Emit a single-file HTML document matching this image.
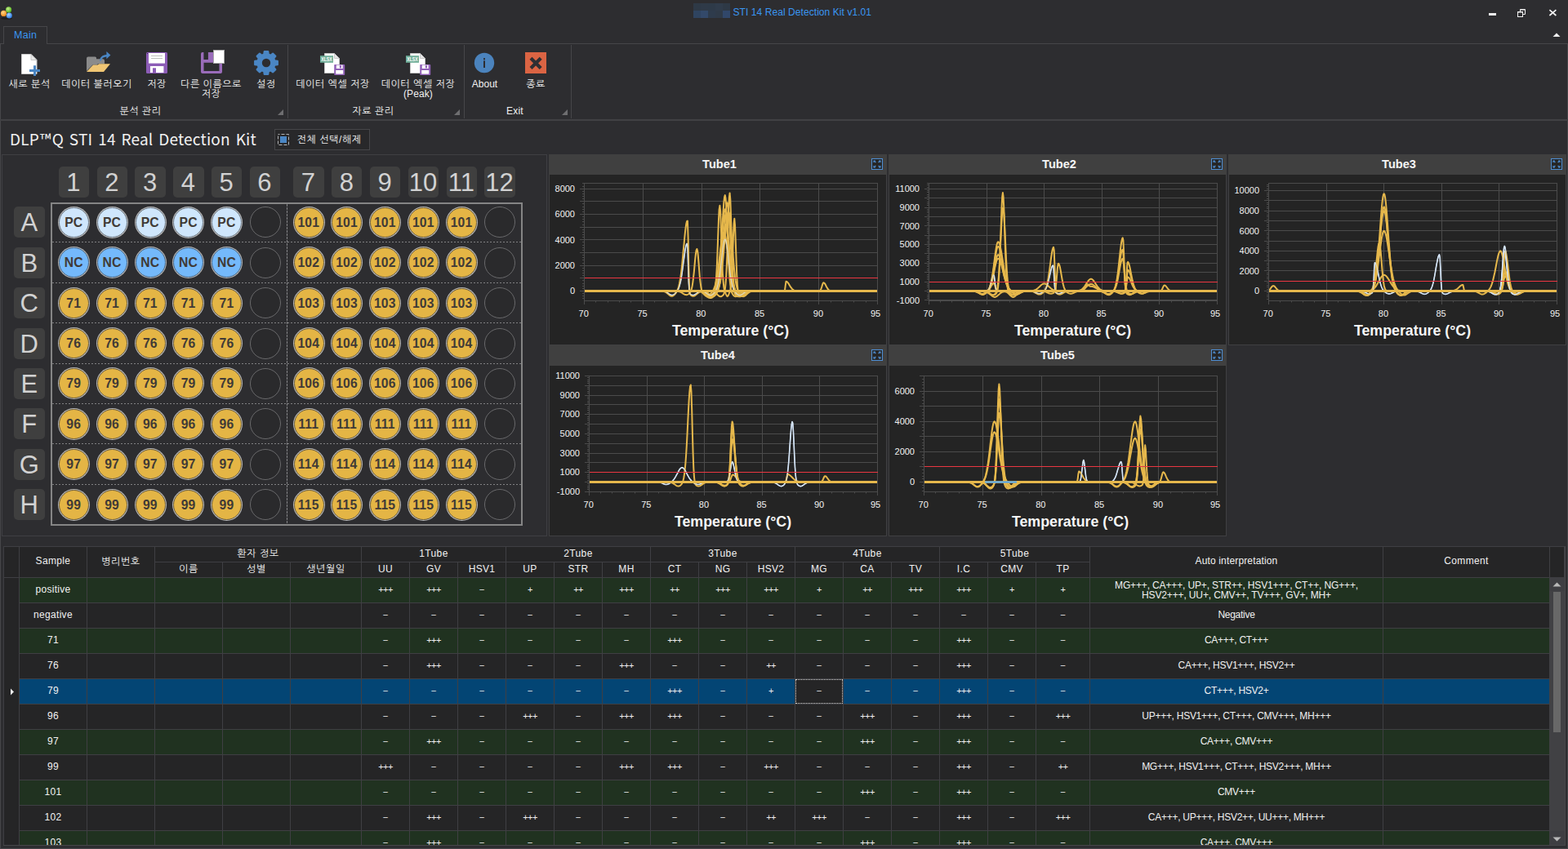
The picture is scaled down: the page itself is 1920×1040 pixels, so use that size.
<!DOCTYPE html><html lang="ko"><head><meta charset="utf-8"><title>STI 14 Real Detection Kit v1.01</title><style>
*{box-sizing:border-box;margin:0;padding:0}
html,body{width:1920px;height:1040px;overflow:hidden;background:#2d2d30;}
body{position:relative;font-family:"Liberation Sans","NanumGothic",sans-serif;font-size:12px;color:#f1f1f1;line-height:12px;}
.abs{position:absolute}
.t{position:absolute;white-space:nowrap;letter-spacing:0.5px}
.c{text-align:center}
.ln{position:absolute;background:#464649}
.rl{position:absolute;text-align:center;white-space:nowrap;letter-spacing:0.55px;line-height:12px}
.hd{position:absolute;width:37.4px;height:38px;border-radius:5px;background:#3f3f3f;color:#d2d2d2;text-align:center;text-indent:-1px;font-family:"Liberation Sans",sans-serif}
.w{position:absolute;width:37px;height:37px;border-radius:50%;text-align:center;font:bold 15.7px/36px "Liberation Sans",sans-serif;color:#403a36;letter-spacing:0.15px;text-indent:-0.6px}
.we{border:1.2px solid #69696b;background:#2a2a2c;width:38px;height:38px;margin:-0.5px}
.wy{border:1px solid #6b5d3c;background:#e4b545;box-shadow:0 0 0 1px #b4b4b4}
.wp{border:1px solid #6f7a86;background:#cfe6fc;box-shadow:0 0 0 1px #b4b4b4}
.wn{border:1px solid #4a6784;background:#74b9fb;box-shadow:0 0 0 1px #b0b0b0}
.ct{position:absolute;height:25px;background:#404040;text-align:center;font:bold 14.6px/24px "Liberation Sans",sans-serif;color:#f4f4f4;padding-left:4px}
.cb{position:absolute;background:#242424;border:1px solid #404042;border-top:none}
svg text{font-family:"Liberation Sans",sans-serif}
.cell{position:absolute;text-align:center;white-space:nowrap;overflow:hidden}
</style></head><body>
<svg class="abs" style="left:0;top:6px" width="18" height="20" viewBox="0 0 18 20">
<defs>
<radialGradient id="gG" cx="40%" cy="35%" r="65%"><stop offset="0" stop-color="#c8f58a"/><stop offset="1" stop-color="#4fae1c"/></radialGradient>
<radialGradient id="gO" cx="40%" cy="35%" r="65%"><stop offset="0" stop-color="#ffd88a"/><stop offset="1" stop-color="#f08a1a"/></radialGradient>
<radialGradient id="gB" cx="40%" cy="35%" r="65%"><stop offset="0" stop-color="#a8d4ff"/><stop offset="1" stop-color="#2f7fe8"/></radialGradient>
</defs>
<ellipse cx="8" cy="16.6" rx="7" ry="1.2" fill="#1c1c1e"/>
<circle cx="10.6" cy="5.9" r="3.6" fill="url(#gG)"/>
<circle cx="4.5" cy="10.4" r="3.6" fill="url(#gO)"/>
<circle cx="11.3" cy="12.9" r="3.5" fill="url(#gB)"/>
</svg>
<div class="abs" style="left:849px;top:4px;width:9px;height:9px;background:#2e3946"></div>
<div class="abs" style="left:849px;top:13px;width:9px;height:9px;background:#2f4460"></div>
<div class="abs" style="left:858px;top:4px;width:9px;height:9px;background:#2f3a48"></div>
<div class="abs" style="left:858px;top:13px;width:9px;height:9px;background:#33496a"></div>
<div class="abs" style="left:867px;top:4px;width:9px;height:9px;background:#2e3a48"></div>
<div class="abs" style="left:867px;top:13px;width:9px;height:9px;background:#2e3b4c"></div>
<div class="abs" style="left:876px;top:4px;width:9px;height:9px;background:#303c4b"></div>
<div class="abs" style="left:876px;top:13px;width:9px;height:9px;background:#2f3a48"></div>
<div class="abs" style="left:885px;top:4px;width:9px;height:9px;background:#2e3946"></div>
<div class="abs" style="left:885px;top:13px;width:9px;height:9px;background:#31476a"></div>
<div class="t" style="left:897.5px;top:9px;color:#3a96f2;letter-spacing:0.07px;font-family:'Liberation Sans',sans-serif">STI 14 Real Detection Kit v1.01</div>
<div class="abs" style="left:1823px;top:16px;width:9px;height:3px;background:#f1f1f1"></div>
<svg class="abs" style="left:1857px;top:10px" width="12" height="12" viewBox="0 0 12 12" fill="none" stroke="#f1f1f1" stroke-width="1"><path d="M4.5 4v-2.5h6v6h-2.5" /><path d="M4.5 2h6" /><rect x="1.5" y="4.5" width="6" height="6"/><path d="M1.5 5h6"/></svg>
<svg class="abs" style="left:1895px;top:10px" width="12" height="12" viewBox="0 0 12 12" stroke="#f1f1f1" stroke-width="1.7"><path d="M2.4 2.2l8 6.8M10.4 2.2l-8 6.8"/></svg>
<svg class="abs" style="left:1901px;top:39px" width="10" height="7" viewBox="0 0 10 7"><path d="M0.5 6L5 1.5L9.5 6z" fill="#f1f1f1"/></svg>
<div class="ln" style="left:0;top:53px;width:1920px;height:1px"></div>
<div class="abs" style="left:4px;top:32px;width:54px;height:22px;border:1px solid #464649;border-bottom:none;background:#2d2d30"></div>
<div class="t" style="left:17px;top:37px;color:#3a96f2;font-size:12.5px;letter-spacing:0.3px;font-family:'Liberation Sans',sans-serif">Main</div>
<div class="ln" style="left:0;top:54px;width:1px;height:986px"></div>
<div class="ln" style="left:1919px;top:54px;width:1px;height:986px"></div>
<div class="ln" style="left:0;top:1039px;width:1920px;height:1px"></div>
<div class="ln" style="left:0;top:146px;width:1920px;height:2px;background:#414144"></div>
<div class="ln" style="left:352px;top:55px;width:1px;height:90px"></div>
<div class="ln" style="left:568px;top:55px;width:1px;height:90px"></div>
<div class="ln" style="left:699px;top:55px;width:1px;height:90px"></div>
<svg class="abs" style="left:340px;top:134px" width="7" height="7"><path d="M7 0V7H0z" fill="#6e6e70"/></svg>
<svg class="abs" style="left:556px;top:134px" width="7" height="7"><path d="M7 0V7H0z" fill="#6e6e70"/></svg>
<svg class="abs" style="left:688px;top:134px" width="7" height="7"><path d="M7 0V7H0z" fill="#6e6e70"/></svg>
<svg class="abs" style="left:24px;top:62px" width="28" height="32" viewBox="0 0 28 32">
<path d="M2.5 4.5h11.5l7 7v17H2.5z" fill="#fff" stroke="#c9c9c9" stroke-width="1"/>
<path d="M14 4.5v7h7z" fill="#e9e9e9" stroke="#bdbdbd" stroke-width="0.8"/>
<path d="M17 18.2h3v4.8h5v3h-5v5h-3v-5h-5v-3h5z" fill="#4a86c4"/></svg>
<div class="rl" style="left:-29.0px;top:97px;width:130px">새로 분석</div>
<svg class="abs" style="left:104px;top:60px" width="34" height="32" viewBox="0 0 34 32">
<path d="M2 11.5q0-2 2-2h8.5q1.5 0 1.5 1.5v1.2h7.8q2.2 0 2.2 2v4H16l-1.6 1.4H9.5L2 27z" fill="#8b8b8b"/>
<path d="M2 28L10 19.6h5.5l1.8-1.4H31L23 28z" fill="#f0c674"/>
<path d="M18 14.6c0.3-4.6 3.4-7.2 8.4-7.6V3l5 4.6-5 4.6V9.6c-3.4 0.2-5.6 1.6-6.6 5z" fill="#4a86c4"/></svg>
<div class="rl" style="left:53.5px;top:97px;width:130px">데이터 불러오기</div>
<svg class="abs" style="left:179px;top:64px" width="26" height="26" viewBox="0 0 26 26">
<rect x="0" y="0" width="26" height="26" rx="1.5" fill="#8c5cb6"/>
<rect x="3" y="1" width="20" height="12.6" fill="#fff"/>
<rect x="6" y="4" width="14" height="1" fill="#bdbdbd"/><rect x="6" y="7" width="14" height="1" fill="#bdbdbd"/>
<rect x="5" y="17" width="16.4" height="8" fill="#fff"/><rect x="8" y="19.3" width="4" height="5.7" fill="#8c5cb6"/>
<rect x="1" y="1" width="1" height="1" fill="#3a2a55"/></svg>
<div class="rl" style="left:127.0px;top:97px;width:130px">저장</div>
<svg class="abs" style="left:245px;top:60px" width="31" height="31" viewBox="0 0 31 31">
<path d="M4 4h12.5v12.8H4.5V27h19V17.8H27V28q0 2-2 2H3q-2 0-2-2V6q0-2 2-2z" fill="#9a6cba"/>
<rect x="4.4" y="4" width="5.5" height="9" fill="#2d2d30"/>
<rect x="16.5" y="1.5" width="13" height="16" fill="#fff" stroke="#a8a8a8" stroke-width="1"/></svg>
<div class="rl" style="left:193.5px;top:97px;width:130px">다른 이름으로</div>
<div class="rl" style="left:193.5px;top:109px;width:130px">저장</div>
<svg class="abs" style="left:309px;top:60px" width="34" height="34" viewBox="0 0 34 34">
<path d="M14.83 3.27 L19.17 3.27 L19.64 6.73 L22.40 7.88 L25.17 5.75 L28.25 8.83 L26.12 11.60 L27.27 14.36 L30.73 14.83 L30.73 19.17 L27.27 19.64 L26.12 22.40 L28.25 25.17 L25.17 28.25 L22.40 26.12 L19.64 27.27 L19.17 30.73 L14.83 30.73 L14.36 27.27 L11.60 26.12 L8.83 28.25 L5.75 25.17 L7.88 22.40 L6.73 19.64 L3.27 19.17 L3.27 14.83 L6.73 14.36 L7.88 11.60 L5.75 8.83 L8.83 5.75 L11.60 7.88 L14.36 6.73Z" fill="#4a86c4" stroke="#4a86c4" stroke-width="2.4" stroke-linejoin="round"/>
<circle cx="17" cy="17" r="5.2" fill="#2d2d30"/></svg>
<div class="rl" style="left:260.8px;top:97px;width:130px">설정</div>
<div class="rl" style="left:107.0px;top:130px;width:130px">분석 관리</div>
<svg class="abs" style="left:391px;top:63px" width="32" height="30" viewBox="0 0 32 30">
<path d="M6.5 2.5h12l6 6v18H6.5z" fill="#fff" stroke="#c4c4c4" stroke-width="1"/>
<path d="M18.5 2.5v6h6z" fill="#e6e6e6" stroke="#bdbdbd" stroke-width="0.8"/>
<rect x="1" y="5.2" width="16" height="8.6" fill="#6fae98"/>
<text x="2.2" y="12.1" font-size="7" font-weight="bold" fill="#fff" textLength="13.6" lengthAdjust="spacingAndGlyphs" font-family="Liberation Sans,sans-serif">XLSX</text>
<rect x="18.2" y="16" width="13" height="13" rx="0.8" fill="#9262b8"/>
<rect x="20.8" y="16.6" width="7.8" height="4.4" fill="#fff"/><rect x="24.8" y="17.2" width="2.2" height="3.2" fill="#9262b8"/>
<rect x="20.2" y="23" width="9" height="4.6" fill="#fff"/></svg>
<div class="rl" style="left:342.5px;top:97px;width:130px">데이터 엑셀 저장</div>
<svg class="abs" style="left:496px;top:63px" width="32" height="30" viewBox="0 0 32 30">
<path d="M6.5 2.5h12l6 6v18H6.5z" fill="#fff" stroke="#c4c4c4" stroke-width="1"/>
<path d="M18.5 2.5v6h6z" fill="#e6e6e6" stroke="#bdbdbd" stroke-width="0.8"/>
<rect x="1" y="5.2" width="16" height="8.6" fill="#6fae98"/>
<text x="2.2" y="12.1" font-size="7" font-weight="bold" fill="#fff" textLength="13.6" lengthAdjust="spacingAndGlyphs" font-family="Liberation Sans,sans-serif">XLSX</text>
<rect x="18.2" y="16" width="13" height="13" rx="0.8" fill="#9262b8"/>
<rect x="20.8" y="16.6" width="7.8" height="4.4" fill="#fff"/><rect x="24.8" y="17.2" width="2.2" height="3.2" fill="#9262b8"/>
<rect x="20.2" y="23" width="9" height="4.6" fill="#fff"/></svg>
<div class="rl" style="left:447.0px;top:97px;width:130px">데이터 엑셀 저장</div>
<div class="rl" style="left:447.0px;top:109px;width:130px;letter-spacing:0.1px">(Peak)</div>
<div class="rl" style="left:392.0px;top:130px;width:130px">자료 관리</div>
<svg class="abs" style="left:580px;top:64px" width="26" height="26" viewBox="0 0 26 26"><circle cx="13" cy="13" r="12.2" fill="#4b83bd"/><rect x="12" y="7.2" width="2" height="2" fill="#2d2d30"/><rect x="12" y="10.4" width="2" height="8.6" fill="#2d2d30"/></svg>
<div class="rl" style="left:528.5px;top:97px;width:130px;letter-spacing:0px">About</div>
<svg class="abs" style="left:643px;top:64px" width="26" height="26" viewBox="0 0 26 26"><rect width="26" height="26" fill="#db6443"/><path d="M7 7.2L19.2 19.4M19.2 7.2L7 19.4" stroke="#2f2f33" stroke-width="4.2"/></svg>
<div class="rl" style="left:591.0px;top:97px;width:130px">종료</div>
<div class="rl" style="left:565.5px;top:130px;width:130px;letter-spacing:0.2px">Exit</div>
<div class="t" style="left:12px;top:155px;font:19px/30px 'Noto Sans CJK KR','Liberation Sans',sans-serif;letter-spacing:0.2px;word-spacing:1.3px;color:#f1f1f1">DLP<span style="margin:0 1px">™</span>Q STI 14 Real Detection Kit</div>
<div class="abs" style="left:336px;top:158px;width:117px;height:26px;border:1px solid #464649;background:#28282a"></div>
<svg class="abs" style="left:340px;top:164px" width="14" height="14" viewBox="0 0 14 14"><rect x="0.5" y="0.5" width="13" height="13" fill="none" stroke="#b4b4b4" stroke-width="1" stroke-dasharray="4 2" stroke-dashoffset="2"/><rect x="3" y="3" width="8" height="8" fill="#4a86c4"/></svg>
<div class="t" style="left:363.5px;top:165px;letter-spacing:0.6px">전체 선택/해제</div>
<div class="abs" style="left:2px;top:189px;width:668px;height:468px;border:1px solid #3f3f43"></div>
<div class="hd" style="left:71.8px;top:204px;font-size:31px;line-height:39px">1</div>
<div class="hd" style="left:118.6px;top:204px;font-size:31px;line-height:39px">2</div>
<div class="hd" style="left:165.4px;top:204px;font-size:31px;line-height:39px">3</div>
<div class="hd" style="left:212.2px;top:204px;font-size:31px;line-height:39px">4</div>
<div class="hd" style="left:259.0px;top:204px;font-size:31px;line-height:39px">5</div>
<div class="hd" style="left:305.8px;top:204px;font-size:31px;line-height:39px">6</div>
<div class="hd" style="left:359.3px;top:204px;font-size:31px;line-height:39px">7</div>
<div class="hd" style="left:406.1px;top:204px;font-size:31px;line-height:39px">8</div>
<div class="hd" style="left:452.9px;top:204px;font-size:31px;line-height:39px">9</div>
<div class="hd" style="left:499.8px;top:204px;font-size:31px;line-height:39px">10</div>
<div class="hd" style="left:546.6px;top:204px;font-size:31px;line-height:39px">11</div>
<div class="hd" style="left:593.4px;top:204px;font-size:31px;line-height:39px">12</div>
<div class="hd" style="left:17.4px;top:253.3px;width:37.8px;font-size:31px;line-height:39px">A</div>
<div class="hd" style="left:17.4px;top:302.7px;width:37.8px;font-size:31px;line-height:39px">B</div>
<div class="hd" style="left:17.4px;top:352.1px;width:37.8px;font-size:31px;line-height:39px">C</div>
<div class="hd" style="left:17.4px;top:401.5px;width:37.8px;font-size:31px;line-height:39px">D</div>
<div class="hd" style="left:17.4px;top:450.9px;width:37.8px;font-size:31px;line-height:39px">E</div>
<div class="hd" style="left:17.4px;top:500.2px;width:37.8px;font-size:31px;line-height:39px">F</div>
<div class="hd" style="left:17.4px;top:549.6px;width:37.8px;font-size:31px;line-height:39px">G</div>
<div class="hd" style="left:17.4px;top:599.0px;width:37.8px;font-size:31px;line-height:39px">H</div>
<div class="abs" style="left:62px;top:248px;width:578px;height:396px;border:2px solid #858585"></div>
<div class="abs" style="left:64px;top:296px;width:574px;height:1px;background:repeating-linear-gradient(90deg,#808082 0 2px,transparent 2px 4px)"></div>
<div class="abs" style="left:64px;top:346px;width:574px;height:1px;background:repeating-linear-gradient(90deg,#808082 0 2px,transparent 2px 4px)"></div>
<div class="abs" style="left:64px;top:395px;width:574px;height:1px;background:repeating-linear-gradient(90deg,#808082 0 2px,transparent 2px 4px)"></div>
<div class="abs" style="left:64px;top:445px;width:574px;height:1px;background:repeating-linear-gradient(90deg,#808082 0 2px,transparent 2px 4px)"></div>
<div class="abs" style="left:64px;top:494px;width:574px;height:1px;background:repeating-linear-gradient(90deg,#808082 0 2px,transparent 2px 4px)"></div>
<div class="abs" style="left:64px;top:543px;width:574px;height:1px;background:repeating-linear-gradient(90deg,#808082 0 2px,transparent 2px 4px)"></div>
<div class="abs" style="left:64px;top:593px;width:574px;height:1px;background:repeating-linear-gradient(90deg,#808082 0 2px,transparent 2px 4px)"></div>
<div class="abs" style="left:351px;top:250px;width:1px;height:392px;background:repeating-linear-gradient(180deg,#858587 0 2.5px,transparent 2.5px 4px)"></div>
<div class="w wp" style="left:72.0px;top:253.8px">PC</div>
<div class="w wp" style="left:118.8px;top:253.8px">PC</div>
<div class="w wp" style="left:165.6px;top:253.8px">PC</div>
<div class="w wp" style="left:212.4px;top:253.8px">PC</div>
<div class="w wp" style="left:259.2px;top:253.8px">PC</div>
<div class="w we" style="left:306.0px;top:253.8px"></div>
<div class="w wy" style="left:359.5px;top:253.8px">101</div>
<div class="w wy" style="left:406.3px;top:253.8px">101</div>
<div class="w wy" style="left:453.1px;top:253.8px">101</div>
<div class="w wy" style="left:500.0px;top:253.8px">101</div>
<div class="w wy" style="left:546.8px;top:253.8px">101</div>
<div class="w we" style="left:593.6px;top:253.8px"></div>
<div class="w wn" style="left:72.0px;top:303.2px">NC</div>
<div class="w wn" style="left:118.8px;top:303.2px">NC</div>
<div class="w wn" style="left:165.6px;top:303.2px">NC</div>
<div class="w wn" style="left:212.4px;top:303.2px">NC</div>
<div class="w wn" style="left:259.2px;top:303.2px">NC</div>
<div class="w we" style="left:306.0px;top:303.2px"></div>
<div class="w wy" style="left:359.5px;top:303.2px">102</div>
<div class="w wy" style="left:406.3px;top:303.2px">102</div>
<div class="w wy" style="left:453.1px;top:303.2px">102</div>
<div class="w wy" style="left:500.0px;top:303.2px">102</div>
<div class="w wy" style="left:546.8px;top:303.2px">102</div>
<div class="w we" style="left:593.6px;top:303.2px"></div>
<div class="w wy" style="left:72.0px;top:352.6px">71</div>
<div class="w wy" style="left:118.8px;top:352.6px">71</div>
<div class="w wy" style="left:165.6px;top:352.6px">71</div>
<div class="w wy" style="left:212.4px;top:352.6px">71</div>
<div class="w wy" style="left:259.2px;top:352.6px">71</div>
<div class="w we" style="left:306.0px;top:352.6px"></div>
<div class="w wy" style="left:359.5px;top:352.6px">103</div>
<div class="w wy" style="left:406.3px;top:352.6px">103</div>
<div class="w wy" style="left:453.1px;top:352.6px">103</div>
<div class="w wy" style="left:500.0px;top:352.6px">103</div>
<div class="w wy" style="left:546.8px;top:352.6px">103</div>
<div class="w we" style="left:593.6px;top:352.6px"></div>
<div class="w wy" style="left:72.0px;top:402.0px">76</div>
<div class="w wy" style="left:118.8px;top:402.0px">76</div>
<div class="w wy" style="left:165.6px;top:402.0px">76</div>
<div class="w wy" style="left:212.4px;top:402.0px">76</div>
<div class="w wy" style="left:259.2px;top:402.0px">76</div>
<div class="w we" style="left:306.0px;top:402.0px"></div>
<div class="w wy" style="left:359.5px;top:402.0px">104</div>
<div class="w wy" style="left:406.3px;top:402.0px">104</div>
<div class="w wy" style="left:453.1px;top:402.0px">104</div>
<div class="w wy" style="left:500.0px;top:402.0px">104</div>
<div class="w wy" style="left:546.8px;top:402.0px">104</div>
<div class="w we" style="left:593.6px;top:402.0px"></div>
<div class="w wy" style="left:72.0px;top:451.4px">79</div>
<div class="w wy" style="left:118.8px;top:451.4px">79</div>
<div class="w wy" style="left:165.6px;top:451.4px">79</div>
<div class="w wy" style="left:212.4px;top:451.4px">79</div>
<div class="w wy" style="left:259.2px;top:451.4px">79</div>
<div class="w we" style="left:306.0px;top:451.4px"></div>
<div class="w wy" style="left:359.5px;top:451.4px">106</div>
<div class="w wy" style="left:406.3px;top:451.4px">106</div>
<div class="w wy" style="left:453.1px;top:451.4px">106</div>
<div class="w wy" style="left:500.0px;top:451.4px">106</div>
<div class="w wy" style="left:546.8px;top:451.4px">106</div>
<div class="w we" style="left:593.6px;top:451.4px"></div>
<div class="w wy" style="left:72.0px;top:500.8px">96</div>
<div class="w wy" style="left:118.8px;top:500.8px">96</div>
<div class="w wy" style="left:165.6px;top:500.8px">96</div>
<div class="w wy" style="left:212.4px;top:500.8px">96</div>
<div class="w wy" style="left:259.2px;top:500.8px">96</div>
<div class="w we" style="left:306.0px;top:500.8px"></div>
<div class="w wy" style="left:359.5px;top:500.8px">111</div>
<div class="w wy" style="left:406.3px;top:500.8px">111</div>
<div class="w wy" style="left:453.1px;top:500.8px">111</div>
<div class="w wy" style="left:500.0px;top:500.8px">111</div>
<div class="w wy" style="left:546.8px;top:500.8px">111</div>
<div class="w we" style="left:593.6px;top:500.8px"></div>
<div class="w wy" style="left:72.0px;top:550.1px">97</div>
<div class="w wy" style="left:118.8px;top:550.1px">97</div>
<div class="w wy" style="left:165.6px;top:550.1px">97</div>
<div class="w wy" style="left:212.4px;top:550.1px">97</div>
<div class="w wy" style="left:259.2px;top:550.1px">97</div>
<div class="w we" style="left:306.0px;top:550.1px"></div>
<div class="w wy" style="left:359.5px;top:550.1px">114</div>
<div class="w wy" style="left:406.3px;top:550.1px">114</div>
<div class="w wy" style="left:453.1px;top:550.1px">114</div>
<div class="w wy" style="left:500.0px;top:550.1px">114</div>
<div class="w wy" style="left:546.8px;top:550.1px">114</div>
<div class="w we" style="left:593.6px;top:550.1px"></div>
<div class="w wy" style="left:72.0px;top:599.5px">99</div>
<div class="w wy" style="left:118.8px;top:599.5px">99</div>
<div class="w wy" style="left:165.6px;top:599.5px">99</div>
<div class="w wy" style="left:212.4px;top:599.5px">99</div>
<div class="w wy" style="left:259.2px;top:599.5px">99</div>
<div class="w we" style="left:306.0px;top:599.5px"></div>
<div class="w wy" style="left:359.5px;top:599.5px">115</div>
<div class="w wy" style="left:406.3px;top:599.5px">115</div>
<div class="w wy" style="left:453.1px;top:599.5px">115</div>
<div class="w wy" style="left:500.0px;top:599.5px">115</div>
<div class="w wy" style="left:546.8px;top:599.5px">115</div>
<div class="w we" style="left:593.6px;top:599.5px"></div>
<div class="ct" style="left:672px;top:189px;width:414px;height:25px;line-height:24px;padding-left:4px">Tube1</div>
<svg class="abs" style="left:1067px;top:194px" width="14" height="14" viewBox="0 0 14 14"><rect x="0.5" y="0.5" width="13" height="13" fill="#262626" stroke="#4f8fd4"/><g fill="#4f8fd4"><path d="M2.4 2.4h3l-0.9 0.9 1.3 1.3-0.9 0.9-1.3-1.3-1.2 1.2z"/><path d="M2.4 2.4h3l-0.9 0.9 1.3 1.3-0.9 0.9-1.3-1.3-1.2 1.2z" transform="translate(14 0) scale(-1 1)"/><path d="M2.4 2.4h3l-0.9 0.9 1.3 1.3-0.9 0.9-1.3-1.3-1.2 1.2z" transform="translate(0 14) scale(1 -1)"/><path d="M2.4 2.4h3l-0.9 0.9 1.3 1.3-0.9 0.9-1.3-1.3-1.2 1.2z" transform="translate(14 14) scale(-1 -1)"/></g></svg>
<div class="cb" style="left:672px;top:214px;width:414px;height:209px"></div>
<svg class="abs" style="left:672px;top:214px" width="414" height="209" viewBox="672 214 414 209"><path d="M710 356.5H1075" stroke="#4b4b4b" stroke-width="1"/><path d="M710 340.5H1075" stroke="#4b4b4b" stroke-width="1"/><path d="M710 325.5H1075" stroke="#4b4b4b" stroke-width="1"/><path d="M710 309.5H1075" stroke="#4b4b4b" stroke-width="1"/><path d="M710 293.5H1075" stroke="#4b4b4b" stroke-width="1"/><path d="M710 278.5H1075" stroke="#4b4b4b" stroke-width="1"/><path d="M710 262.5H1075" stroke="#4b4b4b" stroke-width="1"/><path d="M710 246.5H1075" stroke="#4b4b4b" stroke-width="1"/><path d="M710 231.5H1075" stroke="#4b4b4b" stroke-width="1"/><path d="M710 356.5H715" stroke="#4b4b4b" stroke-width="1"/><text x="704" y="360.2" font-size="11" fill="#f2f2f2" text-anchor="end">0</text><path d="M710 325.5H715" stroke="#4b4b4b" stroke-width="1"/><text x="704" y="328.9" font-size="11" fill="#f2f2f2" text-anchor="end">2000</text><path d="M710 293.5H715" stroke="#4b4b4b" stroke-width="1"/><text x="704" y="297.5" font-size="11" fill="#f2f2f2" text-anchor="end">4000</text><path d="M710 262.5H715" stroke="#4b4b4b" stroke-width="1"/><text x="704" y="266.2" font-size="11" fill="#f2f2f2" text-anchor="end">6000</text><path d="M710 231.5H715" stroke="#4b4b4b" stroke-width="1"/><text x="704" y="234.9" font-size="11" fill="#f2f2f2" text-anchor="end">8000</text><path d="M713 365.5H715" stroke="#4b4b4b" stroke-width="1"/><path d="M713 362.5H715" stroke="#4b4b4b" stroke-width="1"/><path d="M713 359.5H715" stroke="#4b4b4b" stroke-width="1"/><path d="M713 356.5H715" stroke="#4b4b4b" stroke-width="1"/><path d="M713 353.5H715" stroke="#4b4b4b" stroke-width="1"/><path d="M713 350.5H715" stroke="#4b4b4b" stroke-width="1"/><path d="M713 347.5H715" stroke="#4b4b4b" stroke-width="1"/><path d="M713 343.5H715" stroke="#4b4b4b" stroke-width="1"/><path d="M713 340.5H715" stroke="#4b4b4b" stroke-width="1"/><path d="M713 337.5H715" stroke="#4b4b4b" stroke-width="1"/><path d="M713 334.5H715" stroke="#4b4b4b" stroke-width="1"/><path d="M713 331.5H715" stroke="#4b4b4b" stroke-width="1"/><path d="M713 328.5H715" stroke="#4b4b4b" stroke-width="1"/><path d="M713 325.5H715" stroke="#4b4b4b" stroke-width="1"/><path d="M713 322.5H715" stroke="#4b4b4b" stroke-width="1"/><path d="M713 318.5H715" stroke="#4b4b4b" stroke-width="1"/><path d="M713 315.5H715" stroke="#4b4b4b" stroke-width="1"/><path d="M713 312.5H715" stroke="#4b4b4b" stroke-width="1"/><path d="M713 309.5H715" stroke="#4b4b4b" stroke-width="1"/><path d="M713 306.5H715" stroke="#4b4b4b" stroke-width="1"/><path d="M713 303.5H715" stroke="#4b4b4b" stroke-width="1"/><path d="M713 300.5H715" stroke="#4b4b4b" stroke-width="1"/><path d="M713 296.5H715" stroke="#4b4b4b" stroke-width="1"/><path d="M713 293.5H715" stroke="#4b4b4b" stroke-width="1"/><path d="M713 290.5H715" stroke="#4b4b4b" stroke-width="1"/><path d="M713 287.5H715" stroke="#4b4b4b" stroke-width="1"/><path d="M713 284.5H715" stroke="#4b4b4b" stroke-width="1"/><path d="M713 281.5H715" stroke="#4b4b4b" stroke-width="1"/><path d="M713 278.5H715" stroke="#4b4b4b" stroke-width="1"/><path d="M713 275.5H715" stroke="#4b4b4b" stroke-width="1"/><path d="M713 271.5H715" stroke="#4b4b4b" stroke-width="1"/><path d="M713 268.5H715" stroke="#4b4b4b" stroke-width="1"/><path d="M713 265.5H715" stroke="#4b4b4b" stroke-width="1"/><path d="M713 262.5H715" stroke="#4b4b4b" stroke-width="1"/><path d="M713 259.5H715" stroke="#4b4b4b" stroke-width="1"/><path d="M713 256.5H715" stroke="#4b4b4b" stroke-width="1"/><path d="M713 253.5H715" stroke="#4b4b4b" stroke-width="1"/><path d="M713 249.5H715" stroke="#4b4b4b" stroke-width="1"/><path d="M713 246.5H715" stroke="#4b4b4b" stroke-width="1"/><path d="M713 243.5H715" stroke="#4b4b4b" stroke-width="1"/><path d="M713 240.5H715" stroke="#4b4b4b" stroke-width="1"/><path d="M713 237.5H715" stroke="#4b4b4b" stroke-width="1"/><path d="M713 234.5H715" stroke="#4b4b4b" stroke-width="1"/><path d="M713 231.5H715" stroke="#4b4b4b" stroke-width="1"/><path d="M713 228.5H715" stroke="#4b4b4b" stroke-width="1"/><path d="M713 224.5H715" stroke="#4b4b4b" stroke-width="1"/><path d="M715.5 224V373" stroke="#4b4b4b" stroke-width="1"/><text x="714.7" y="387.5" font-size="11" fill="#f2f2f2" text-anchor="middle">70</text><path d="M787.5 224V373" stroke="#4b4b4b" stroke-width="1"/><text x="786.5" y="387.5" font-size="11" fill="#f2f2f2" text-anchor="middle">75</text><path d="M859.5 224V373" stroke="#4b4b4b" stroke-width="1"/><text x="858.3" y="387.5" font-size="11" fill="#f2f2f2" text-anchor="middle">80</text><path d="M930.5 224V373" stroke="#4b4b4b" stroke-width="1"/><text x="930.1" y="387.5" font-size="11" fill="#f2f2f2" text-anchor="middle">85</text><path d="M1002.5 224V373" stroke="#4b4b4b" stroke-width="1"/><text x="1001.9" y="387.5" font-size="11" fill="#f2f2f2" text-anchor="middle">90</text><path d="M1074.5 224V373" stroke="#4b4b4b" stroke-width="1"/><text x="1072.1" y="387.5" font-size="11" fill="#f2f2f2" text-anchor="middle">95</text><path d="M715.5 368V370.5" stroke="#4b4b4b" stroke-width="1"/><path d="M729.5 368V370.5" stroke="#4b4b4b" stroke-width="1"/><path d="M744.5 368V370.5" stroke="#4b4b4b" stroke-width="1"/><path d="M758.5 368V370.5" stroke="#4b4b4b" stroke-width="1"/><path d="M772.5 368V370.5" stroke="#4b4b4b" stroke-width="1"/><path d="M787.5 368V370.5" stroke="#4b4b4b" stroke-width="1"/><path d="M801.5 368V370.5" stroke="#4b4b4b" stroke-width="1"/><path d="M816.5 368V370.5" stroke="#4b4b4b" stroke-width="1"/><path d="M830.5 368V370.5" stroke="#4b4b4b" stroke-width="1"/><path d="M844.5 368V370.5" stroke="#4b4b4b" stroke-width="1"/><path d="M859.5 368V370.5" stroke="#4b4b4b" stroke-width="1"/><path d="M873.5 368V370.5" stroke="#4b4b4b" stroke-width="1"/><path d="M887.5 368V370.5" stroke="#4b4b4b" stroke-width="1"/><path d="M902.5 368V370.5" stroke="#4b4b4b" stroke-width="1"/><path d="M916.5 368V370.5" stroke="#4b4b4b" stroke-width="1"/><path d="M930.5 368V370.5" stroke="#4b4b4b" stroke-width="1"/><path d="M945.5 368V370.5" stroke="#4b4b4b" stroke-width="1"/><path d="M959.5 368V370.5" stroke="#4b4b4b" stroke-width="1"/><path d="M973.5 368V370.5" stroke="#4b4b4b" stroke-width="1"/><path d="M988.5 368V370.5" stroke="#4b4b4b" stroke-width="1"/><path d="M1002.5 368V370.5" stroke="#4b4b4b" stroke-width="1"/><path d="M1017.5 368V370.5" stroke="#4b4b4b" stroke-width="1"/><path d="M1031.5 368V370.5" stroke="#4b4b4b" stroke-width="1"/><path d="M1045.5 368V370.5" stroke="#4b4b4b" stroke-width="1"/><path d="M1060.5 368V370.5" stroke="#4b4b4b" stroke-width="1"/><path d="M1074.5 368V370.5" stroke="#4b4b4b" stroke-width="1"/><path d="M715 224.5H1075M715 368.5H1075" stroke="#4b4b4b" stroke-width="1"/><clipPath id="cpTube1"><rect x="716" y="224" width="359" height="144"/></clipPath><g clip-path="url(#cpTube1)" fill="none" stroke-linejoin="round"><path d="M811,356.6 811.7,356.7 812.4,356.8 813.1,356.9 813.9,357.1 814.6,357.3 815.3,357.6 816,357.9 816.7,358.4 817.5,358.8 818.2,359.3 818.9,359.8 819.6,360.3 820.3,360.7 821,361.1 821.8,361.4 822.5,361.5 823.2,361.5 823.9,361.3 824.6,361 825.4,360.6 826.1,360.1 826.8,359.5 827.5,358.7 828.2,357.9 828.9,357 829.7,355.9 830.4,354.5 831.1,352.9 831.8,350.8 832.5,348.3 833.3,345.3 834,341.6 834.7,337.3 835.4,332.5 836.1,327.2 836.8,321.7 837.6,316.1 838.3,310.8 839,306.1 839.7,302.3 840.4,299.7 841.1,298.4 841.9,300.9 842.6,322.4 843.3,345.2 844,356.3 844.7,359.5 845.5,360.4 846.2,360.9 846.9,361.2 847.6,361.4 848.3,361.5 849,361.5 849.8,361.3 850.5,361 851.2,360.6 851.9,360.2 852.6,359.7 853.4,359.2 854.1,358.7 854.8,358.2 855.5,357.8 856.2,357.5 856.9,357.3 857.7,357.1 858.4,357 859.1,357 859.8,357 860.5,357.1 861.3,357.2 862,357.4 862.7,357.7 863.4,358.1 864.1,358.6 864.8,359 865.6,359.6 866.3,360.1 867,360.6 867.7,361 868.4,361.4 869.2,361.6 869.9,361.7 870.6,361.6 871.3,361.4 872,361.1 872.7,360.6 873.5,360 874.2,359.3 874.9,358.5 875.6,357.6 876.3,356.5 877,355.1 877.8,353.4 878.5,351.2 879.2,348.4 879.9,345.1 880.6,340.9 881.4,336.1 882.1,330.5 882.8,324.4 883.5,318.1 884.2,311.7 884.9,305.7 885.7,300.5 886.4,296.5 887.1,293.9 887.8,293.1 888.5,293.9 889.3,296.5 890,300.5 890.7,305.7 891.4,311.7 892.1,318.1 892.8,324.4 893.6,330.5 894.3,336.1 895,340.9 895.7,345.1 896.4,348.4 897.2,351.2 897.9,353.4 898.6,355.1 899.3,356.5 900,357.6 900.7,358.5 901.5,359.3 902.2,360 902.9,360.6 903.6,361.1 904.3,361.4 905.1,361.6 905.8,361.7 906.5,361.6 907.2,361.4 907.9,361 908.6,360.6 909.4,360.1 910.1,359.6 910.8,359 911.5,358.5 912.2,358.1 913,357.7 913.7,357.4 914.4,357.2 915.1,357 915.8,356.8 916.5,356.7 917.3,356.6 918,356.6" stroke="#d5e6f8" stroke-width="1.6"/><path d="M810.3,356.6 811,356.7 811.7,356.8 812.4,356.9 813.1,357.1 813.9,357.3 814.6,357.6 815.3,358 816,358.4 816.7,359 817.5,359.6 818.2,360.2 818.9,360.8 819.6,361.4 820.3,361.9 821,362.4 821.8,362.7 822.5,362.8 823.2,362.7 823.9,362.5 824.6,362 825.4,361.5 826.1,360.7 826.8,359.9 827.5,358.9 828.2,357.8 828.9,356.5 829.7,355 830.4,353.1 831.1,350.8 831.8,347.9 832.5,344.3 833.3,340 834,334.8 834.7,328.8 835.4,322 836.1,314.6 836.8,306.7 837.6,298.7 838.3,291 839,284 839.7,278.1 840.4,273.7 841.1,271.1 841.9,270.5 842.6,290.8 843.3,327.7 844,351.1 844.7,359.1 845.5,361 846.2,361.7 846.9,362.2 847.6,362.6 848.3,362.8 849,362.8 849.8,362.6 850.5,362.3 851.2,361.9 851.9,361.3 852.6,360.7 853.4,360.1 854.1,359.5 854.8,358.9 855.5,358.4 856.2,357.9 856.9,357.5 857.7,357.2 858.4,357 859.1,356.9 859.8,356.7 860.5,356.7 861.3,356.6M869.9,356.6 870.6,356.7 871.3,356.7 872,356.9 872.7,357 873.5,357.3 874.2,357.6 874.9,358 875.6,358.5 876.3,359 877,359.6 877.8,360.3 878.5,361 879.2,361.6 879.9,362.2 880.6,362.7 881.4,363 882.1,363.2 882.8,363.2 883.5,363 884.2,362.6 884.9,362 885.7,361.2 886.4,360 887.1,357.9 887.8,354.3 888.5,347.9 889.3,337.6 890,322.4 890.7,302.4 891.4,279.6 892.1,258 892.8,242.3 893.6,236.5 894.3,244.1 895,264 895.7,289.8 896.4,314.6 897.2,334.1 897.9,347 898.6,354.5 899.3,358.4 900,360.4 900.7,361.5 901.5,362.3 902.2,362.8 902.9,363.1 903.6,363.2 904.3,363.2 905.1,363 905.8,362.6 906.5,362 907.2,361.4 907.9,360.7 908.6,360.1 909.4,359.4 910.1,358.8 910.8,358.3 911.5,357.8 912.2,357.5 913,357.2 913.7,357 914.4,356.8 915.1,356.7 915.8,356.6 916.5,356.6" stroke="#e6b84c" stroke-width="2.0"/><path d="M828.2,356.6 828.9,356.6 829.7,356.7 830.4,356.8 831.1,357 831.8,357.2 832.5,357.4 833.3,357.7 834,358.1 834.7,358.5 835.4,359 836.1,359.4 836.8,359.9 837.6,360.3 838.3,360.7 839,361 839.7,361.1 840.4,361.2 841.1,361.1 841.9,360.9 842.6,360.5 843.3,360 844,359.4 844.7,358.7 845.5,357.6 846.2,356.1 846.9,353.8 847.6,350.6 848.3,346.1 849,340.3 849.8,333.3 850.5,325.4 851.2,317.7 851.9,311.1 852.6,306.6 853.4,305 854.1,307.2 854.8,313.3 855.5,321.9 856.2,331.2 856.9,339.8 857.7,346.7 858.4,351.8 859.1,355.2 859.8,357.3 860.5,358.8 861.3,359.7 862,360.5 862.7,361.2 863.4,361.8 864.1,362.4 864.8,362.9 865.6,363.4 866.3,363.8 867,364.2 867.7,364.5 868.4,364.8 869.2,364.9 869.9,365 870.6,364.9 871.3,364.8 872,364.5 872.7,364 873.5,363.4 874.2,362.7 874.9,361.8 875.6,360.8 876.3,359.6 877,358.1 877.8,356.1 878.5,353.5 879.2,349.9 879.9,345.2 880.6,338.9 881.4,330.8 882.1,320.9 882.8,309.3 883.5,296.3 884.2,282.6 884.9,269.2 885.7,257.1 886.4,247.4 887.1,241.2 887.8,239.1 888.5,242.8 889.3,253 890,268.1 890.7,285.7 891.4,303.3 892.1,319.2 892.8,332.3 893.6,342.2 894.3,349.2 895,354 895.7,357.1 896.4,359.1 897.2,360.5 897.9,361.5 898.6,362.2 899.3,362.8 900,363.1 900.7,363.2 901.5,363.2 902.2,362.9 902.9,362.5 903.6,362 904.3,361.4 905.1,360.7 905.8,360 906.5,359.4 907.2,358.8 907.9,358.3 908.6,357.8 909.4,357.5 910.1,357.2 910.8,357 911.5,356.8 912.2,356.7 913,356.6 913.7,356.6" stroke="#e6b84c" stroke-width="2.0"/><path d="M857.7,356.6 858.4,356.7 859.1,356.7 859.8,356.9 860.5,357 861.3,357.3 862,357.6 862.7,358 863.4,358.5 864.1,359 864.8,359.6 865.6,360.3 866.3,361 867,361.6 867.7,362.2 868.4,362.7 869.2,363 869.9,363.2 870.6,363.2 871.3,363 872,362.6 872.7,362.1 873.5,361.3 874.2,360.1 874.9,358.2 875.6,354.9 876.3,349.3 877,340.3 877.8,327 878.5,309.5 879.2,289.6 879.9,270.7 880.6,256.9 881.4,251.8 882.1,258.2 882.8,275.3 883.5,297.4 884.2,318.7 884.9,335.2 885.7,346 886.4,352.2 887.1,355.5 887.8,357.5 888.5,359.3 889.3,361.1 890,362.5 890.7,363.1 891.4,362.5 892.1,361.1 892.8,359.3 893.6,357.4 894.3,354.9 895,350.6 895.7,342.6 896.4,329.3 897.2,310.8 897.9,290.4 898.6,274 899.3,267.8 900,275.5 900.7,294.6 901.5,317.2 902.2,336.3 902.9,349 903.6,355.9 904.3,359.1 905.1,360.7 905.8,361.6 906.5,362.1 907.2,362.5 907.9,362.8 908.6,362.9 909.4,362.8 910.1,362.5 910.8,362.1 911.5,361.6 912.2,360.9 913,360.3 913.7,359.7 914.4,359.1 915.1,358.5 915.8,358.1 916.5,357.7 917.3,357.3 918,357.1 918.7,356.9 919.4,356.8 920.1,356.7 920.8,356.6" stroke="#e6b84c" stroke-width="2.0"/><path d="M857.7,356.6 858.4,356.7 859.1,356.8 859.8,356.9 860.5,357.1 861.3,357.4 862,357.7 862.7,358.1 863.4,358.6 864.1,359.1 864.8,359.8 865.6,360.4 866.3,361.1 867,361.8 867.7,362.3 868.4,362.8 869.2,363.1 869.9,363.2 870.6,363.1 871.3,362.9 872,362.4 872.7,361.8 873.5,361 874.2,360.1 874.9,358.9 875.6,357.6 876.3,355.9 877,353.9 877.8,351.2 878.5,347.9 879.2,343.6 879.9,338.3 880.6,331.8 881.4,324.2 882.1,315.4 882.8,305.8 883.5,295.7 884.2,285.7 884.9,276.2 885.7,268 886.4,261.7 887.1,257.6 887.8,256.3 888.5,257.6 889.3,261.7 890,268 890.7,276.2 891.4,285.7 892.1,295.7 892.8,305.8 893.6,315.4 894.3,324.2 895,331.8 895.7,338.3 896.4,343.6 897.2,347.9 897.9,351.2 898.6,353.9 899.3,355.9 900,357.6 900.7,358.9 901.5,360.1 902.2,361 902.9,361.8 903.6,362.4 904.3,362.9 905.1,363.1 905.8,363.2 906.5,363.1 907.2,362.8 907.9,362.3 908.6,361.8 909.4,361.1 910.1,360.4 910.8,359.8 911.5,359.1 912.2,358.6 913,358.1 913.7,357.7 914.4,357.4 915.1,357.1 915.8,356.9 916.5,356.8 917.3,356.7 918,356.6" stroke="#e6b84c" stroke-width="2.0"/><path d="M856.2,356.6 856.9,356.7 857.7,356.8 858.4,356.9 859.1,357.1 859.8,357.3 860.5,357.6 861.3,358 862,358.5 862.7,359 863.4,359.7 864.1,360.3 864.8,361 865.6,361.6 866.3,362.1 867,362.6 867.7,362.9 868.4,363 869.2,362.9 869.9,362.7 870.6,362.2 871.3,361.6 872,360.9 872.7,360 873.5,359 874.2,357.8 874.9,356.5 875.6,354.9 876.3,352.9 877,350.5 877.8,347.4 878.5,343.7 879.2,339.1 879.9,333.7 880.6,327.3 881.4,320.1 882.1,312.2 882.8,303.9 883.5,295.4 884.2,287.2 884.9,279.6 885.7,273.2 886.4,268.2 887.1,265.1 887.8,264.1 888.5,265.1 889.3,268.2 890,273.2 890.7,279.6 891.4,287.2 892.1,295.4 892.8,303.9 893.6,312.2 894.3,320.1 895,327.3 895.7,333.7 896.4,339.1 897.2,343.7 897.9,347.4 898.6,350.5 899.3,352.9 900,354.9 900.7,356.5 901.5,357.8 902.2,359 902.9,360 903.6,360.9 904.3,361.6 905.1,362.2 905.8,362.7 906.5,362.9 907.2,363 907.9,362.9 908.6,362.6 909.4,362.1 910.1,361.6 910.8,361 911.5,360.3 912.2,359.7 913,359 913.7,358.5 914.4,358 915.1,357.6 915.8,357.3 916.5,357.1 917.3,356.9 918,356.8 918.7,356.7 919.4,356.6" stroke="#e6b84c" stroke-width="2.0"/><path d="M858.4,356.6 859.1,356.7 859.8,356.7 860.5,356.9 861.3,357 862,357.3 862.7,357.6 863.4,357.9 864.1,358.4 864.8,358.9 865.6,359.4 866.3,360 867,360.6 867.7,361.2 868.4,361.7 869.2,362.1 869.9,362.4 870.6,362.5 871.3,362.4 872,362.2 872.7,361.8 873.5,361.2 874.2,360.6 874.9,359.7 875.6,358.8 876.3,357.6 877,356.2 877.8,354.5 878.5,352.3 879.2,349.6 879.9,346.1 880.6,341.8 881.4,336.5 882.1,330.2 882.8,323.1 883.5,315.3 884.2,307.1 884.9,299 885.7,291.3 886.4,284.6 887.1,279.5 887.8,276.2 888.5,275.1 889.3,276.2 890,279.5 890.7,284.6 891.4,291.3 892.1,299 892.8,307.1 893.6,315.3 894.3,323.1 895,330.2 895.7,336.5 896.4,341.8 897.2,346.1 897.9,349.6 898.6,352.3 899.3,354.5 900,356.2 900.7,357.6 901.5,358.8 902.2,359.7 902.9,360.6 903.6,361.2 904.3,361.8 905.1,362.2 905.8,362.4 906.5,362.5 907.2,362.4 907.9,362.1 908.6,361.7 909.4,361.2 910.1,360.6 910.8,360 911.5,359.4 912.2,358.9 913,358.4 913.7,357.9 914.4,357.6 915.1,357.3 915.8,357 916.5,356.9 917.3,356.7 918,356.7 918.7,356.6" stroke="#e6b84c" stroke-width="2.0"/><path d="M860.5,356.6 861.3,356.7 862,356.8 862.7,356.9 863.4,357.1 864.1,357.4 864.8,357.7 865.6,358.1 866.3,358.6 867,359.1 867.7,359.8 868.4,360.4 869.2,361.1 869.9,361.8 870.6,362.3 871.3,362.8 872,363.1 872.7,363.2 873.5,363.1 874.2,362.9 874.9,362.4 875.6,361.8 876.3,361 877,360 877.8,358.8 878.5,357.4 879.2,355.7 879.9,353.5 880.6,350.7 881.4,347.1 882.1,342.6 882.8,336.8 883.5,329.9 884.2,321.6 884.9,312.2 885.7,301.9 886.4,291 887.1,280.2 887.8,270 888.5,261.1 889.3,254.3 890,249.9 890.7,248.4 891.4,250.6 892.1,256.8 892.8,266.3 893.6,278.1 894.3,291.1 895,304.1 895.7,316.3 896.4,327 897.2,335.9 897.9,342.9 898.6,348.3 899.3,352.4 900,355.3 900.7,357.4 901.5,359 902.2,360.3 902.9,361.3 903.6,362 904.3,362.6 905.1,363 905.8,363.2 906.5,363.2 907.2,363 907.9,362.7 908.6,362.2 909.4,361.6 910.1,360.9 910.8,360.2 911.5,359.6 912.2,359 913,358.4 913.7,358 914.4,357.6 915.1,357.3 915.8,357 916.5,356.9 917.3,356.7 918,356.7 918.7,356.6" stroke="#e6b84c" stroke-width="2.0"/><path d="M859.1,356.6 859.8,356.6 860.5,356.7 861.3,356.8 862,357 862.7,357.2 863.4,357.4 864.1,357.8 864.8,358.2 865.6,358.7 866.3,359.3 867,360 867.7,360.6 868.4,361.3 869.2,361.9 869.9,362.5 870.6,362.9 871.3,363.1 872,363.2 872.7,363.1 873.5,362.7 874.2,362.2 874.9,361.5 875.6,360.7 876.3,359.8 877,358.8 877.8,357.6 878.5,356.2 879.2,354.6 879.9,352.6 880.6,350.3 881.4,347.3 882.1,343.8 882.8,339.5 883.5,334.3 884.2,328.4 884.9,321.6 885.7,314.1 886.4,306 887.1,297.6 887.8,289.3 888.5,281.3 889.3,274 890,267.9 890.7,263.3 891.4,260.4 892.1,259.4 892.8,260.7 893.6,264.6 894.3,270.8 895,278.8 895.7,287.9 896.4,297.6 897.2,307.4 897.9,316.7 898.6,325.2 899.3,332.6 900,338.9 900.7,344 901.5,348.2 902.2,351.4 902.9,354 903.6,356 904.3,357.6 905.1,359 905.8,360.1 906.5,361 907.2,361.8 907.9,362.4 908.6,362.9 909.4,363.1 910.1,363.2 910.8,363.1 911.5,362.8 912.2,362.3 913,361.8 913.7,361.1 914.4,360.4 915.1,359.8 915.8,359.1 916.5,358.6 917.3,358.1 918,357.7 918.7,357.4 919.4,357.1 920.1,356.9 920.8,356.8 921.6,356.7 922.3,356.6" stroke="#e6b84c" stroke-width="2.0"/><path d="M959.6,356.5 960.3,356.4 961.1,354.9 961.8,349.4 962.5,344.8 963.2,344.9 963.9,345.4 964.6,346.1 965.4,347.1 966.1,348.2 966.8,349.4 967.5,350.6 968.2,351.7 969,352.7 969.7,353.6 970.4,354.3 971.1,354.9 971.8,355.4 972.5,355.7 973.3,356 974,356.2 974.7,356.3 975.4,356.4 976.1,356.4M1002.7,356.4 1003.4,356.2 1004.1,355.8 1004.9,354.9 1005.6,353.4 1006.3,351.3 1007,348.9 1007.7,347 1008.4,346.3 1009.2,346.6 1009.9,347.3 1010.6,348.4 1011.3,349.8 1012,351.2 1012.8,352.5 1013.5,353.6 1014.2,354.6 1014.9,355.2 1015.6,355.7 1016.3,356.1 1017.1,356.3 1017.8,356.4 1018.5,356.4" stroke="#e6b84c" stroke-width="2.0"/><path d="M854.1,356.6 854.8,356.7 855.5,356.8 856.2,356.9 856.9,357.1 857.7,357.3 858.4,357.6 859.1,357.9 859.8,358.4 860.5,358.9 861.3,359.4 862,359.9 862.7,360.5 863.4,361 864.1,361.5 864.8,361.8 865.6,362 866.3,362.1 867,362 867.7,361.7 868.4,361.3 869.2,360.7 869.9,360.1 870.6,359.3 871.3,358.5 872,357.5 872.7,356.5 873.5,355.2 874.2,353.7 874.9,351.9 875.6,349.8 876.3,347.1 877,343.9 877.8,340.1 878.5,335.6 879.2,330.6 879.9,325 880.6,319 881.4,312.8 882.1,306.6 882.8,300.7 883.5,295.3 884.2,290.8 884.9,287.3 885.7,285.2 886.4,284.5 887.1,285.2 887.8,287.3 888.5,290.8 889.3,295.3 890,300.7 890.7,306.6 891.4,312.8 892.1,319 892.8,325 893.6,330.6 894.3,335.6 895,340.1 895.7,343.9 896.4,347.1 897.2,349.8 897.9,351.9 898.6,353.7 899.3,355.2 900,356.5 900.7,357.5 901.5,358.5 902.2,359.3 902.9,360.1 903.6,360.7 904.3,361.3 905.1,361.7 905.8,362 906.5,362.1 907.2,362 907.9,361.8 908.6,361.5 909.4,361 910.1,360.5 910.8,359.9 911.5,359.4 912.2,358.9 913,358.4 913.7,357.9 914.4,357.6 915.1,357.3 915.8,357.1 916.5,356.9 917.3,356.8 918,356.7 918.7,356.6" stroke="#e6b84c" stroke-width="2.0"/><path d="M811,356.6 811.7,356.7 812.4,356.8 813.1,356.9 813.9,357.1 814.6,357.3 815.3,357.6 816,357.9 816.7,358.4 817.5,358.8 818.2,359.3 818.9,359.8 819.6,360.3 820.3,360.7 821,361.1 821.8,361.4 822.5,361.5 823.2,361.5 823.9,361.3 824.6,361 825.4,360.6 826.1,360.1 826.8,359.5 827.5,358.7 828.2,357.9 828.9,357 829.7,355.9 830.4,354.5 831.1,352.9 831.8,350.8 832.5,348.3 833.3,345.3 834,341.6 834.7,337.3 835.4,332.5 836.1,327.2 836.8,321.7 837.6,316.1 838.3,310.8 839,306.1 839.7,302.3 840.4,299.7 841.1,298.4 841.9,300.9 842.6,322.4 843.3,345.2 844,356.3 844.7,359.5 845.5,360.4 846.2,360.9 846.9,361.2 847.6,361.4 848.3,361.5 849,361.5 849.8,361.3 850.5,361 851.2,360.6 851.9,360.2 852.6,359.7 853.4,359.2 854.1,358.7 854.8,358.2 855.5,357.8 856.2,357.5 856.9,357.3 857.7,357.1 858.4,357 859.1,357 859.8,357 860.5,357.1 861.3,357.2 862,357.4 862.7,357.7 863.4,358.1 864.1,358.6 864.8,359 865.6,359.6 866.3,360.1 867,360.6 867.7,361 868.4,361.4 869.2,361.6 869.9,361.7 870.6,361.6 871.3,361.4 872,361.1 872.7,360.6 873.5,360 874.2,359.3 874.9,358.5 875.6,357.6 876.3,356.5 877,355.1 877.8,353.4 878.5,351.2 879.2,348.4 879.9,345.1 880.6,340.9 881.4,336.1 882.1,330.5 882.8,324.4 883.5,318.1 884.2,311.7 884.9,305.7 885.7,300.5 886.4,296.5 887.1,293.9 887.8,293.1 888.5,293.9 889.3,296.5 890,300.5 890.7,305.7 891.4,311.7 892.1,318.1 892.8,324.4 893.6,330.5 894.3,336.1 895,340.9 895.7,345.1 896.4,348.4 897.2,351.2 897.9,353.4 898.6,355.1 899.3,356.5 900,357.6 900.7,358.5 901.5,359.3 902.2,360 902.9,360.6 903.6,361.1 904.3,361.4 905.1,361.6 905.8,361.7 906.5,361.6 907.2,361.4 907.9,361 908.6,360.6 909.4,360.1 910.1,359.6 910.8,359 911.5,358.5 912.2,358.1 913,357.7 913.7,357.4 914.4,357.2 915.1,357 915.8,356.8 916.5,356.7 917.3,356.6 918,356.6" stroke="#d5e6f8" stroke-width="1.1" opacity="0.75"/><path d="M715 356.5H1074" stroke="#e6b84c" stroke-width="3"/><path d="M716 340.5H1075" stroke="#ea3641" stroke-width="1.15"/></g><text x="894.5" y="410.8" font-size="17.8" font-weight="bold" fill="#f6f6f6" text-anchor="middle">Temperature (°C)</text></svg>
<div class="ct" style="left:1088px;top:189px;width:414px;height:25px;line-height:24px;padding-left:4px">Tube2</div>
<svg class="abs" style="left:1483px;top:194px" width="14" height="14" viewBox="0 0 14 14"><rect x="0.5" y="0.5" width="13" height="13" fill="#262626" stroke="#4f8fd4"/><g fill="#4f8fd4"><path d="M2.4 2.4h3l-0.9 0.9 1.3 1.3-0.9 0.9-1.3-1.3-1.2 1.2z"/><path d="M2.4 2.4h3l-0.9 0.9 1.3 1.3-0.9 0.9-1.3-1.3-1.2 1.2z" transform="translate(14 0) scale(-1 1)"/><path d="M2.4 2.4h3l-0.9 0.9 1.3 1.3-0.9 0.9-1.3-1.3-1.2 1.2z" transform="translate(0 14) scale(1 -1)"/><path d="M2.4 2.4h3l-0.9 0.9 1.3 1.3-0.9 0.9-1.3-1.3-1.2 1.2z" transform="translate(14 14) scale(-1 -1)"/></g></svg>
<div class="cb" style="left:1088px;top:214px;width:414px;height:209px"></div>
<svg class="abs" style="left:1088px;top:214px" width="414" height="209" viewBox="1088 214 414 209"><path d="M1132 367.5H1491" stroke="#4b4b4b" stroke-width="1"/><path d="M1132 356.5H1491" stroke="#4b4b4b" stroke-width="1"/><path d="M1132 345.5H1491" stroke="#4b4b4b" stroke-width="1"/><path d="M1132 333.5H1491" stroke="#4b4b4b" stroke-width="1"/><path d="M1132 322.5H1491" stroke="#4b4b4b" stroke-width="1"/><path d="M1132 310.5H1491" stroke="#4b4b4b" stroke-width="1"/><path d="M1132 299.5H1491" stroke="#4b4b4b" stroke-width="1"/><path d="M1132 288.5H1491" stroke="#4b4b4b" stroke-width="1"/><path d="M1132 276.5H1491" stroke="#4b4b4b" stroke-width="1"/><path d="M1132 265.5H1491" stroke="#4b4b4b" stroke-width="1"/><path d="M1132 254.5H1491" stroke="#4b4b4b" stroke-width="1"/><path d="M1132 242.5H1491" stroke="#4b4b4b" stroke-width="1"/><path d="M1132 231.5H1491" stroke="#4b4b4b" stroke-width="1"/><path d="M1132 367.5H1137" stroke="#4b4b4b" stroke-width="1"/><text x="1126" y="371.6" font-size="11" fill="#f2f2f2" text-anchor="end">-1000</text><path d="M1132 345.5H1137" stroke="#4b4b4b" stroke-width="1"/><text x="1126" y="348.8" font-size="11" fill="#f2f2f2" text-anchor="end">1000</text><path d="M1132 322.5H1137" stroke="#4b4b4b" stroke-width="1"/><text x="1126" y="326.1" font-size="11" fill="#f2f2f2" text-anchor="end">3000</text><path d="M1132 299.5H1137" stroke="#4b4b4b" stroke-width="1"/><text x="1126" y="303.3" font-size="11" fill="#f2f2f2" text-anchor="end">5000</text><path d="M1132 276.5H1137" stroke="#4b4b4b" stroke-width="1"/><text x="1126" y="280.5" font-size="11" fill="#f2f2f2" text-anchor="end">7000</text><path d="M1132 254.5H1137" stroke="#4b4b4b" stroke-width="1"/><text x="1126" y="257.8" font-size="11" fill="#f2f2f2" text-anchor="end">9000</text><path d="M1132 231.5H1137" stroke="#4b4b4b" stroke-width="1"/><text x="1126" y="235.0" font-size="11" fill="#f2f2f2" text-anchor="end">11000</text><path d="M1135 367.5H1137" stroke="#4b4b4b" stroke-width="1"/><path d="M1135 365.5H1137" stroke="#4b4b4b" stroke-width="1"/><path d="M1135 363.5H1137" stroke="#4b4b4b" stroke-width="1"/><path d="M1135 361.5H1137" stroke="#4b4b4b" stroke-width="1"/><path d="M1135 358.5H1137" stroke="#4b4b4b" stroke-width="1"/><path d="M1135 356.5H1137" stroke="#4b4b4b" stroke-width="1"/><path d="M1135 354.5H1137" stroke="#4b4b4b" stroke-width="1"/><path d="M1135 351.5H1137" stroke="#4b4b4b" stroke-width="1"/><path d="M1135 349.5H1137" stroke="#4b4b4b" stroke-width="1"/><path d="M1135 347.5H1137" stroke="#4b4b4b" stroke-width="1"/><path d="M1135 345.5H1137" stroke="#4b4b4b" stroke-width="1"/><path d="M1135 342.5H1137" stroke="#4b4b4b" stroke-width="1"/><path d="M1135 340.5H1137" stroke="#4b4b4b" stroke-width="1"/><path d="M1135 338.5H1137" stroke="#4b4b4b" stroke-width="1"/><path d="M1135 336.5H1137" stroke="#4b4b4b" stroke-width="1"/><path d="M1135 333.5H1137" stroke="#4b4b4b" stroke-width="1"/><path d="M1135 331.5H1137" stroke="#4b4b4b" stroke-width="1"/><path d="M1135 329.5H1137" stroke="#4b4b4b" stroke-width="1"/><path d="M1135 326.5H1137" stroke="#4b4b4b" stroke-width="1"/><path d="M1135 324.5H1137" stroke="#4b4b4b" stroke-width="1"/><path d="M1135 322.5H1137" stroke="#4b4b4b" stroke-width="1"/><path d="M1135 320.5H1137" stroke="#4b4b4b" stroke-width="1"/><path d="M1135 317.5H1137" stroke="#4b4b4b" stroke-width="1"/><path d="M1135 315.5H1137" stroke="#4b4b4b" stroke-width="1"/><path d="M1135 313.5H1137" stroke="#4b4b4b" stroke-width="1"/><path d="M1135 310.5H1137" stroke="#4b4b4b" stroke-width="1"/><path d="M1135 308.5H1137" stroke="#4b4b4b" stroke-width="1"/><path d="M1135 306.5H1137" stroke="#4b4b4b" stroke-width="1"/><path d="M1135 304.5H1137" stroke="#4b4b4b" stroke-width="1"/><path d="M1135 301.5H1137" stroke="#4b4b4b" stroke-width="1"/><path d="M1135 299.5H1137" stroke="#4b4b4b" stroke-width="1"/><path d="M1135 297.5H1137" stroke="#4b4b4b" stroke-width="1"/><path d="M1135 295.5H1137" stroke="#4b4b4b" stroke-width="1"/><path d="M1135 292.5H1137" stroke="#4b4b4b" stroke-width="1"/><path d="M1135 290.5H1137" stroke="#4b4b4b" stroke-width="1"/><path d="M1135 288.5H1137" stroke="#4b4b4b" stroke-width="1"/><path d="M1135 285.5H1137" stroke="#4b4b4b" stroke-width="1"/><path d="M1135 283.5H1137" stroke="#4b4b4b" stroke-width="1"/><path d="M1135 281.5H1137" stroke="#4b4b4b" stroke-width="1"/><path d="M1135 279.5H1137" stroke="#4b4b4b" stroke-width="1"/><path d="M1135 276.5H1137" stroke="#4b4b4b" stroke-width="1"/><path d="M1135 274.5H1137" stroke="#4b4b4b" stroke-width="1"/><path d="M1135 272.5H1137" stroke="#4b4b4b" stroke-width="1"/><path d="M1135 269.5H1137" stroke="#4b4b4b" stroke-width="1"/><path d="M1135 267.5H1137" stroke="#4b4b4b" stroke-width="1"/><path d="M1135 265.5H1137" stroke="#4b4b4b" stroke-width="1"/><path d="M1135 263.5H1137" stroke="#4b4b4b" stroke-width="1"/><path d="M1135 260.5H1137" stroke="#4b4b4b" stroke-width="1"/><path d="M1135 258.5H1137" stroke="#4b4b4b" stroke-width="1"/><path d="M1135 256.5H1137" stroke="#4b4b4b" stroke-width="1"/><path d="M1135 254.5H1137" stroke="#4b4b4b" stroke-width="1"/><path d="M1135 251.5H1137" stroke="#4b4b4b" stroke-width="1"/><path d="M1135 249.5H1137" stroke="#4b4b4b" stroke-width="1"/><path d="M1135 247.5H1137" stroke="#4b4b4b" stroke-width="1"/><path d="M1135 244.5H1137" stroke="#4b4b4b" stroke-width="1"/><path d="M1135 242.5H1137" stroke="#4b4b4b" stroke-width="1"/><path d="M1135 240.5H1137" stroke="#4b4b4b" stroke-width="1"/><path d="M1135 238.5H1137" stroke="#4b4b4b" stroke-width="1"/><path d="M1135 235.5H1137" stroke="#4b4b4b" stroke-width="1"/><path d="M1135 233.5H1137" stroke="#4b4b4b" stroke-width="1"/><path d="M1135 231.5H1137" stroke="#4b4b4b" stroke-width="1"/><path d="M1135 229.5H1137" stroke="#4b4b4b" stroke-width="1"/><path d="M1135 226.5H1137" stroke="#4b4b4b" stroke-width="1"/><path d="M1135 224.5H1137" stroke="#4b4b4b" stroke-width="1"/><path d="M1137.5 224V373" stroke="#4b4b4b" stroke-width="1"/><text x="1136.7" y="387.5" font-size="11" fill="#f2f2f2" text-anchor="middle">70</text><path d="M1208.5 224V373" stroke="#4b4b4b" stroke-width="1"/><text x="1207.3" y="387.5" font-size="11" fill="#f2f2f2" text-anchor="middle">75</text><path d="M1278.5 224V373" stroke="#4b4b4b" stroke-width="1"/><text x="1277.9" y="387.5" font-size="11" fill="#f2f2f2" text-anchor="middle">80</text><path d="M1349.5 224V373" stroke="#4b4b4b" stroke-width="1"/><text x="1348.5" y="387.5" font-size="11" fill="#f2f2f2" text-anchor="middle">85</text><path d="M1419.5 224V373" stroke="#4b4b4b" stroke-width="1"/><text x="1419.1" y="387.5" font-size="11" fill="#f2f2f2" text-anchor="middle">90</text><path d="M1490.5 224V373" stroke="#4b4b4b" stroke-width="1"/><text x="1488.1" y="387.5" font-size="11" fill="#f2f2f2" text-anchor="middle">95</text><path d="M1137.5 368V370.5" stroke="#4b4b4b" stroke-width="1"/><path d="M1151.5 368V370.5" stroke="#4b4b4b" stroke-width="1"/><path d="M1165.5 368V370.5" stroke="#4b4b4b" stroke-width="1"/><path d="M1179.5 368V370.5" stroke="#4b4b4b" stroke-width="1"/><path d="M1193.5 368V370.5" stroke="#4b4b4b" stroke-width="1"/><path d="M1208.5 368V370.5" stroke="#4b4b4b" stroke-width="1"/><path d="M1222.5 368V370.5" stroke="#4b4b4b" stroke-width="1"/><path d="M1236.5 368V370.5" stroke="#4b4b4b" stroke-width="1"/><path d="M1250.5 368V370.5" stroke="#4b4b4b" stroke-width="1"/><path d="M1264.5 368V370.5" stroke="#4b4b4b" stroke-width="1"/><path d="M1278.5 368V370.5" stroke="#4b4b4b" stroke-width="1"/><path d="M1292.5 368V370.5" stroke="#4b4b4b" stroke-width="1"/><path d="M1306.5 368V370.5" stroke="#4b4b4b" stroke-width="1"/><path d="M1321.5 368V370.5" stroke="#4b4b4b" stroke-width="1"/><path d="M1335.5 368V370.5" stroke="#4b4b4b" stroke-width="1"/><path d="M1349.5 368V370.5" stroke="#4b4b4b" stroke-width="1"/><path d="M1363.5 368V370.5" stroke="#4b4b4b" stroke-width="1"/><path d="M1377.5 368V370.5" stroke="#4b4b4b" stroke-width="1"/><path d="M1391.5 368V370.5" stroke="#4b4b4b" stroke-width="1"/><path d="M1405.5 368V370.5" stroke="#4b4b4b" stroke-width="1"/><path d="M1419.5 368V370.5" stroke="#4b4b4b" stroke-width="1"/><path d="M1434.5 368V370.5" stroke="#4b4b4b" stroke-width="1"/><path d="M1448.5 368V370.5" stroke="#4b4b4b" stroke-width="1"/><path d="M1462.5 368V370.5" stroke="#4b4b4b" stroke-width="1"/><path d="M1476.5 368V370.5" stroke="#4b4b4b" stroke-width="1"/><path d="M1490.5 368V370.5" stroke="#4b4b4b" stroke-width="1"/><path d="M1137 224.5H1491M1137 368.5H1491" stroke="#4b4b4b" stroke-width="1"/><clipPath id="cpTube2"><rect x="1138" y="224" width="353" height="144"/></clipPath><g clip-path="url(#cpTube2)" fill="none" stroke-linejoin="round"><path d="M1207.4,356.4 1208.1,356.3 1208.8,356.2 1209.5,355.8 1210.2,355.2 1210.9,354.3 1211.6,352.9 1212.3,351 1213,348.5 1213.7,345.6 1214.5,342.6 1215.2,339.9 1215.9,337.8 1216.6,336.7 1217.3,337.7 1218,343.1 1218.7,349.5 1219.4,353.8 1220.1,355.7 1220.8,356.3 1221.5,356.5M1260.3,356.6 1261,356.6 1261.8,356.7 1262.5,356.7 1263.2,356.8 1263.9,357 1264.6,357.1 1265.3,357.3 1266,357.6 1266.7,357.9 1267.4,358.2 1268.1,358.5 1268.8,358.8 1269.5,359.1 1270.2,359.3 1270.9,359.5 1271.6,359.6 1272.3,359.7 1273.1,359.6 1273.8,359.4 1274.5,359.2 1275.2,358.9 1275.9,358.5 1276.6,358.1 1277.3,357.6 1278,357 1278.7,356.4 1279.4,355.6 1280.1,354.6 1280.8,353.3 1281.5,351.8 1282.2,349.9 1282.9,347.6 1283.6,345 1284.3,342.1 1285.1,338.9 1285.8,335.7 1286.5,332.5 1287.2,329.7 1287.9,327.4 1288.6,325.7 1289.3,325 1290,326.3 1290.7,338.1 1291.4,350.6 1292.1,356.7 1292.8,358.4 1293.5,359 1294.2,359.2 1294.9,359.5 1295.6,359.6 1296.3,359.7 1297.1,359.6 1297.8,359.5 1298.5,359.3 1299.2,359.1 1299.9,358.8 1300.6,358.5 1301.3,358.2 1302,357.9 1302.7,357.6 1303.4,357.3 1304.1,357.1 1304.8,357 1305.5,356.8 1306.2,356.7 1306.9,356.7 1307.6,356.6 1308.4,356.6" stroke="#d5e6f8" stroke-width="1.6"/><path d="M1203.9,356.6 1204.6,356.6 1205.3,356.7 1206,356.7 1206.7,356.9 1207.4,357 1208.1,357.2 1208.8,357.5 1209.5,357.8 1210.2,358.2 1210.9,358.6 1211.6,359.1 1212.3,359.6 1213,360.1 1213.7,360.5 1214.5,360.9 1215.2,361.2 1215.9,361.4 1216.6,361.4 1217.3,361.3 1218,361 1218.7,360.7 1219.4,360.1 1220.1,359.2 1220.8,357.8 1221.5,355.2 1222.2,350.8 1222.9,343.5 1223.6,332.2 1224.3,316.4 1225,296.7 1225.8,275.2 1226.5,255.4 1227.2,241.2 1227.9,236.1 1228.6,241.2 1229.3,255.4 1230,275.2 1230.7,296.7 1231.4,316.4 1232.1,332.2 1232.8,343.5 1233.5,350.8 1234.2,355.2 1234.9,357.8 1235.6,359.2 1236.3,360.1 1237,360.7 1237.8,361 1238.5,361.3 1239.2,361.4 1239.9,361.4 1240.6,361.2 1241.3,360.9 1242,360.5 1242.7,360.1 1243.4,359.6 1244.1,359.1 1244.8,358.6 1245.5,358.2 1246.2,357.8 1246.9,357.5 1247.6,357.2 1248.3,357 1249,356.9 1249.8,356.7 1250.5,356.7 1251.2,356.6 1251.9,356.6M1261,356.6 1261.8,356.6 1262.5,356.7 1263.2,356.8 1263.9,357 1264.6,357.1 1265.3,357.4 1266,357.7 1266.7,358 1267.4,358.4 1268.1,358.8 1268.8,359.2 1269.5,359.6 1270.2,360 1270.9,360.3 1271.6,360.5 1272.3,360.6 1273.1,360.6 1273.8,360.5 1274.5,360.3 1275.2,360 1275.9,359.5 1276.6,359 1277.3,358.4 1278,357.6 1278.7,356.8 1279.4,355.7 1280.1,354.4 1280.8,352.7 1281.5,350.5 1282.2,347.9 1282.9,344.6 1283.6,340.7 1284.3,336.1 1285.1,331.1 1285.8,325.7 1286.5,320.2 1287.2,315 1287.9,310.3 1288.6,306.5 1289.3,304 1290,302.8 1290.7,306.7 1291.4,324.8 1292.1,343.7 1292.8,354.4 1293.5,358.3 1294.2,359.5 1294.9,359.9 1295.6,360.3 1296.3,360.5 1297.1,360.6 1297.8,360.7 1298.5,360.6 1299.2,360.4 1299.9,360.1 1300.6,359.7 1301.3,359.3 1302,358.9 1302.7,358.5 1303.4,358.1 1304.1,357.7 1304.8,357.4 1305.5,357.2 1306.2,357 1306.9,356.9 1307.6,356.7 1308.4,356.7 1309.1,356.6 1309.8,356.6M1345.1,356.6 1345.8,356.6 1346.5,356.7 1347.2,356.7 1347.9,356.9 1348.6,357 1349.3,357.2 1350,357.5 1350.7,357.8 1351.4,358.2 1352.1,358.6 1352.8,359.1 1353.5,359.5 1354.2,360 1354.9,360.4 1355.7,360.8 1356.4,361 1357.1,361.1 1357.8,361.2 1358.5,361 1359.2,360.8 1359.9,360.4 1360.6,359.9 1361.3,359.3 1362,358.5 1362.7,357.7 1363.4,356.7 1364.1,355.4 1364.8,353.8 1365.5,351.8 1366.2,349.3 1367,346 1367.7,342.1 1368.4,337.3 1369.1,331.9 1369.8,325.7 1370.5,319.2 1371.2,312.6 1371.9,306.2 1372.6,300.5 1373.3,295.9 1374,292.7 1374.7,291.3 1375.4,294.3 1376.1,309.7 1376.8,329.7 1377.5,345.4 1378.2,354.2 1379,358 1379.7,359.5 1380.4,360.2 1381.1,360.6 1381.8,360.9 1382.5,361.1 1383.2,361.2 1383.9,361.1 1384.6,360.9 1385.3,360.6 1386,360.2 1386.7,359.8 1387.4,359.3 1388.1,358.9 1388.8,358.4 1389.5,358 1390.2,357.7 1391,357.4 1391.7,357.1 1392.4,356.9 1393.1,356.8 1393.8,356.7 1394.5,356.6 1395.2,356.6" stroke="#e6b84c" stroke-width="2.0"/><path d="M1203.2,356.6 1203.9,356.6 1204.6,356.7 1205.3,356.8 1206,356.9 1206.7,357.1 1207.4,357.4 1208.1,357.7 1208.8,358 1209.5,358.4 1210.2,358.9 1210.9,359.4 1211.6,359.9 1212.3,360.3 1213,360.7 1213.7,361.1 1214.5,361.3 1215.2,361.4 1215.9,361.3 1216.6,361.2 1217.3,360.8 1218,360.3 1218.7,359.7 1219.4,358.7 1220.1,357.3 1220.8,355.1 1221.5,351.7 1222.2,346.5 1222.9,339 1223.6,328.7 1224.3,315.8 1225,300.9 1225.8,285.4 1226.5,271.1 1227.2,260.3 1227.9,254.7 1228.6,255.3 1229.3,262.1 1230,273.7 1230.7,288.4 1231.4,304 1232.1,318.6 1232.8,331 1233.5,340.7 1234.2,347.7 1234.9,352.5 1235.6,355.6 1236.3,357.6 1237,358.9 1237.8,359.8 1238.5,360.5 1239.2,360.9 1239.9,361.2 1240.6,361.4 1241.3,361.4 1242,361.3 1242.7,361 1243.4,360.7 1244.1,360.2 1244.8,359.8 1245.5,359.3 1246.2,358.8 1246.9,358.3 1247.6,357.9 1248.3,357.6 1249,357.3 1249.8,357.1 1250.5,356.9 1251.2,356.8 1251.9,356.7 1252.6,356.6 1253.3,356.6M1275.2,356.6 1275.9,356.6 1276.6,356.7 1277.3,356.8 1278,356.9 1278.7,357 1279.4,357.2 1280.1,357.4 1280.8,357.7 1281.5,358 1282.2,358.3 1282.9,358.6 1283.6,359 1284.3,359.2 1285.1,359.5 1285.8,359.6 1286.5,359.7 1287.2,359.7 1287.9,359.6 1288.6,359.5 1289.3,359.2 1290,358.9 1290.7,358.3 1291.4,357.3 1292.1,355.3 1292.8,351.3 1293.5,344.9 1294.2,336.5 1294.9,328.2 1295.6,323.2 1296.3,322.9 1297.1,324.2 1297.8,326.8 1298.5,330.3 1299.2,334.2 1299.9,338.4 1300.6,342.4 1301.3,346 1302,349 1302.7,351.6 1303.4,353.5 1304.1,355 1304.8,356.2 1305.5,357 1306.2,357.7 1306.9,358.2 1307.6,358.7 1308.4,359.1 1309.1,359.4 1309.8,359.6 1310.5,359.7 1311.2,359.7 1311.9,359.7 1312.6,359.6 1313.3,359.3 1314,359.1 1314.7,358.8 1315.4,358.4 1316.1,358.1 1316.8,357.8 1317.5,357.5 1318.2,357.3 1318.9,357.1 1319.6,356.9 1320.4,356.8 1321.1,356.7 1321.8,356.6 1322.5,356.6M1362,356.6 1362.7,356.6 1363.4,356.7 1364.1,356.8 1364.8,356.9 1365.5,357.1 1366.2,357.3 1367,357.6 1367.7,357.8 1368.4,358.2 1369.1,358.5 1369.8,358.8 1370.5,359.1 1371.2,359.4 1371.9,359.6 1372.6,359.8 1373.3,359.8 1374,359.8 1374.7,359.7 1375.4,359.5 1376.1,359.2 1376.8,358.8 1377.5,357.7 1378.2,354.4 1379,346.1 1379.7,332.8 1380.4,322.1 1381.1,320.9 1381.8,321.8 1382.5,323.7 1383.2,326.3 1383.9,329.5 1384.6,333.1 1385.3,336.7 1386,340.3 1386.7,343.6 1387.4,346.5 1388.1,349.1 1388.8,351.2 1389.5,352.9 1390.2,354.3 1391,355.4 1391.7,356.3 1392.4,357 1393.1,357.6 1393.8,358.2 1394.5,358.6 1395.2,359 1395.9,359.3 1396.6,359.6 1397.3,359.8 1398,359.8 1398.7,359.8 1399.4,359.7 1400.1,359.5 1400.8,359.2 1401.5,358.9 1402.2,358.6 1403,358.3 1403.7,357.9 1404.4,357.6 1405.1,357.4 1405.8,357.2 1406.5,357 1407.2,356.8 1407.9,356.7 1408.6,356.7 1409.3,356.6 1410,356.6" stroke="#e6b84c" stroke-width="2.0"/><path d="M1191.2,356.6 1191.9,356.6 1192.6,356.7 1193.3,356.8 1194,356.9 1194.7,357.1 1195.4,357.3 1196.1,357.5 1196.8,357.9 1197.5,358.2 1198.2,358.6 1198.9,359.1 1199.6,359.5 1200.3,360 1201,360.3 1201.7,360.6 1202.5,360.8 1203.2,360.9 1203.9,360.9 1204.6,360.7 1205.3,360.4 1206,360 1206.7,359.5 1207.4,358.9 1208.1,358.2 1208.8,357.5 1209.5,356.6 1210.2,355.5 1210.9,354.2 1211.6,352.6 1212.3,350.6 1213,348.1 1213.7,345.2 1214.5,341.6 1215.2,337.4 1215.9,332.7 1216.6,327.6 1217.3,322.1 1218,316.6 1218.7,311.2 1219.4,306.3 1220.1,302.1 1220.8,298.9 1221.5,296.9 1222.2,296.2 1222.9,296.6 1223.6,298 1224.3,300.3 1225,303.3 1225.8,306.9 1226.5,311 1227.2,315.4 1227.9,319.9 1228.6,324.5 1229.3,328.9 1230,333.1 1230.7,336.9 1231.4,340.4 1232.1,343.5 1232.8,346.2 1233.5,348.5 1234.2,350.4 1234.9,352.1 1235.6,353.4 1236.3,354.6 1237,355.6 1237.8,356.4 1238.5,357.2 1239.2,357.9 1239.9,358.5 1240.6,359.1 1241.3,359.7 1242,360.1 1242.7,360.5 1243.4,360.8 1244.1,360.9 1244.8,360.9 1245.5,360.8 1246.2,360.5 1246.9,360.2 1247.6,359.8 1248.3,359.4 1249,358.9 1249.8,358.5 1250.5,358.1 1251.2,357.7 1251.9,357.4 1252.6,357.2 1253.3,357 1254,356.8 1254.7,356.7 1255.4,356.7 1256.1,356.6 1256.8,356.6M1345.1,356.6 1345.8,356.6 1346.5,356.7 1347.2,356.7 1347.9,356.9 1348.6,357 1349.3,357.2 1350,357.4 1350.7,357.7 1351.4,358.1 1352.1,358.5 1352.8,358.9 1353.5,359.3 1354.2,359.6 1354.9,360 1355.7,360.2 1356.4,360.4 1357.1,360.5 1357.8,360.5 1358.5,360.3 1359.2,360 1359.9,359.7 1360.6,359.2 1361.3,358.7 1362,358 1362.7,357.3 1363.4,356.4 1364.1,355.3 1364.8,353.9 1365.5,352.2 1366.2,350 1367,347.2 1367.7,343.9 1368.4,340 1369.1,335.5 1369.8,330.6 1370.5,325.5 1371.2,320.4 1371.9,315.6 1372.6,311.4 1373.3,308.2 1374,306.3 1374.7,305.7 1375.4,310.1 1376.1,321.1 1376.8,334.1 1377.5,345.1 1378.2,352.3 1379,356.3 1379.7,358.2 1380.4,359.2 1381.1,359.7 1381.8,360.1 1382.5,360.3 1383.2,360.5 1383.9,360.5 1384.6,360.4 1385.3,360.3 1386,360 1386.7,359.7 1387.4,359.3 1388.1,358.9 1388.8,358.5 1389.5,358.1 1390.2,357.8 1391,357.5 1391.7,357.2 1392.4,357 1393.1,356.9 1393.8,356.8 1394.5,356.7 1395.2,356.6 1395.9,356.6" stroke="#e6b84c" stroke-width="2.0"/><path d="M1191.2,356.6 1191.9,356.6 1192.6,356.7 1193.3,356.8 1194,356.9 1194.7,357 1195.4,357.2 1196.1,357.5 1196.8,357.8 1197.5,358.1 1198.2,358.5 1198.9,358.9 1199.6,359.4 1200.3,359.8 1201,360.1 1201.7,360.4 1202.5,360.6 1203.2,360.7 1203.9,360.6 1204.6,360.4 1205.3,360.2 1206,359.8 1206.7,359.3 1207.4,358.8 1208.1,358.1 1208.8,357.4 1209.5,356.6 1210.2,355.6 1210.9,354.4 1211.6,353 1212.3,351.2 1213,348.9 1213.7,346.2 1214.5,343 1215.2,339.2 1215.9,335 1216.6,330.3 1217.3,325.4 1218,320.4 1218.7,315.5 1219.4,311 1220.1,307.2 1220.8,304.3 1221.5,302.5 1222.2,301.9 1222.9,302.3 1223.6,303.5 1224.3,305.6 1225,308.3 1225.8,311.6 1226.5,315.3 1227.2,319.2 1227.9,323.4 1228.6,327.5 1229.3,331.5 1230,335.3 1230.7,338.8 1231.4,341.9 1232.1,344.7 1232.8,347.2 1233.5,349.3 1234.2,351 1234.9,352.5 1235.6,353.7 1236.3,354.8 1237,355.7 1237.8,356.5 1238.5,357.2 1239.2,357.8 1239.9,358.4 1240.6,359 1241.3,359.5 1242,359.9 1242.7,360.3 1243.4,360.5 1244.1,360.6 1244.8,360.6 1245.5,360.5 1246.2,360.3 1246.9,360 1247.6,359.6 1248.3,359.2 1249,358.8 1249.8,358.4 1250.5,358 1251.2,357.7 1251.9,357.4 1252.6,357.1 1253.3,357 1254,356.8 1254.7,356.7 1255.4,356.6 1256.1,356.6M1361.3,356.6 1362,356.6 1362.7,356.7 1363.4,356.7 1364.1,356.8 1364.8,357 1365.5,357.1 1366.2,357.3 1367,357.6 1367.7,357.8 1368.4,358.1 1369.1,358.4 1369.8,358.7 1370.5,359 1371.2,359.2 1371.9,359.3 1372.6,359.4 1373.3,359.4 1374,359.3 1374.7,359.1 1375.4,358.9 1376.1,358.6 1376.8,358.1 1377.5,356.9 1378.2,354.3 1379,349 1379.7,341.4 1380.4,334 1381.1,330.8 1381.8,331 1382.5,332 1383.2,333.5 1383.9,335.6 1384.6,338.1 1385.3,340.7 1386,343.3 1386.7,345.8 1387.4,348.1 1388.1,350.1 1388.8,351.8 1389.5,353.3 1390.2,354.4 1391,355.4 1391.7,356.1 1392.4,356.7 1393.1,357.3 1393.8,357.7 1394.5,358.1 1395.2,358.5 1395.9,358.8 1396.6,359.1 1397.3,359.2 1398,359.4 1398.7,359.4 1399.4,359.3 1400.1,359.2 1400.8,359 1401.5,358.8 1402.2,358.5 1403,358.2 1403.7,357.9 1404.4,357.6 1405.1,357.4 1405.8,357.2 1406.5,357 1407.2,356.9 1407.9,356.8 1408.6,356.7 1409.3,356.6 1410,356.6" stroke="#e6b84c" stroke-width="2.0"/><path d="M1191.2,356.6 1191.9,356.6 1192.6,356.6 1193.3,356.7 1194,356.8 1194.7,357 1195.4,357.1 1196.1,357.4 1196.8,357.6 1197.5,357.9 1198.2,358.3 1198.9,358.7 1199.6,359 1200.3,359.4 1201,359.7 1201.7,360 1202.5,360.1 1203.2,360.2 1203.9,360.2 1204.6,360 1205.3,359.8 1206,359.4 1206.7,359 1207.4,358.5 1208.1,358 1208.8,357.4 1209.5,356.7 1210.2,355.9 1210.9,354.9 1211.6,353.7 1212.3,352.2 1213,350.4 1213.7,348.2 1214.5,345.5 1215.2,342.5 1215.9,339 1216.6,335.2 1217.3,331.2 1218,327.1 1218.7,323.2 1219.4,319.6 1220.1,316.5 1220.8,314.1 1221.5,312.6 1222.2,312.1 1222.9,312.5 1223.6,313.5 1224.3,315.1 1225,317.3 1225.8,320 1226.5,323 1227.2,326.2 1227.9,329.6 1228.6,332.9 1229.3,336.2 1230,339.3 1230.7,342.1 1231.4,344.7 1232.1,347 1232.8,348.9 1233.5,350.6 1234.2,352.1 1234.9,353.3 1235.6,354.3 1236.3,355.2 1237,355.9 1237.8,356.6 1238.5,357.2 1239.2,357.7 1239.9,358.3 1240.6,358.7 1241.3,359.2 1242,359.6 1242.7,359.9 1243.4,360.1 1244.1,360.2 1244.8,360.2 1245.5,360.1 1246.2,359.9 1246.9,359.6 1247.6,359.3 1248.3,358.9 1249,358.5 1249.8,358.2 1250.5,357.8 1251.2,357.5 1251.9,357.3 1252.6,357.1 1253.3,356.9 1254,356.8 1254.7,356.7 1255.4,356.6 1256.1,356.6M1345.1,356.6 1345.8,356.6 1346.5,356.6 1347.2,356.7 1347.9,356.8 1348.6,356.9 1349.3,357.1 1350,357.3 1350.7,357.6 1351.4,357.9 1352.1,358.2 1352.8,358.6 1353.5,358.9 1354.2,359.2 1354.9,359.5 1355.7,359.8 1356.4,359.9 1357.1,360 1357.8,360 1358.5,359.8 1359.2,359.6 1359.9,359.3 1360.6,358.9 1361.3,358.4 1362,357.9 1362.7,357.3 1363.4,356.6 1364.1,355.7 1364.8,354.6 1365.5,353.2 1366.2,351.5 1367,349.3 1367.7,346.7 1368.4,343.7 1369.1,340.2 1369.8,336.4 1370.5,332.4 1371.2,328.4 1371.9,324.6 1372.6,321.4 1373.3,318.9 1374,317.3 1374.7,316.8 1375.4,319.1 1376.1,324.9 1376.8,332.8 1377.5,340.8 1378.2,347.5 1379,352.3 1379.7,355.4 1380.4,357.2 1381.1,358.2 1381.8,358.9 1382.5,359.3 1383.2,359.6 1383.9,359.8 1384.6,360 1385.3,360 1386,359.9 1386.7,359.8 1387.4,359.6 1388.1,359.3 1388.8,358.9 1389.5,358.6 1390.2,358.2 1391,357.9 1391.7,357.6 1392.4,357.3 1393.1,357.1 1393.8,357 1394.5,356.8 1395.2,356.7 1395.9,356.6 1396.6,356.6 1397.3,356.6" stroke="#e6b84c" stroke-width="2.0"/><path d="M1190.5,356.6 1191.2,356.6 1191.9,356.7 1192.6,356.7 1193.3,356.8 1194,357 1194.7,357.2 1195.4,357.4 1196.1,357.7 1196.8,358 1197.5,358.3 1198.2,358.7 1198.9,359 1199.6,359.3 1200.3,359.6 1201,359.8 1201.7,360 1202.5,360 1203.2,359.9 1203.9,359.8 1204.6,359.5 1205.3,359.2 1206,358.8 1206.7,358.3 1207.4,357.8 1208.1,357.2 1208.8,356.6 1209.5,355.9 1210.2,355 1210.9,354 1211.6,352.8 1212.3,351.3 1213,349.5 1213.7,347.4 1214.5,345 1215.2,342.2 1215.9,339.1 1216.6,335.8 1217.3,332.3 1218,328.9 1218.7,325.6 1219.4,322.7 1220.1,320.2 1220.8,318.3 1221.5,317.1 1222.2,316.7 1222.9,316.9 1223.6,317.8 1224.3,319.1 1225,320.9 1225.8,323.1 1226.5,325.6 1227.2,328.3 1227.9,331.2 1228.6,334.1 1229.3,336.9 1230,339.6 1230.7,342.1 1231.4,344.5 1232.1,346.6 1232.8,348.5 1233.5,350.1 1234.2,351.5 1234.9,352.7 1235.6,353.7 1236.3,354.5 1237,355.3 1237.8,355.9 1238.5,356.5 1239.2,357 1239.9,357.6 1240.6,358 1241.3,358.5 1242,358.9 1242.7,359.3 1243.4,359.6 1244.1,359.8 1244.8,359.9 1245.5,360 1246.2,359.9 1246.9,359.7 1247.6,359.5 1248.3,359.2 1249,358.9 1249.8,358.5 1250.5,358.2 1251.2,357.9 1251.9,357.6 1252.6,357.3 1253.3,357.1 1254,356.9 1254.7,356.8 1255.4,356.7 1256.1,356.6 1256.8,356.6M1376.1,356.5 1376.8,356.3 1377.5,355.7 1378.2,354.2 1379,351 1379.7,346.1 1380.4,341.4 1381.1,339.4 1381.8,339.7 1382.5,340.3 1383.2,341.4 1383.9,342.8 1384.6,344.4 1385.3,346.1 1386,347.9 1386.7,349.5 1387.4,351 1388.1,352.2 1388.8,353.3 1389.5,354.2 1390.2,354.9 1391,355.4 1391.7,355.7 1392.4,356 1393.1,356.2 1393.8,356.3 1394.5,356.4 1395.2,356.4" stroke="#e6b84c" stroke-width="2.0"/><path d="M1206.7,356.5 1207.4,356.4 1208.1,356.3 1208.8,356.2 1209.5,355.9 1210.2,355.5 1210.9,354.9 1211.6,354.1 1212.3,353.1 1213,351.9 1213.7,350.6 1214.5,349.3 1215.2,348.2 1215.9,347.3 1216.6,346.9 1217.3,347.1 1218,348.8 1218.7,351.1 1219.4,353.4 1220.1,355 1220.8,355.9 1221.5,356.3 1222.2,356.4M1261,356.4 1261.8,356.4 1262.5,356.4 1263.2,356.3 1263.9,356.2 1264.6,356.1 1265.3,356 1266,355.8 1266.7,355.5 1267.4,355.3 1268.1,354.9 1268.8,354.5 1269.5,354.1 1270.2,353.5 1270.9,353 1271.6,352.3 1272.3,351.7 1273.1,351 1273.8,350.3 1274.5,349.6 1275.2,349 1275.9,348.5 1276.6,348 1277.3,347.7 1278,347.5 1278.7,347.4 1279.4,347.5 1280.1,347.7 1280.8,348 1281.5,348.5 1282.2,349 1282.9,349.6 1283.6,350.3 1284.3,351 1285.1,351.7 1285.8,352.3 1286.5,353 1287.2,353.5 1287.9,354.1 1288.6,354.5 1289.3,354.9 1290,355.3 1290.7,355.5 1291.4,355.8 1292.1,356 1292.8,356.1 1293.5,356.2 1294.2,356.3 1294.9,356.4 1295.6,356.4 1296.3,356.4M1317.5,356.4 1318.2,356.4 1318.9,356.3 1319.6,356.3 1320.4,356.2 1321.1,356 1321.8,355.8 1322.5,355.6 1323.2,355.3 1323.9,355 1324.6,354.5 1325.3,353.9 1326,353.3 1326.7,352.5 1327.4,351.7 1328.1,350.8 1328.8,349.7 1329.5,348.6 1330.2,347.5 1330.9,346.4 1331.7,345.3 1332.4,344.3 1333.1,343.4 1333.8,342.7 1334.5,342.2 1335.2,341.8 1335.9,341.7 1336.6,341.8 1337.3,342.2 1338,342.7 1338.7,343.4 1339.4,344.3 1340.1,345.3 1340.8,346.4 1341.5,347.5 1342.2,348.6 1342.9,349.7 1343.7,350.8 1344.4,351.7 1345.1,352.5 1345.8,353.3 1346.5,353.9 1347.2,354.5 1347.9,355 1348.6,355.3 1349.3,355.6 1350,355.8 1350.7,356 1351.4,356.2 1352.1,356.3 1352.8,356.3 1353.5,356.4 1354.2,356.4M1419.9,356.5 1420.6,356.4 1421.3,356.2 1422,355.7 1422.7,354.8 1423.4,353.5 1424.1,351.9 1424.8,350.4 1425.5,349.5 1426.3,349.5 1427,349.9 1427.7,350.6 1428.4,351.5 1429.1,352.4 1429.8,353.4 1430.5,354.2 1431.2,354.9 1431.9,355.5 1432.6,355.8 1433.3,356.1 1434,356.3 1434.7,356.4 1435.4,356.4" stroke="#e6b84c" stroke-width="2.0"/><path d="M1203.2,356.6 1203.9,356.6 1204.6,356.7 1205.3,356.8 1206,356.9 1206.7,357 1207.4,357.2 1208.1,357.5 1208.8,357.8 1209.5,358.2 1210.2,358.7 1210.9,359.2 1211.6,359.7 1212.3,360.4 1213,361 1213.7,361.6 1214.5,362.2 1215.2,362.8 1215.9,363.2 1216.6,363.6 1217.3,363.8 1218,363.9 1218.7,363.8 1219.4,363.6 1220.1,363.2 1220.8,362.8 1221.5,362.2 1222.2,361.6 1222.9,361 1223.6,360.4 1224.3,359.7 1225,359.2 1225.8,358.7 1226.5,358.2 1227.2,357.9 1227.9,357.6 1228.6,357.4 1229.3,357.3 1230,357.2 1230.7,357.3 1231.4,357.4 1232.1,357.6 1232.8,358 1233.5,358.4 1234.2,358.9 1234.9,359.6 1235.6,360.3 1236.3,361 1237,361.7 1237.8,362.4 1238.5,363 1239.2,363.5 1239.9,363.8 1240.6,363.9 1241.3,363.8 1242,363.5 1242.7,363 1243.4,362.4 1244.1,361.7 1244.8,361 1245.5,360.2 1246.2,359.5 1246.9,358.9 1247.6,358.3 1248.3,357.9 1249,357.5 1249.8,357.2 1250.5,357 1251.2,356.8 1251.9,356.7 1252.6,356.6 1253.3,356.6M1318.2,356.4 1318.9,356.4 1319.6,356.4 1320.4,356.3 1321.1,356.2 1321.8,356.1 1322.5,356 1323.2,355.8 1323.9,355.6 1324.6,355.3 1325.3,355 1326,354.7 1326.7,354.2 1327.4,353.7 1328.1,353.2 1328.8,352.6 1329.5,352 1330.2,351.3 1330.9,350.7 1331.7,350.1 1332.4,349.5 1333.1,349 1333.8,348.5 1334.5,348.2 1335.2,348 1335.9,348 1336.6,348 1337.3,348.2 1338,348.5 1338.7,349 1339.4,349.5 1340.1,350.1 1340.8,350.7 1341.5,351.3 1342.2,352 1342.9,352.6 1343.7,353.2 1344.4,353.7 1345.1,354.2 1345.8,354.7 1346.5,355 1347.2,355.3 1347.9,355.6 1348.6,355.8 1349.3,356 1350,356.1 1350.7,356.2 1351.4,356.3 1352.1,356.4 1352.8,356.4 1353.5,356.4" stroke="#e6b84c" stroke-width="2.0"/><path d="M1317.5,356.4 1318.2,356.4 1318.9,356.3 1319.6,356.3 1320.4,356.2 1321.1,356.1 1321.8,356 1322.5,355.9 1323.2,355.7 1323.9,355.5 1324.6,355.3 1325.3,355.1 1326,354.8 1326.7,354.5 1327.4,354.1 1328.1,353.7 1328.8,353 1329.5,351.9 1330.2,350.6 1330.9,349.3 1331.7,348.5 1332.4,348.6 1333.1,349.3 1333.8,350 1334.5,350.5 1335.2,350.7 1335.9,350.8 1336.6,350.8 1337.3,350.9 1338,351.1 1338.7,351.3 1339.4,351.6 1340.1,351.9 1340.8,352.3 1341.5,352.7 1342.2,353 1342.9,353.4 1343.7,353.8 1344.4,354.2 1345.1,354.5 1345.8,354.8 1346.5,355.1 1347.2,355.3 1347.9,355.5 1348.6,355.7 1349.3,355.9 1350,356 1350.7,356.1 1351.4,356.2 1352.1,356.3 1352.8,356.3 1353.5,356.4 1354.2,356.4" stroke="#e6b84c" stroke-width="2.0"/><path d="M1207.4,356.4 1208.1,356.3 1208.8,356.2 1209.5,355.8 1210.2,355.2 1210.9,354.3 1211.6,352.9 1212.3,351 1213,348.5 1213.7,345.6 1214.5,342.6 1215.2,339.9 1215.9,337.8 1216.6,336.7 1217.3,337.7 1218,343.1 1218.7,349.5 1219.4,353.8 1220.1,355.7 1220.8,356.3 1221.5,356.5M1260.3,356.6 1261,356.6 1261.8,356.7 1262.5,356.7 1263.2,356.8 1263.9,357 1264.6,357.1 1265.3,357.3 1266,357.6 1266.7,357.9 1267.4,358.2 1268.1,358.5 1268.8,358.8 1269.5,359.1 1270.2,359.3 1270.9,359.5 1271.6,359.6 1272.3,359.7 1273.1,359.6 1273.8,359.4 1274.5,359.2 1275.2,358.9 1275.9,358.5 1276.6,358.1 1277.3,357.6 1278,357 1278.7,356.4 1279.4,355.6 1280.1,354.6 1280.8,353.3 1281.5,351.8 1282.2,349.9 1282.9,347.6 1283.6,345 1284.3,342.1 1285.1,338.9 1285.8,335.7 1286.5,332.5 1287.2,329.7 1287.9,327.4 1288.6,325.7 1289.3,325 1290,326.3 1290.7,338.1 1291.4,350.6 1292.1,356.7 1292.8,358.4 1293.5,359 1294.2,359.2 1294.9,359.5 1295.6,359.6 1296.3,359.7 1297.1,359.6 1297.8,359.5 1298.5,359.3 1299.2,359.1 1299.9,358.8 1300.6,358.5 1301.3,358.2 1302,357.9 1302.7,357.6 1303.4,357.3 1304.1,357.1 1304.8,357 1305.5,356.8 1306.2,356.7 1306.9,356.7 1307.6,356.6 1308.4,356.6" stroke="#d5e6f8" stroke-width="1.1" opacity="0.75"/><path d="M1137 356.5H1490" stroke="#e6b84c" stroke-width="3"/><path d="M1138 345.5H1491" stroke="#ea3641" stroke-width="1.15"/></g><text x="1313.5" y="410.8" font-size="17.8" font-weight="bold" fill="#f6f6f6" text-anchor="middle">Temperature (°C)</text></svg>
<div class="ct" style="left:1504px;top:189px;width:414px;height:25px;line-height:24px;padding-left:4px">Tube3</div>
<svg class="abs" style="left:1899px;top:194px" width="14" height="14" viewBox="0 0 14 14"><rect x="0.5" y="0.5" width="13" height="13" fill="#262626" stroke="#4f8fd4"/><g fill="#4f8fd4"><path d="M2.4 2.4h3l-0.9 0.9 1.3 1.3-0.9 0.9-1.3-1.3-1.2 1.2z"/><path d="M2.4 2.4h3l-0.9 0.9 1.3 1.3-0.9 0.9-1.3-1.3-1.2 1.2z" transform="translate(14 0) scale(-1 1)"/><path d="M2.4 2.4h3l-0.9 0.9 1.3 1.3-0.9 0.9-1.3-1.3-1.2 1.2z" transform="translate(0 14) scale(1 -1)"/><path d="M2.4 2.4h3l-0.9 0.9 1.3 1.3-0.9 0.9-1.3-1.3-1.2 1.2z" transform="translate(14 14) scale(-1 -1)"/></g></svg>
<div class="cb" style="left:1504px;top:214px;width:414px;height:209px"></div>
<svg class="abs" style="left:1504px;top:214px" width="414" height="209" viewBox="1504 214 414 209"><path d="M1548 356.5H1907" stroke="#4b4b4b" stroke-width="1"/><path d="M1548 344.5H1907" stroke="#4b4b4b" stroke-width="1"/><path d="M1548 331.5H1907" stroke="#4b4b4b" stroke-width="1"/><path d="M1548 319.5H1907" stroke="#4b4b4b" stroke-width="1"/><path d="M1548 307.5H1907" stroke="#4b4b4b" stroke-width="1"/><path d="M1548 295.5H1907" stroke="#4b4b4b" stroke-width="1"/><path d="M1548 282.5H1907" stroke="#4b4b4b" stroke-width="1"/><path d="M1548 270.5H1907" stroke="#4b4b4b" stroke-width="1"/><path d="M1548 258.5H1907" stroke="#4b4b4b" stroke-width="1"/><path d="M1548 245.5H1907" stroke="#4b4b4b" stroke-width="1"/><path d="M1548 233.5H1907" stroke="#4b4b4b" stroke-width="1"/><path d="M1548 356.5H1553" stroke="#4b4b4b" stroke-width="1"/><text x="1542" y="360.2" font-size="11" fill="#f2f2f2" text-anchor="end">0</text><path d="M1548 331.5H1553" stroke="#4b4b4b" stroke-width="1"/><text x="1542" y="335.6" font-size="11" fill="#f2f2f2" text-anchor="end">2000</text><path d="M1548 307.5H1553" stroke="#4b4b4b" stroke-width="1"/><text x="1542" y="311.0" font-size="11" fill="#f2f2f2" text-anchor="end">4000</text><path d="M1548 282.5H1553" stroke="#4b4b4b" stroke-width="1"/><text x="1542" y="286.5" font-size="11" fill="#f2f2f2" text-anchor="end">6000</text><path d="M1548 258.5H1553" stroke="#4b4b4b" stroke-width="1"/><text x="1542" y="261.9" font-size="11" fill="#f2f2f2" text-anchor="end">8000</text><path d="M1548 233.5H1553" stroke="#4b4b4b" stroke-width="1"/><text x="1542" y="237.3" font-size="11" fill="#f2f2f2" text-anchor="end">10000</text><path d="M1551 366.5H1553" stroke="#4b4b4b" stroke-width="1"/><path d="M1551 363.5H1553" stroke="#4b4b4b" stroke-width="1"/><path d="M1551 361.5H1553" stroke="#4b4b4b" stroke-width="1"/><path d="M1551 358.5H1553" stroke="#4b4b4b" stroke-width="1"/><path d="M1551 356.5H1553" stroke="#4b4b4b" stroke-width="1"/><path d="M1551 354.5H1553" stroke="#4b4b4b" stroke-width="1"/><path d="M1551 351.5H1553" stroke="#4b4b4b" stroke-width="1"/><path d="M1551 349.5H1553" stroke="#4b4b4b" stroke-width="1"/><path d="M1551 346.5H1553" stroke="#4b4b4b" stroke-width="1"/><path d="M1551 344.5H1553" stroke="#4b4b4b" stroke-width="1"/><path d="M1551 341.5H1553" stroke="#4b4b4b" stroke-width="1"/><path d="M1551 339.5H1553" stroke="#4b4b4b" stroke-width="1"/><path d="M1551 336.5H1553" stroke="#4b4b4b" stroke-width="1"/><path d="M1551 334.5H1553" stroke="#4b4b4b" stroke-width="1"/><path d="M1551 331.5H1553" stroke="#4b4b4b" stroke-width="1"/><path d="M1551 329.5H1553" stroke="#4b4b4b" stroke-width="1"/><path d="M1551 327.5H1553" stroke="#4b4b4b" stroke-width="1"/><path d="M1551 324.5H1553" stroke="#4b4b4b" stroke-width="1"/><path d="M1551 322.5H1553" stroke="#4b4b4b" stroke-width="1"/><path d="M1551 319.5H1553" stroke="#4b4b4b" stroke-width="1"/><path d="M1551 317.5H1553" stroke="#4b4b4b" stroke-width="1"/><path d="M1551 314.5H1553" stroke="#4b4b4b" stroke-width="1"/><path d="M1551 312.5H1553" stroke="#4b4b4b" stroke-width="1"/><path d="M1551 309.5H1553" stroke="#4b4b4b" stroke-width="1"/><path d="M1551 307.5H1553" stroke="#4b4b4b" stroke-width="1"/><path d="M1551 304.5H1553" stroke="#4b4b4b" stroke-width="1"/><path d="M1551 302.5H1553" stroke="#4b4b4b" stroke-width="1"/><path d="M1551 299.5H1553" stroke="#4b4b4b" stroke-width="1"/><path d="M1551 297.5H1553" stroke="#4b4b4b" stroke-width="1"/><path d="M1551 295.5H1553" stroke="#4b4b4b" stroke-width="1"/><path d="M1551 292.5H1553" stroke="#4b4b4b" stroke-width="1"/><path d="M1551 290.5H1553" stroke="#4b4b4b" stroke-width="1"/><path d="M1551 287.5H1553" stroke="#4b4b4b" stroke-width="1"/><path d="M1551 285.5H1553" stroke="#4b4b4b" stroke-width="1"/><path d="M1551 282.5H1553" stroke="#4b4b4b" stroke-width="1"/><path d="M1551 280.5H1553" stroke="#4b4b4b" stroke-width="1"/><path d="M1551 277.5H1553" stroke="#4b4b4b" stroke-width="1"/><path d="M1551 275.5H1553" stroke="#4b4b4b" stroke-width="1"/><path d="M1551 272.5H1553" stroke="#4b4b4b" stroke-width="1"/><path d="M1551 270.5H1553" stroke="#4b4b4b" stroke-width="1"/><path d="M1551 268.5H1553" stroke="#4b4b4b" stroke-width="1"/><path d="M1551 265.5H1553" stroke="#4b4b4b" stroke-width="1"/><path d="M1551 263.5H1553" stroke="#4b4b4b" stroke-width="1"/><path d="M1551 260.5H1553" stroke="#4b4b4b" stroke-width="1"/><path d="M1551 258.5H1553" stroke="#4b4b4b" stroke-width="1"/><path d="M1551 255.5H1553" stroke="#4b4b4b" stroke-width="1"/><path d="M1551 253.5H1553" stroke="#4b4b4b" stroke-width="1"/><path d="M1551 250.5H1553" stroke="#4b4b4b" stroke-width="1"/><path d="M1551 248.5H1553" stroke="#4b4b4b" stroke-width="1"/><path d="M1551 245.5H1553" stroke="#4b4b4b" stroke-width="1"/><path d="M1551 243.5H1553" stroke="#4b4b4b" stroke-width="1"/><path d="M1551 240.5H1553" stroke="#4b4b4b" stroke-width="1"/><path d="M1551 238.5H1553" stroke="#4b4b4b" stroke-width="1"/><path d="M1551 236.5H1553" stroke="#4b4b4b" stroke-width="1"/><path d="M1551 233.5H1553" stroke="#4b4b4b" stroke-width="1"/><path d="M1551 231.5H1553" stroke="#4b4b4b" stroke-width="1"/><path d="M1551 228.5H1553" stroke="#4b4b4b" stroke-width="1"/><path d="M1551 226.5H1553" stroke="#4b4b4b" stroke-width="1"/><path d="M1553.5 224V373" stroke="#4b4b4b" stroke-width="1"/><text x="1552.7" y="387.5" font-size="11" fill="#f2f2f2" text-anchor="middle">70</text><path d="M1624.5 224V373" stroke="#4b4b4b" stroke-width="1"/><text x="1623.3" y="387.5" font-size="11" fill="#f2f2f2" text-anchor="middle">75</text><path d="M1694.5 224V373" stroke="#4b4b4b" stroke-width="1"/><text x="1693.9" y="387.5" font-size="11" fill="#f2f2f2" text-anchor="middle">80</text><path d="M1765.5 224V373" stroke="#4b4b4b" stroke-width="1"/><text x="1764.5" y="387.5" font-size="11" fill="#f2f2f2" text-anchor="middle">85</text><path d="M1835.5 224V373" stroke="#4b4b4b" stroke-width="1"/><text x="1835.1" y="387.5" font-size="11" fill="#f2f2f2" text-anchor="middle">90</text><path d="M1906.5 224V373" stroke="#4b4b4b" stroke-width="1"/><text x="1904.1" y="387.5" font-size="11" fill="#f2f2f2" text-anchor="middle">95</text><path d="M1553.5 368V370.5" stroke="#4b4b4b" stroke-width="1"/><path d="M1567.5 368V370.5" stroke="#4b4b4b" stroke-width="1"/><path d="M1581.5 368V370.5" stroke="#4b4b4b" stroke-width="1"/><path d="M1595.5 368V370.5" stroke="#4b4b4b" stroke-width="1"/><path d="M1609.5 368V370.5" stroke="#4b4b4b" stroke-width="1"/><path d="M1624.5 368V370.5" stroke="#4b4b4b" stroke-width="1"/><path d="M1638.5 368V370.5" stroke="#4b4b4b" stroke-width="1"/><path d="M1652.5 368V370.5" stroke="#4b4b4b" stroke-width="1"/><path d="M1666.5 368V370.5" stroke="#4b4b4b" stroke-width="1"/><path d="M1680.5 368V370.5" stroke="#4b4b4b" stroke-width="1"/><path d="M1694.5 368V370.5" stroke="#4b4b4b" stroke-width="1"/><path d="M1708.5 368V370.5" stroke="#4b4b4b" stroke-width="1"/><path d="M1722.5 368V370.5" stroke="#4b4b4b" stroke-width="1"/><path d="M1737.5 368V370.5" stroke="#4b4b4b" stroke-width="1"/><path d="M1751.5 368V370.5" stroke="#4b4b4b" stroke-width="1"/><path d="M1765.5 368V370.5" stroke="#4b4b4b" stroke-width="1"/><path d="M1779.5 368V370.5" stroke="#4b4b4b" stroke-width="1"/><path d="M1793.5 368V370.5" stroke="#4b4b4b" stroke-width="1"/><path d="M1807.5 368V370.5" stroke="#4b4b4b" stroke-width="1"/><path d="M1821.5 368V370.5" stroke="#4b4b4b" stroke-width="1"/><path d="M1835.5 368V370.5" stroke="#4b4b4b" stroke-width="1"/><path d="M1850.5 368V370.5" stroke="#4b4b4b" stroke-width="1"/><path d="M1864.5 368V370.5" stroke="#4b4b4b" stroke-width="1"/><path d="M1878.5 368V370.5" stroke="#4b4b4b" stroke-width="1"/><path d="M1892.5 368V370.5" stroke="#4b4b4b" stroke-width="1"/><path d="M1906.5 368V370.5" stroke="#4b4b4b" stroke-width="1"/><path d="M1553 224.5H1907M1553 368.5H1907" stroke="#4b4b4b" stroke-width="1"/><clipPath id="cpTube3"><rect x="1554" y="224" width="353" height="144"/></clipPath><g clip-path="url(#cpTube3)" fill="none" stroke-linejoin="round"><path d="M1665,356.6 1665.8,356.6 1666.5,356.7 1667.2,356.8 1667.9,356.9 1668.6,357.1 1669.3,357.3 1670,357.5 1670.7,357.8 1671.4,358.1 1672.1,358.5 1672.8,358.8 1673.5,359.1 1674.2,359.4 1674.9,359.7 1675.6,359.9 1676.3,359.9 1677,359.9 1677.8,359.8 1678.5,359.6 1679.2,359.4 1679.9,359 1680.6,358.1 1681.3,354.8 1682,345.2 1682.7,330.1 1683.4,321.8 1684.1,322.1 1684.8,323.3 1685.5,325.4 1686.2,328.2 1686.9,331.5 1687.6,335 1688.3,338.6 1689.1,342 1689.8,345.1 1690.5,347.8 1691.2,350.1 1691.9,352 1692.6,353.6 1693.3,354.8 1694,355.8 1694.7,356.7 1695.4,357.3 1696.1,357.9 1696.8,358.4 1697.5,358.9 1698.2,359.2 1698.9,359.5 1699.6,359.8 1700.3,359.9 1701.1,359.9 1701.8,359.9 1702.5,359.7 1703.2,359.5 1703.9,359.2 1704.6,358.9 1705.3,358.5 1706,358.2 1706.7,357.9 1707.4,357.6 1708.1,357.3 1708.8,357.1 1709.5,356.9 1710.2,356.8 1710.9,356.7 1711.6,356.6 1712.3,356.6M1732.8,356.6 1733.5,356.7 1734.2,356.7 1734.9,356.8 1735.6,357 1736.4,357.2 1737.1,357.4 1737.8,357.7 1738.5,358 1739.2,358.4 1739.9,358.7 1740.6,359.1 1741.3,359.5 1742,359.8 1742.7,360.1 1743.4,360.3 1744.1,360.4 1744.8,360.3 1745.5,360.2 1746.2,360 1746.9,359.6 1747.7,359.2 1748.4,358.7 1749.1,358.1 1749.8,357.5 1750.5,356.7 1751.2,355.8 1751.9,354.8 1752.6,353.5 1753.3,351.8 1754,349.8 1754.7,347.4 1755.4,344.5 1756.1,341.1 1756.8,337.4 1757.5,333.3 1758.2,329 1758.9,324.8 1759.7,320.8 1760.4,317.3 1761.1,314.5 1761.8,312.7 1762.5,311.9 1763.2,315.2 1763.9,330.3 1764.6,346.1 1765.3,355 1766,358.3 1766.7,359.3 1767.4,359.7 1768.1,360 1768.8,360.2 1769.5,360.4 1770.2,360.4 1770.9,360.3 1771.7,360.1 1772.4,359.8 1773.1,359.5 1773.8,359.1 1774.5,358.7 1775.2,358.3 1775.9,358 1776.6,357.7 1777.3,357.4 1778,357.2 1778.7,357 1779.4,356.8 1780.1,356.7 1780.8,356.6 1781.5,356.6M1819,356.6 1819.7,356.6 1820.4,356.7 1821.1,356.7 1821.8,356.9 1822.5,357 1823.2,357.2 1823.9,357.5 1824.6,357.8 1825.3,358.1 1826,358.5 1826.7,358.9 1827.4,359.4 1828.1,359.8 1828.8,360.2 1829.5,360.5 1830.3,360.7 1831,360.8 1831.7,360.8 1832.4,360.7 1833.1,360.4 1833.8,360.1 1834.5,359.6 1835.2,358.9 1835.9,357.8 1836.6,356 1837.3,353 1838,348.2 1838.7,341.1 1839.4,331.9 1840.1,321.4 1840.8,311.4 1841.5,304.1 1842.3,301.4 1843,303.1 1843.7,307.9 1844.4,315 1845.1,323.2 1845.8,331.6 1846.5,339.1 1847.2,345.3 1847.9,350 1848.6,353.4 1849.3,355.8 1850,357.3 1850.7,358.4 1851.4,359.2 1852.1,359.8 1852.8,360.2 1853.5,360.5 1854.3,360.7 1855,360.8 1855.7,360.8 1856.4,360.6 1857.1,360.4 1857.8,360 1858.5,359.6 1859.2,359.2 1859.9,358.8 1860.6,358.4 1861.3,358 1862,357.6 1862.7,357.4 1863.4,357.1 1864.1,356.9 1864.8,356.8 1865.6,356.7 1866.3,356.6 1867,356.6" stroke="#d5e6f8" stroke-width="1.6"/><path d="M1819.7,356.6 1820.4,356.6 1821.1,356.7 1821.8,356.8 1822.5,357 1823.2,357.2 1823.9,357.4 1824.6,357.7 1825.3,358 1826,358.4 1826.7,358.8 1827.4,359.2 1828.1,359.6 1828.8,359.9 1829.5,360.2 1830.3,360.4 1831,360.5 1831.7,360.5 1832.4,360.4 1833.1,360.2 1833.8,359.9 1834.5,359.4 1835.2,358.8 1835.9,357.8 1836.6,356.2 1837.3,353.5 1838,349.2 1838.7,342.9 1839.4,334.6 1840.1,325.3 1840.8,316.4 1841.5,309.9 1842.3,307.5 1843,309 1843.7,313.3 1844.4,319.6 1845.1,326.9 1845.8,334.4 1846.5,341.1 1847.2,346.6 1847.9,350.8 1848.6,353.8 1849.3,355.9 1850,357.4 1850.7,358.3 1851.4,359 1852.1,359.6 1852.8,360 1853.5,360.3 1854.3,360.5 1855,360.6 1855.7,360.5 1856.4,360.4 1857.1,360.1 1857.8,359.8 1858.5,359.4 1859.2,359 1859.9,358.6 1860.6,358.2 1861.3,357.9 1862,357.6 1862.7,357.3 1863.4,357.1 1864.1,356.9 1864.8,356.8 1865.6,356.7 1866.3,356.6 1867,356.6" stroke="#d5e6f8" stroke-width="1.6"/><path d="M1662.2,356.6 1662.9,356.6 1663.6,356.7 1664.3,356.8 1665,357 1665.8,357.2 1666.5,357.4 1667.2,357.7 1667.9,358.1 1668.6,358.6 1669.3,359.1 1670,359.6 1670.7,360.1 1671.4,360.6 1672.1,361.1 1672.8,361.4 1673.5,361.7 1674.2,361.7 1674.9,361.7 1675.6,361.5 1676.3,361.1 1677,360.6 1677.8,359.9 1678.5,359.1 1679.2,358.2 1679.9,357.1 1680.6,355.8 1681.3,354.2 1682,352.3 1682.7,349.9 1683.4,347 1684.1,343.3 1684.8,338.8 1685.5,333.3 1686.2,326.9 1686.9,319.5 1687.6,311.1 1688.3,301.9 1689.1,292.2 1689.8,282.2 1690.5,272.3 1691.2,262.8 1691.9,254.3 1692.6,247.2 1693.3,241.8 1694,238.4 1694.7,237.3 1695.4,238.4 1696.1,241.8 1696.8,247.2 1697.5,254.3 1698.2,262.8 1698.9,272.3 1699.6,282.2 1700.3,292.2 1701.1,301.9 1701.8,311.1 1702.5,319.5 1703.2,326.9 1703.9,333.3 1704.6,338.8 1705.3,343.3 1706,347 1706.7,349.9 1707.4,352.3 1708.1,354.2 1708.8,355.8 1709.5,357.1 1710.2,358.2 1710.9,359.1 1711.6,359.9 1712.3,360.6 1713.1,361.1 1713.8,361.5 1714.5,361.7 1715.2,361.7 1715.9,361.7 1716.6,361.4 1717.3,361.1 1718,360.6 1718.7,360.1 1719.4,359.6 1720.1,359.1 1720.8,358.6 1721.5,358.1 1722.2,357.7 1722.9,357.4 1723.6,357.2 1724.4,357 1725.1,356.8 1725.8,356.7 1726.5,356.6 1727.2,356.6M1803.4,356.6 1804.1,356.6 1804.8,356.7 1805.5,356.8 1806.2,356.9 1807,357.1 1807.7,357.4 1808.4,357.6 1809.1,358 1809.8,358.3 1810.5,358.7 1811.2,359.1 1811.9,359.5 1812.6,359.9 1813.3,360.2 1814,360.4 1814.7,360.5 1815.4,360.5 1816.1,360.4 1816.8,360.2 1817.5,359.8 1818.2,359.4 1819,359 1819.7,358.4 1820.4,357.8 1821.1,357.2 1821.8,356.6 1822.5,355.8 1823.2,355 1823.9,354 1824.6,352.9 1825.3,351.6 1826,350 1826.7,348.1 1827.4,345.9 1828.1,343.4 1828.8,340.6 1829.5,337.4 1830.3,334 1831,330.4 1831.7,326.7 1832.4,323 1833.1,319.4 1833.8,316.1 1834.5,313.1 1835.2,310.7 1835.9,308.9 1836.6,307.7 1837.3,307.3 1838,307.8 1838.7,309.3 1839.4,311.7 1840.1,314.7 1840.8,318.4 1841.5,322.5 1842.3,326.7 1843,330.9 1843.7,335 1844.4,338.8 1845.1,342.3 1845.8,345.3 1846.5,347.9 1847.2,350.1 1847.9,351.9 1848.6,353.4 1849.3,354.7 1850,355.7 1850.7,356.5 1851.4,357.3 1852.1,358 1852.8,358.6 1853.5,359.1 1854.3,359.6 1855,360 1855.7,360.3 1856.4,360.5 1857.1,360.5 1857.8,360.5 1858.5,360.4 1859.2,360.1 1859.9,359.8 1860.6,359.4 1861.3,359 1862,358.6 1862.7,358.2 1863.4,357.8 1864.1,357.5 1864.8,357.3 1865.6,357.1 1866.3,356.9 1867,356.8 1867.7,356.7 1868.4,356.6 1869.1,356.6" stroke="#e6b84c" stroke-width="2.0"/><path d="M1662.2,356.6 1662.9,356.6 1663.6,356.7 1664.3,356.8 1665,357 1665.8,357.2 1666.5,357.4 1667.2,357.7 1667.9,358.1 1668.6,358.6 1669.3,359.1 1670,359.6 1670.7,360.1 1671.4,360.6 1672.1,361.1 1672.8,361.4 1673.5,361.7 1674.2,361.7 1674.9,361.7 1675.6,361.5 1676.3,361.1 1677,360.6 1677.8,360 1678.5,359.2 1679.2,358.3 1679.9,357.3 1680.6,356.1 1681.3,354.7 1682,353 1682.7,350.9 1683.4,348.3 1684.1,345.1 1684.8,341.2 1685.5,336.4 1686.2,330.9 1686.9,324.4 1687.6,317.2 1688.3,309.3 1689.1,300.8 1689.8,292.2 1690.5,283.6 1691.2,275.4 1691.9,268 1692.6,261.8 1693.3,257.2 1694,254.3 1694.7,253.3 1695.4,254.3 1696.1,257.2 1696.8,261.8 1697.5,268 1698.2,275.4 1698.9,283.6 1699.6,292.2 1700.3,300.8 1701.1,309.3 1701.8,317.2 1702.5,324.4 1703.2,330.9 1703.9,336.4 1704.6,341.2 1705.3,345.1 1706,348.3 1706.7,350.9 1707.4,353 1708.1,354.7 1708.8,356.1 1709.5,357.3 1710.2,358.3 1710.9,359.2 1711.6,360 1712.3,360.6 1713.1,361.1 1713.8,361.5 1714.5,361.7 1715.2,361.7 1715.9,361.7 1716.6,361.4 1717.3,361.1 1718,360.6 1718.7,360.1 1719.4,359.6 1720.1,359.1 1720.8,358.6 1721.5,358.1 1722.2,357.7 1722.9,357.4 1723.6,357.2 1724.4,357 1725.1,356.8 1725.8,356.7 1726.5,356.6 1727.2,356.6M1821.8,356.6 1822.5,356.6 1823.2,356.7 1823.9,356.8 1824.6,357 1825.3,357.2 1826,357.4 1826.7,357.7 1827.4,358 1828.1,358.4 1828.8,358.8 1829.5,359.2 1830.3,359.6 1831,359.9 1831.7,360.2 1832.4,360.4 1833.1,360.5 1833.8,360.5 1834.5,360.4 1835.2,360.2 1835.9,359.9 1836.6,359.4 1837.3,358.7 1838,357.4 1838.7,354.9 1839.4,350.2 1840.1,342.6 1840.8,332.1 1841.5,320.6 1842.3,311.3 1843,307.7 1843.7,308.5 1844.4,311.3 1845.1,315.6 1845.8,320.9 1846.5,326.8 1847.2,332.7 1847.9,338.3 1848.6,343.2 1849.3,347.2 1850,350.5 1850.7,353 1851.4,354.9 1852.1,356.3 1852.8,357.4 1853.5,358.2 1854.3,358.9 1855,359.4 1855.7,359.8 1856.4,360.2 1857.1,360.4 1857.8,360.5 1858.5,360.5 1859.2,360.4 1859.9,360.2 1860.6,359.9 1861.3,359.6 1862,359.2 1862.7,358.8 1863.4,358.4 1864.1,358 1864.8,357.7 1865.6,357.4 1866.3,357.1 1867,357 1867.7,356.8 1868.4,356.7 1869.1,356.6 1869.8,356.6" stroke="#e6b84c" stroke-width="2.0"/><path d="M1660.8,356.6 1661.5,356.6 1662.2,356.7 1662.9,356.7 1663.6,356.9 1664.3,357 1665,357.2 1665.8,357.5 1666.5,357.8 1667.2,358.3 1667.9,358.7 1668.6,359.2 1669.3,359.7 1670,360.3 1670.7,360.8 1671.4,361.2 1672.1,361.5 1672.8,361.7 1673.5,361.7 1674.2,361.6 1674.9,361.4 1675.6,361 1676.3,360.4 1677,359.8 1677.8,359 1678.5,358.1 1679.2,357.1 1679.9,356 1680.6,354.7 1681.3,353.1 1682,351.2 1682.7,348.9 1683.4,346.1 1684.1,342.7 1684.8,338.6 1685.5,333.8 1686.2,328.3 1686.9,322 1687.6,315.1 1688.3,307.7 1689.1,300 1689.8,292.2 1690.5,284.5 1691.2,277.3 1691.9,270.9 1692.6,265.5 1693.3,261.5 1694,259 1694.7,258.2 1695.4,259 1696.1,261.5 1696.8,265.5 1697.5,270.9 1698.2,277.3 1698.9,284.5 1699.6,292.2 1700.3,300 1701.1,307.7 1701.8,315.1 1702.5,322 1703.2,328.3 1703.9,333.8 1704.6,338.6 1705.3,342.7 1706,346.1 1706.7,348.9 1707.4,351.2 1708.1,353.1 1708.8,354.7 1709.5,356 1710.2,357.1 1710.9,358.1 1711.6,359 1712.3,359.8 1713.1,360.4 1713.8,361 1714.5,361.4 1715.2,361.6 1715.9,361.7 1716.6,361.7 1717.3,361.5 1718,361.2 1718.7,360.8 1719.4,360.3 1720.1,359.7 1720.8,359.2 1721.5,358.7 1722.2,358.3 1722.9,357.8 1723.6,357.5 1724.4,357.2 1725.1,357 1725.8,356.9 1726.5,356.7 1727.2,356.7 1727.9,356.6 1728.6,356.6M1821.8,356.6 1822.5,356.6 1823.2,356.7 1823.9,356.7 1824.6,356.8 1825.3,357 1826,357.2 1826.7,357.4 1827.4,357.6 1828.1,357.9 1828.8,358.2 1829.5,358.5 1830.3,358.7 1831,359 1831.7,359.2 1832.4,359.4 1833.1,359.4 1833.8,359.4 1834.5,359.3 1835.2,359.2 1835.9,359 1836.6,358.6 1837.3,358.2 1838,357.5 1838.7,356.1 1839.4,353.7 1840.1,349.8 1840.8,344.5 1841.5,338.7 1842.3,334 1843,332.2 1843.7,332.6 1844.4,333.9 1845.1,336.1 1845.8,338.7 1846.5,341.7 1847.2,344.7 1847.9,347.4 1848.6,349.9 1849.3,352 1850,353.6 1850.7,355 1851.4,356 1852.1,356.7 1852.8,357.4 1853.5,357.9 1854.3,358.3 1855,358.7 1855.7,359 1856.4,359.2 1857.1,359.4 1857.8,359.4 1858.5,359.4 1859.2,359.4 1859.9,359.2 1860.6,359 1861.3,358.7 1862,358.4 1862.7,358.1 1863.4,357.9 1864.1,357.6 1864.8,357.3 1865.6,357.1 1866.3,357 1867,356.8 1867.7,356.7 1868.4,356.7 1869.1,356.6 1869.8,356.6" stroke="#e6b84c" stroke-width="2.0"/><path d="M1660.1,356.6 1660.8,356.6 1661.5,356.7 1662.2,356.8 1662.9,356.9 1663.6,357.1 1664.3,357.3 1665,357.6 1665.8,357.9 1666.5,358.3 1667.2,358.8 1667.9,359.3 1668.6,359.8 1669.3,360.3 1670,360.8 1670.7,361.2 1671.4,361.5 1672.1,361.6 1672.8,361.6 1673.5,361.5 1674.2,361.2 1674.9,360.7 1675.6,360.2 1676.3,359.6 1677,358.9 1677.8,358.1 1678.5,357.3 1679.2,356.3 1679.9,355.3 1680.6,354.1 1681.3,352.7 1682,351.1 1682.7,349.1 1683.4,346.7 1684.1,343.9 1684.8,340.6 1685.5,336.9 1686.2,332.6 1686.9,327.9 1687.6,322.7 1688.3,317.3 1689.1,311.8 1689.8,306.2 1690.5,300.8 1691.2,295.8 1691.9,291.4 1692.6,287.8 1693.3,285 1694,283.3 1694.7,282.8 1695.4,283.2 1696.1,284.6 1696.8,286.7 1697.5,289.7 1698.2,293.3 1698.9,297.5 1699.6,302 1700.3,306.8 1701.1,311.8 1701.8,316.7 1702.5,321.6 1703.2,326.2 1703.9,330.5 1704.6,334.5 1705.3,338.1 1706,341.4 1706.7,344.2 1707.4,346.6 1708.1,348.7 1708.8,350.5 1709.5,352 1710.2,353.3 1710.9,354.5 1711.6,355.4 1712.3,356.3 1713.1,357.2 1713.8,357.9 1714.5,358.7 1715.2,359.4 1715.9,360 1716.6,360.6 1717.3,361 1718,361.4 1718.7,361.6 1719.4,361.6 1720.1,361.5 1720.8,361.3 1721.5,360.9 1722.2,360.5 1722.9,360 1723.6,359.5 1724.4,359 1725.1,358.5 1725.8,358.1 1726.5,357.7 1727.2,357.4 1727.9,357.1 1728.6,356.9 1729.3,356.8 1730,356.7 1730.7,356.6 1731.4,356.6M1836.6,356.5 1837.3,356.3 1838,356 1838.7,355.2 1839.4,353.6 1840.1,350.9 1840.8,347 1841.5,342.8 1842.3,339.4 1843,338.1 1843.7,338.4 1844.4,339.5 1845.1,341.1 1845.8,343.1 1846.5,345.3 1847.2,347.5 1847.9,349.6 1848.6,351.4 1849.3,352.9 1850,354 1850.7,354.9 1851.4,355.5 1852.1,355.9 1852.8,356.1 1853.5,356.3 1854.3,356.4 1855,356.4" stroke="#e6b84c" stroke-width="2.0"/><path d="M1553.5,355.6 1554.2,355.1 1554.9,354.4 1555.6,353.6 1556.3,352.6 1557,351.7 1557.7,350.9 1558.4,350.3 1559.1,350.1 1559.9,350.3 1560.6,350.7 1561.3,351.4 1562,352.3 1562.7,353.1 1563.4,354 1564.1,354.7 1564.8,355.3 1565.5,355.7 1566.2,356 1566.9,356.2 1567.6,356.3 1568.3,356.4M1673.5,356.4 1674.2,356.4 1674.9,356.3 1675.6,356.3 1676.3,356.2 1677,356.1 1677.8,355.9 1678.5,355.7 1679.2,355.5 1679.9,355.2 1680.6,354.8 1681.3,354.4 1682,353.8 1682.7,353.2 1683.4,352.5 1684.1,351.6 1684.8,350.6 1685.5,349.6 1686.2,348.4 1686.9,347.2 1687.6,345.9 1688.3,344.6 1689.1,343.3 1689.8,342 1690.5,340.8 1691.2,339.6 1691.9,338.7 1692.6,337.9 1693.3,337.3 1694,337 1694.7,336.8 1695.4,336.9 1696.1,337.2 1696.8,337.7 1697.5,338.3 1698.2,339.1 1698.9,340.1 1699.6,341.1 1700.3,342.2 1701.1,343.4 1701.8,344.6 1702.5,345.8 1703.2,346.9 1703.9,348.1 1704.6,349.1 1705.3,350.1 1706,351 1706.7,351.9 1707.4,352.6 1708.1,353.3 1708.8,353.8 1709.5,354.3 1710.2,354.8 1710.9,355.1 1711.6,355.4 1712.3,355.6 1713.1,355.8 1713.8,356 1714.5,356.1 1715.2,356.2 1715.9,356.3 1716.6,356.3 1717.3,356.4 1718,356.4M1776.6,356.4 1777.3,356.4 1778,356.3 1778.7,356.2 1779.4,356.1 1780.1,355.9 1780.8,355.7 1781.5,355.5 1782.2,355.1 1783,354.7 1783.7,354.3 1784.4,353.8 1785.1,353.2 1785.8,352.5 1786.5,351.9 1787.2,351.2 1787.9,350.6 1788.6,350 1789.3,349.5 1790,349.2 1790.7,349 1791.4,348.9 1792.1,351.9 1792.8,355.5 1793.5,356.4" stroke="#e6b84c" stroke-width="2.0"/><path d="M1676.3,356.4 1677,356.3 1677.8,356.2 1678.5,355.9 1679.2,355.4 1679.9,354.7 1680.6,353.4 1681.3,351.6 1682,348.9 1682.7,345.3 1683.4,340.6 1684.1,334.7 1684.8,328 1685.5,320.7 1686.2,313.5 1686.9,306.9 1687.6,301.7 1688.3,298.5 1689.1,297.9 1689.8,300.6 1690.5,306.5 1691.2,314.5 1691.9,323.4 1692.6,331.9 1693.3,339.3 1694,345.1 1694.7,349.4 1695.4,352.4 1696.1,354.2 1696.8,355.3 1697.5,355.9 1698.2,356.2 1698.9,356.4 1699.6,356.5" stroke="#e6b84c" stroke-width="2.0"/><path d="M1665,356.6 1665.8,356.6 1666.5,356.7 1667.2,356.8 1667.9,356.9 1668.6,357.1 1669.3,357.3 1670,357.5 1670.7,357.8 1671.4,358.1 1672.1,358.5 1672.8,358.8 1673.5,359.1 1674.2,359.4 1674.9,359.7 1675.6,359.9 1676.3,359.9 1677,359.9 1677.8,359.8 1678.5,359.6 1679.2,359.4 1679.9,359 1680.6,358.1 1681.3,354.8 1682,345.2 1682.7,330.1 1683.4,321.8 1684.1,322.1 1684.8,323.3 1685.5,325.4 1686.2,328.2 1686.9,331.5 1687.6,335 1688.3,338.6 1689.1,342 1689.8,345.1 1690.5,347.8 1691.2,350.1 1691.9,352 1692.6,353.6 1693.3,354.8 1694,355.8 1694.7,356.7 1695.4,357.3 1696.1,357.9 1696.8,358.4 1697.5,358.9 1698.2,359.2 1698.9,359.5 1699.6,359.8 1700.3,359.9 1701.1,359.9 1701.8,359.9 1702.5,359.7 1703.2,359.5 1703.9,359.2 1704.6,358.9 1705.3,358.5 1706,358.2 1706.7,357.9 1707.4,357.6 1708.1,357.3 1708.8,357.1 1709.5,356.9 1710.2,356.8 1710.9,356.7 1711.6,356.6 1712.3,356.6M1732.8,356.6 1733.5,356.7 1734.2,356.7 1734.9,356.8 1735.6,357 1736.4,357.2 1737.1,357.4 1737.8,357.7 1738.5,358 1739.2,358.4 1739.9,358.7 1740.6,359.1 1741.3,359.5 1742,359.8 1742.7,360.1 1743.4,360.3 1744.1,360.4 1744.8,360.3 1745.5,360.2 1746.2,360 1746.9,359.6 1747.7,359.2 1748.4,358.7 1749.1,358.1 1749.8,357.5 1750.5,356.7 1751.2,355.8 1751.9,354.8 1752.6,353.5 1753.3,351.8 1754,349.8 1754.7,347.4 1755.4,344.5 1756.1,341.1 1756.8,337.4 1757.5,333.3 1758.2,329 1758.9,324.8 1759.7,320.8 1760.4,317.3 1761.1,314.5 1761.8,312.7 1762.5,311.9 1763.2,315.2 1763.9,330.3 1764.6,346.1 1765.3,355 1766,358.3 1766.7,359.3 1767.4,359.7 1768.1,360 1768.8,360.2 1769.5,360.4 1770.2,360.4 1770.9,360.3 1771.7,360.1 1772.4,359.8 1773.1,359.5 1773.8,359.1 1774.5,358.7 1775.2,358.3 1775.9,358 1776.6,357.7 1777.3,357.4 1778,357.2 1778.7,357 1779.4,356.8 1780.1,356.7 1780.8,356.6 1781.5,356.6M1819,356.6 1819.7,356.6 1820.4,356.7 1821.1,356.7 1821.8,356.9 1822.5,357 1823.2,357.2 1823.9,357.5 1824.6,357.8 1825.3,358.1 1826,358.5 1826.7,358.9 1827.4,359.4 1828.1,359.8 1828.8,360.2 1829.5,360.5 1830.3,360.7 1831,360.8 1831.7,360.8 1832.4,360.7 1833.1,360.4 1833.8,360.1 1834.5,359.6 1835.2,358.9 1835.9,357.8 1836.6,356 1837.3,353 1838,348.2 1838.7,341.1 1839.4,331.9 1840.1,321.4 1840.8,311.4 1841.5,304.1 1842.3,301.4 1843,303.1 1843.7,307.9 1844.4,315 1845.1,323.2 1845.8,331.6 1846.5,339.1 1847.2,345.3 1847.9,350 1848.6,353.4 1849.3,355.8 1850,357.3 1850.7,358.4 1851.4,359.2 1852.1,359.8 1852.8,360.2 1853.5,360.5 1854.3,360.7 1855,360.8 1855.7,360.8 1856.4,360.6 1857.1,360.4 1857.8,360 1858.5,359.6 1859.2,359.2 1859.9,358.8 1860.6,358.4 1861.3,358 1862,357.6 1862.7,357.4 1863.4,357.1 1864.1,356.9 1864.8,356.8 1865.6,356.7 1866.3,356.6 1867,356.6" stroke="#d5e6f8" stroke-width="1.1" opacity="0.75"/><path d="M1819.7,356.6 1820.4,356.6 1821.1,356.7 1821.8,356.8 1822.5,357 1823.2,357.2 1823.9,357.4 1824.6,357.7 1825.3,358 1826,358.4 1826.7,358.8 1827.4,359.2 1828.1,359.6 1828.8,359.9 1829.5,360.2 1830.3,360.4 1831,360.5 1831.7,360.5 1832.4,360.4 1833.1,360.2 1833.8,359.9 1834.5,359.4 1835.2,358.8 1835.9,357.8 1836.6,356.2 1837.3,353.5 1838,349.2 1838.7,342.9 1839.4,334.6 1840.1,325.3 1840.8,316.4 1841.5,309.9 1842.3,307.5 1843,309 1843.7,313.3 1844.4,319.6 1845.1,326.9 1845.8,334.4 1846.5,341.1 1847.2,346.6 1847.9,350.8 1848.6,353.8 1849.3,355.9 1850,357.4 1850.7,358.3 1851.4,359 1852.1,359.6 1852.8,360 1853.5,360.3 1854.3,360.5 1855,360.6 1855.7,360.5 1856.4,360.4 1857.1,360.1 1857.8,359.8 1858.5,359.4 1859.2,359 1859.9,358.6 1860.6,358.2 1861.3,357.9 1862,357.6 1862.7,357.3 1863.4,357.1 1864.1,356.9 1864.8,356.8 1865.6,356.7 1866.3,356.6 1867,356.6" stroke="#d5e6f8" stroke-width="1.1" opacity="0.75"/><path d="M1553 356.5H1906" stroke="#e6b84c" stroke-width="3"/><path d="M1554 344.5H1907" stroke="#ea3641" stroke-width="1.15"/></g><text x="1729.5" y="410.8" font-size="17.8" font-weight="bold" fill="#f6f6f6" text-anchor="middle">Temperature (°C)</text></svg>
<div class="ct" style="left:672px;top:423px;width:414px;height:25px;line-height:24px;padding-left:0px">Tube4</div>
<svg class="abs" style="left:1067px;top:428px" width="14" height="14" viewBox="0 0 14 14"><rect x="0.5" y="0.5" width="13" height="13" fill="#262626" stroke="#4f8fd4"/><g fill="#4f8fd4"><path d="M2.4 2.4h3l-0.9 0.9 1.3 1.3-0.9 0.9-1.3-1.3-1.2 1.2z"/><path d="M2.4 2.4h3l-0.9 0.9 1.3 1.3-0.9 0.9-1.3-1.3-1.2 1.2z" transform="translate(14 0) scale(-1 1)"/><path d="M2.4 2.4h3l-0.9 0.9 1.3 1.3-0.9 0.9-1.3-1.3-1.2 1.2z" transform="translate(0 14) scale(1 -1)"/><path d="M2.4 2.4h3l-0.9 0.9 1.3 1.3-0.9 0.9-1.3-1.3-1.2 1.2z" transform="translate(14 14) scale(-1 -1)"/></g></svg>
<div class="cb" style="left:672px;top:448px;width:414px;height:209px"></div>
<svg class="abs" style="left:672px;top:448px" width="414" height="209" viewBox="672 448 414 209"><path d="M716 590.5H1075" stroke="#4b4b4b" stroke-width="1"/><path d="M716 578.5H1075" stroke="#4b4b4b" stroke-width="1"/><path d="M716 566.5H1075" stroke="#4b4b4b" stroke-width="1"/><path d="M716 555.5H1075" stroke="#4b4b4b" stroke-width="1"/><path d="M716 543.5H1075" stroke="#4b4b4b" stroke-width="1"/><path d="M716 531.5H1075" stroke="#4b4b4b" stroke-width="1"/><path d="M716 519.5H1075" stroke="#4b4b4b" stroke-width="1"/><path d="M716 507.5H1075" stroke="#4b4b4b" stroke-width="1"/><path d="M716 495.5H1075" stroke="#4b4b4b" stroke-width="1"/><path d="M716 484.5H1075" stroke="#4b4b4b" stroke-width="1"/><path d="M716 472.5H1075" stroke="#4b4b4b" stroke-width="1"/><path d="M716 460.5H1075" stroke="#4b4b4b" stroke-width="1"/><path d="M716 602.5H721" stroke="#4b4b4b" stroke-width="1"/><text x="710" y="606.0" font-size="11" fill="#f2f2f2" text-anchor="end">-1000</text><path d="M716 578.5H721" stroke="#4b4b4b" stroke-width="1"/><text x="710" y="582.4" font-size="11" fill="#f2f2f2" text-anchor="end">1000</text><path d="M716 555.5H721" stroke="#4b4b4b" stroke-width="1"/><text x="710" y="558.7" font-size="11" fill="#f2f2f2" text-anchor="end">3000</text><path d="M716 531.5H721" stroke="#4b4b4b" stroke-width="1"/><text x="710" y="535.1" font-size="11" fill="#f2f2f2" text-anchor="end">5000</text><path d="M716 507.5H721" stroke="#4b4b4b" stroke-width="1"/><text x="710" y="511.4" font-size="11" fill="#f2f2f2" text-anchor="end">7000</text><path d="M716 484.5H721" stroke="#4b4b4b" stroke-width="1"/><text x="710" y="487.8" font-size="11" fill="#f2f2f2" text-anchor="end">9000</text><path d="M716 460.5H721" stroke="#4b4b4b" stroke-width="1"/><text x="710" y="464.1" font-size="11" fill="#f2f2f2" text-anchor="end">11000</text><path d="M719 599.5H721" stroke="#4b4b4b" stroke-width="1"/><path d="M719 597.5H721" stroke="#4b4b4b" stroke-width="1"/><path d="M719 595.5H721" stroke="#4b4b4b" stroke-width="1"/><path d="M719 592.5H721" stroke="#4b4b4b" stroke-width="1"/><path d="M719 590.5H721" stroke="#4b4b4b" stroke-width="1"/><path d="M719 588.5H721" stroke="#4b4b4b" stroke-width="1"/><path d="M719 585.5H721" stroke="#4b4b4b" stroke-width="1"/><path d="M719 583.5H721" stroke="#4b4b4b" stroke-width="1"/><path d="M719 581.5H721" stroke="#4b4b4b" stroke-width="1"/><path d="M719 578.5H721" stroke="#4b4b4b" stroke-width="1"/><path d="M719 576.5H721" stroke="#4b4b4b" stroke-width="1"/><path d="M719 573.5H721" stroke="#4b4b4b" stroke-width="1"/><path d="M719 571.5H721" stroke="#4b4b4b" stroke-width="1"/><path d="M719 569.5H721" stroke="#4b4b4b" stroke-width="1"/><path d="M719 566.5H721" stroke="#4b4b4b" stroke-width="1"/><path d="M719 564.5H721" stroke="#4b4b4b" stroke-width="1"/><path d="M719 562.5H721" stroke="#4b4b4b" stroke-width="1"/><path d="M719 559.5H721" stroke="#4b4b4b" stroke-width="1"/><path d="M719 557.5H721" stroke="#4b4b4b" stroke-width="1"/><path d="M719 555.5H721" stroke="#4b4b4b" stroke-width="1"/><path d="M719 552.5H721" stroke="#4b4b4b" stroke-width="1"/><path d="M719 550.5H721" stroke="#4b4b4b" stroke-width="1"/><path d="M719 547.5H721" stroke="#4b4b4b" stroke-width="1"/><path d="M719 545.5H721" stroke="#4b4b4b" stroke-width="1"/><path d="M719 543.5H721" stroke="#4b4b4b" stroke-width="1"/><path d="M719 540.5H721" stroke="#4b4b4b" stroke-width="1"/><path d="M719 538.5H721" stroke="#4b4b4b" stroke-width="1"/><path d="M719 536.5H721" stroke="#4b4b4b" stroke-width="1"/><path d="M719 533.5H721" stroke="#4b4b4b" stroke-width="1"/><path d="M719 531.5H721" stroke="#4b4b4b" stroke-width="1"/><path d="M719 529.5H721" stroke="#4b4b4b" stroke-width="1"/><path d="M719 526.5H721" stroke="#4b4b4b" stroke-width="1"/><path d="M719 524.5H721" stroke="#4b4b4b" stroke-width="1"/><path d="M719 521.5H721" stroke="#4b4b4b" stroke-width="1"/><path d="M719 519.5H721" stroke="#4b4b4b" stroke-width="1"/><path d="M719 517.5H721" stroke="#4b4b4b" stroke-width="1"/><path d="M719 514.5H721" stroke="#4b4b4b" stroke-width="1"/><path d="M719 512.5H721" stroke="#4b4b4b" stroke-width="1"/><path d="M719 510.5H721" stroke="#4b4b4b" stroke-width="1"/><path d="M719 507.5H721" stroke="#4b4b4b" stroke-width="1"/><path d="M719 505.5H721" stroke="#4b4b4b" stroke-width="1"/><path d="M719 502.5H721" stroke="#4b4b4b" stroke-width="1"/><path d="M719 500.5H721" stroke="#4b4b4b" stroke-width="1"/><path d="M719 498.5H721" stroke="#4b4b4b" stroke-width="1"/><path d="M719 495.5H721" stroke="#4b4b4b" stroke-width="1"/><path d="M719 493.5H721" stroke="#4b4b4b" stroke-width="1"/><path d="M719 491.5H721" stroke="#4b4b4b" stroke-width="1"/><path d="M719 488.5H721" stroke="#4b4b4b" stroke-width="1"/><path d="M719 486.5H721" stroke="#4b4b4b" stroke-width="1"/><path d="M719 484.5H721" stroke="#4b4b4b" stroke-width="1"/><path d="M719 481.5H721" stroke="#4b4b4b" stroke-width="1"/><path d="M719 479.5H721" stroke="#4b4b4b" stroke-width="1"/><path d="M719 476.5H721" stroke="#4b4b4b" stroke-width="1"/><path d="M719 474.5H721" stroke="#4b4b4b" stroke-width="1"/><path d="M719 472.5H721" stroke="#4b4b4b" stroke-width="1"/><path d="M719 469.5H721" stroke="#4b4b4b" stroke-width="1"/><path d="M719 467.5H721" stroke="#4b4b4b" stroke-width="1"/><path d="M719 465.5H721" stroke="#4b4b4b" stroke-width="1"/><path d="M719 462.5H721" stroke="#4b4b4b" stroke-width="1"/><path d="M719 460.5H721" stroke="#4b4b4b" stroke-width="1"/><path d="M721.5 460V607" stroke="#4b4b4b" stroke-width="1"/><text x="720.7" y="621.5" font-size="11" fill="#f2f2f2" text-anchor="middle">70</text><path d="M792.5 460V607" stroke="#4b4b4b" stroke-width="1"/><text x="791.3" y="621.5" font-size="11" fill="#f2f2f2" text-anchor="middle">75</text><path d="M862.5 460V607" stroke="#4b4b4b" stroke-width="1"/><text x="861.9" y="621.5" font-size="11" fill="#f2f2f2" text-anchor="middle">80</text><path d="M933.5 460V607" stroke="#4b4b4b" stroke-width="1"/><text x="932.5" y="621.5" font-size="11" fill="#f2f2f2" text-anchor="middle">85</text><path d="M1003.5 460V607" stroke="#4b4b4b" stroke-width="1"/><text x="1003.1" y="621.5" font-size="11" fill="#f2f2f2" text-anchor="middle">90</text><path d="M1074.5 460V607" stroke="#4b4b4b" stroke-width="1"/><text x="1072.1" y="621.5" font-size="11" fill="#f2f2f2" text-anchor="middle">95</text><path d="M721.5 602V604.5" stroke="#4b4b4b" stroke-width="1"/><path d="M735.5 602V604.5" stroke="#4b4b4b" stroke-width="1"/><path d="M749.5 602V604.5" stroke="#4b4b4b" stroke-width="1"/><path d="M763.5 602V604.5" stroke="#4b4b4b" stroke-width="1"/><path d="M777.5 602V604.5" stroke="#4b4b4b" stroke-width="1"/><path d="M792.5 602V604.5" stroke="#4b4b4b" stroke-width="1"/><path d="M806.5 602V604.5" stroke="#4b4b4b" stroke-width="1"/><path d="M820.5 602V604.5" stroke="#4b4b4b" stroke-width="1"/><path d="M834.5 602V604.5" stroke="#4b4b4b" stroke-width="1"/><path d="M848.5 602V604.5" stroke="#4b4b4b" stroke-width="1"/><path d="M862.5 602V604.5" stroke="#4b4b4b" stroke-width="1"/><path d="M876.5 602V604.5" stroke="#4b4b4b" stroke-width="1"/><path d="M890.5 602V604.5" stroke="#4b4b4b" stroke-width="1"/><path d="M905.5 602V604.5" stroke="#4b4b4b" stroke-width="1"/><path d="M919.5 602V604.5" stroke="#4b4b4b" stroke-width="1"/><path d="M933.5 602V604.5" stroke="#4b4b4b" stroke-width="1"/><path d="M947.5 602V604.5" stroke="#4b4b4b" stroke-width="1"/><path d="M961.5 602V604.5" stroke="#4b4b4b" stroke-width="1"/><path d="M975.5 602V604.5" stroke="#4b4b4b" stroke-width="1"/><path d="M989.5 602V604.5" stroke="#4b4b4b" stroke-width="1"/><path d="M1003.5 602V604.5" stroke="#4b4b4b" stroke-width="1"/><path d="M1018.5 602V604.5" stroke="#4b4b4b" stroke-width="1"/><path d="M1032.5 602V604.5" stroke="#4b4b4b" stroke-width="1"/><path d="M1046.5 602V604.5" stroke="#4b4b4b" stroke-width="1"/><path d="M1060.5 602V604.5" stroke="#4b4b4b" stroke-width="1"/><path d="M1074.5 602V604.5" stroke="#4b4b4b" stroke-width="1"/><path d="M721 460.5H1075M721 602.5H1075" stroke="#4b4b4b" stroke-width="1"/><clipPath id="cpTube4"><rect x="722" y="460" width="353" height="142"/></clipPath><g clip-path="url(#cpTube4)" fill="none" stroke-linejoin="round"><path d="M804.8,590.6 805.5,590.6 806.2,590.7 806.9,590.8 807.6,590.9 808.3,591.1 809,591.3 809.8,591.5 810.5,591.8 811.2,592.1 811.9,592.4 812.6,592.7 813.3,593 814,593.2 814.7,593.4 815.4,593.5 816.1,593.5 816.8,593.4 817.5,593.3 818.2,593 818.9,592.7 819.6,592.3 820.3,591.8 821,591.3 821.8,590.7 822.5,590.1 823.2,589.4 823.9,588.7 824.6,587.9 825.3,587 826,586 826.7,584.9 827.4,583.7 828.1,582.4 828.8,581.1 829.5,579.8 830.2,578.4 830.9,577.1 831.6,575.9 832.3,574.8 833,574 833.8,573.3 834.5,572.9 835.2,572.8 835.9,572.9 836.6,573.3 837.3,574 838,574.8 838.7,575.9 839.4,577.1 840.1,578.4 840.8,579.8 841.5,581.1 842.2,582.4 842.9,583.7 843.6,584.9 844.3,586 845,587 845.8,587.9 846.5,588.7 847.2,589.4 847.9,590.1 848.6,590.7 849.3,591.3 850,591.8 850.7,592.3 851.4,592.7 852.1,593 852.8,593.3 853.5,593.4 854.2,593.5 854.9,593.5 855.6,593.4 856.3,593.2 857.1,593 857.8,592.7 858.5,592.4 859.2,592.1 859.9,591.8 860.6,591.5 861.3,591.3 862,591.1 862.7,590.9 863.4,590.8 864.1,590.7 864.8,590.6 865.5,590.6M888.8,590.4 889.5,590.3 890.2,590 890.9,589.4 891.6,588.2 892.4,586.2 893.1,583.2 893.8,579.1 894.5,574.5 895.2,570.1 895.9,566.9 896.6,565.7 897.3,566.4 898,568.6 898.7,571.8 899.4,575.4 900.1,579.1 900.8,582.4 901.5,585.1 902.2,587.1 902.9,588.5 903.6,589.4 904.4,589.9 905.1,590.2 905.8,590.4 906.5,590.4M943.9,590.6 944.6,590.6 945.3,590.7 946,590.7 946.7,590.9 947.4,591 948.1,591.2 948.8,591.5 949.5,591.8 950.2,592.2 951,592.6 951.7,593.1 952.4,593.6 953.1,594.2 953.8,594.6 954.5,595 955.2,595.3 955.9,595.5 956.6,595.6 957.3,595.5 958,595.2 958.7,594.9 959.4,594.4 960.1,593.7 960.8,592.8 961.5,591.6 962.2,589.9 963,587.5 963.7,584.1 964.4,579.4 965.1,573.1 965.8,565.1 966.5,555.8 967.2,545.6 967.9,535.4 968.6,526.5 969.3,519.9 970,516.6 970.7,518.1 971.4,527.8 972.1,542.9 972.8,559 973.5,572.6 974.2,582.2 975,588.1 975.7,591.4 976.4,593.1 977.1,594.1 977.8,594.7 978.5,595.1 979.2,595.4 979.9,595.6 980.6,595.6 981.3,595.5 982,595.2 982.7,594.8 983.4,594.4 984.1,593.9 984.8,593.4 985.5,592.9 986.2,592.4 987,592 987.7,591.6 988.4,591.3 989.1,591.1 989.8,590.9 990.5,590.8 991.2,590.7 991.9,590.6 992.6,590.6" stroke="#d5e6f8" stroke-width="1.6"/><path d="M818.2,590.6 818.9,590.6 819.6,590.7 820.3,590.8 821,590.9 821.8,591.1 822.5,591.3 823.2,591.6 823.9,592 824.6,592.4 825.3,592.8 826,593.3 826.7,593.8 827.4,594.3 828.1,594.8 828.8,595.2 829.5,595.4 830.2,595.6 830.9,595.5 831.6,595.4 832.3,595.1 833,594.6 833.8,594 834.5,593.1 835.2,592 835.9,590.5 836.6,588.3 837.3,585.2 838,581 838.7,575.1 839.4,567.4 840.1,557.7 840.8,546 841.5,532.6 842.2,518.2 842.9,503.9 843.6,490.9 844.3,480.5 845,473.7 845.8,471.5 846.5,480.2 847.2,502.4 847.9,530.2 848.6,555.3 849.3,573.5 850,584.5 850.7,590.1 851.4,592.7 852.1,594 852.8,594.7 853.5,595.1 854.2,595.4 854.9,595.6 855.6,595.6 856.3,595.4 857.1,595.2 857.8,594.8 858.5,594.4 859.2,593.9 859.9,593.4 860.6,592.9 861.3,592.4 862,592 862.7,591.6 863.4,591.3 864.1,591.1 864.8,590.9 865.5,590.8 866.2,590.7 866.9,590.6 867.6,590.6M874.7,590.6 875.4,590.6 876.1,590.7 876.8,590.8 877.5,590.9 878.2,591.1 878.9,591.3 879.6,591.6 880.4,592 881.1,592.4 881.8,592.9 882.5,593.4 883.2,593.9 883.9,594.4 884.6,594.8 885.3,595.2 886,595.4 886.7,595.6 887.4,595.6 888.1,595.4 888.8,595.1 889.5,594.7 890.2,594.1 890.9,593.1 891.6,591.3 892.4,587.6 893.1,580.6 893.8,569.1 894.5,553.3 895.2,535.9 895.9,521.9 896.6,516.4 897.3,518.6 898,525.1 898.7,534.6 899.4,545.7 900.1,556.9 900.8,567 901.5,575.3 902.2,581.6 902.9,586.1 903.6,589.2 904.4,591.3 905.1,592.7 905.8,593.6 906.5,594.3 907.2,594.8 907.9,595.2 908.6,595.5 909.3,595.6 910,595.5 910.7,595.4 911.4,595.1 912.1,594.7 912.8,594.2 913.5,593.7 914.2,593.2 914.9,592.7 915.6,592.2 916.4,591.8 917.1,591.5 917.8,591.2 918.5,591 919.2,590.9 919.9,590.7 920.6,590.7 921.3,590.6 922,590.6" stroke="#e6b84c" stroke-width="2.0"/><path d="M874.7,590.6 875.4,590.6 876.1,590.7 876.8,590.8 877.5,590.9 878.2,591.1 878.9,591.3 879.6,591.5 880.4,591.9 881.1,592.3 881.8,592.7 882.5,593.2 883.2,593.6 883.9,594.1 884.6,594.5 885.3,594.8 886,595.1 886.7,595.2 887.4,595.2 888.1,595 888.8,594.8 889.5,594.4 890.2,593.8 890.9,593 891.6,591.3 892.4,588.1 893.1,582 893.8,571.9 894.5,558.1 895.2,542.9 895.9,530.6 896.6,525.8 897.3,527.4 898,532.1 898.7,539.2 899.4,547.7 900.1,556.7 900.8,565.2 901.5,572.7 902.2,578.8 902.9,583.5 903.6,586.9 904.4,589.4 905.1,591.1 905.8,592.3 906.5,593.2 907.2,593.8 907.9,594.4 908.6,594.8 909.3,595 910,595.2 910.7,595.2 911.4,595.1 912.1,594.8 912.8,594.5 913.5,594.1 914.2,593.6 914.9,593.1 915.6,592.7 916.4,592.2 917.1,591.8 917.8,591.5 918.5,591.3 919.2,591 919.9,590.9 920.6,590.8 921.3,590.7 922,590.6 922.7,590.6" stroke="#e6b84c" stroke-width="2.0"/><path d="M875.4,590.6 876.1,590.6 876.8,590.7 877.5,590.8 878.2,590.9 878.9,591.1 879.6,591.3 880.4,591.6 881.1,591.9 881.8,592.3 882.5,592.7 883.2,593.1 883.9,593.5 884.6,593.9 885.3,594.2 886,594.5 886.7,594.6 887.4,594.7 888.1,594.6 888.8,594.4 889.5,594.1 890.2,593.7 890.9,593.1 891.6,592 892.4,590 893.1,586 893.8,579.1 894.5,568.9 895.2,556.5 895.9,545 896.6,538.3 897.3,538.1 898,540.9 898.7,546 899.4,552.6 900.1,559.9 900.8,567.1 901.5,573.6 902.2,579.1 902.9,583.4 903.6,586.6 904.4,589 905.1,590.6 905.8,591.8 906.5,592.6 907.2,593.3 907.9,593.8 908.6,594.2 909.3,594.4 910,594.6 910.7,594.7 911.4,594.6 912.1,594.4 912.8,594.2 913.5,593.8 914.2,593.4 914.9,593 915.6,592.6 916.4,592.2 917.1,591.8 917.8,591.5 918.5,591.3 919.2,591 919.9,590.9 920.6,590.8 921.3,590.7 922,590.6 922.7,590.6" stroke="#e6b84c" stroke-width="2.0"/><path d="M890.9,590.4 891.6,590.3 892.4,590.1 893.1,589.6 893.8,588.7 894.5,587.3 895.2,585.4 895.9,583.5 896.6,582.1 897.3,581.5 898,581.6 898.7,582 899.4,582.6 900.1,583.3 900.8,584.1 901.5,585 902.2,585.9 902.9,586.8 903.6,587.6 904.4,588.3 905.1,588.8 905.8,589.3 906.5,589.6 907.2,589.9 907.9,590.1 908.6,590.2 909.3,590.3 910,590.4 910.7,590.4M960.8,590.5 961.5,590.3 962.2,589.5 963,587.1 963.7,583.2 964.4,581 965.1,581.1 965.8,581.3 966.5,581.7 967.2,582.2 967.9,582.7 968.6,583.4 969.3,584 970,584.8 970.7,585.5 971.4,586.2 972.1,586.8 972.8,587.4 973.5,588 974.2,588.5 975,588.9 975.7,589.2 976.4,589.5 977.1,589.7 977.8,589.9 978.5,590.1 979.2,590.2 979.9,590.3 980.6,590.3 981.3,590.4 982,590.4M1004.6,590.4 1005.3,590.3 1006,590 1006.7,589.3 1007.4,588.3 1008.1,586.7 1008.8,585 1009.5,583.7 1010.3,583.2 1011,583.4 1011.7,583.9 1012.4,584.7 1013.1,585.7 1013.8,586.7 1014.5,587.6 1015.2,588.4 1015.9,589.1 1016.6,589.6 1017.3,589.9 1018,590.2 1018.7,590.3 1019.4,590.4" stroke="#e6b84c" stroke-width="2.0"/><path d="M804.8,590.6 805.5,590.6 806.2,590.7 806.9,590.8 807.6,590.9 808.3,591.1 809,591.3 809.8,591.5 810.5,591.8 811.2,592.1 811.9,592.4 812.6,592.7 813.3,593 814,593.2 814.7,593.4 815.4,593.5 816.1,593.5 816.8,593.4 817.5,593.3 818.2,593 818.9,592.7 819.6,592.3 820.3,591.8 821,591.3 821.8,590.7 822.5,590.1 823.2,589.4 823.9,588.7 824.6,587.9 825.3,587 826,586 826.7,584.9 827.4,583.7 828.1,582.4 828.8,581.1 829.5,579.8 830.2,578.4 830.9,577.1 831.6,575.9 832.3,574.8 833,574 833.8,573.3 834.5,572.9 835.2,572.8 835.9,572.9 836.6,573.3 837.3,574 838,574.8 838.7,575.9 839.4,577.1 840.1,578.4 840.8,579.8 841.5,581.1 842.2,582.4 842.9,583.7 843.6,584.9 844.3,586 845,587 845.8,587.9 846.5,588.7 847.2,589.4 847.9,590.1 848.6,590.7 849.3,591.3 850,591.8 850.7,592.3 851.4,592.7 852.1,593 852.8,593.3 853.5,593.4 854.2,593.5 854.9,593.5 855.6,593.4 856.3,593.2 857.1,593 857.8,592.7 858.5,592.4 859.2,592.1 859.9,591.8 860.6,591.5 861.3,591.3 862,591.1 862.7,590.9 863.4,590.8 864.1,590.7 864.8,590.6 865.5,590.6M888.8,590.4 889.5,590.3 890.2,590 890.9,589.4 891.6,588.2 892.4,586.2 893.1,583.2 893.8,579.1 894.5,574.5 895.2,570.1 895.9,566.9 896.6,565.7 897.3,566.4 898,568.6 898.7,571.8 899.4,575.4 900.1,579.1 900.8,582.4 901.5,585.1 902.2,587.1 902.9,588.5 903.6,589.4 904.4,589.9 905.1,590.2 905.8,590.4 906.5,590.4M943.9,590.6 944.6,590.6 945.3,590.7 946,590.7 946.7,590.9 947.4,591 948.1,591.2 948.8,591.5 949.5,591.8 950.2,592.2 951,592.6 951.7,593.1 952.4,593.6 953.1,594.2 953.8,594.6 954.5,595 955.2,595.3 955.9,595.5 956.6,595.6 957.3,595.5 958,595.2 958.7,594.9 959.4,594.4 960.1,593.7 960.8,592.8 961.5,591.6 962.2,589.9 963,587.5 963.7,584.1 964.4,579.4 965.1,573.1 965.8,565.1 966.5,555.8 967.2,545.6 967.9,535.4 968.6,526.5 969.3,519.9 970,516.6 970.7,518.1 971.4,527.8 972.1,542.9 972.8,559 973.5,572.6 974.2,582.2 975,588.1 975.7,591.4 976.4,593.1 977.1,594.1 977.8,594.7 978.5,595.1 979.2,595.4 979.9,595.6 980.6,595.6 981.3,595.5 982,595.2 982.7,594.8 983.4,594.4 984.1,593.9 984.8,593.4 985.5,592.9 986.2,592.4 987,592 987.7,591.6 988.4,591.3 989.1,591.1 989.8,590.9 990.5,590.8 991.2,590.7 991.9,590.6 992.6,590.6" stroke="#d5e6f8" stroke-width="1.1" opacity="0.75"/><path d="M721 590.5H1074" stroke="#e6b84c" stroke-width="3"/><path d="M722 578.5H1075" stroke="#ea3641" stroke-width="1.15"/></g><text x="897.5" y="644.8" font-size="17.8" font-weight="bold" fill="#f6f6f6" text-anchor="middle">Temperature (°C)</text></svg>
<div class="ct" style="left:1088px;top:423px;width:414px;height:25px;line-height:24px;padding-left:0px">Tube5</div>
<svg class="abs" style="left:1483px;top:428px" width="14" height="14" viewBox="0 0 14 14"><rect x="0.5" y="0.5" width="13" height="13" fill="#262626" stroke="#4f8fd4"/><g fill="#4f8fd4"><path d="M2.4 2.4h3l-0.9 0.9 1.3 1.3-0.9 0.9-1.3-1.3-1.2 1.2z"/><path d="M2.4 2.4h3l-0.9 0.9 1.3 1.3-0.9 0.9-1.3-1.3-1.2 1.2z" transform="translate(14 0) scale(-1 1)"/><path d="M2.4 2.4h3l-0.9 0.9 1.3 1.3-0.9 0.9-1.3-1.3-1.2 1.2z" transform="translate(0 14) scale(1 -1)"/><path d="M2.4 2.4h3l-0.9 0.9 1.3 1.3-0.9 0.9-1.3-1.3-1.2 1.2z" transform="translate(14 14) scale(-1 -1)"/></g></svg>
<div class="cb" style="left:1088px;top:448px;width:414px;height:209px"></div>
<svg class="abs" style="left:1088px;top:448px" width="414" height="209" viewBox="1088 448 414 209"><path d="M1126 590.5H1491" stroke="#4b4b4b" stroke-width="1"/><path d="M1126 571.5H1491" stroke="#4b4b4b" stroke-width="1"/><path d="M1126 553.5H1491" stroke="#4b4b4b" stroke-width="1"/><path d="M1126 534.5H1491" stroke="#4b4b4b" stroke-width="1"/><path d="M1126 516.5H1491" stroke="#4b4b4b" stroke-width="1"/><path d="M1126 497.5H1491" stroke="#4b4b4b" stroke-width="1"/><path d="M1126 479.5H1491" stroke="#4b4b4b" stroke-width="1"/><path d="M1126 460.5H1491" stroke="#4b4b4b" stroke-width="1"/><path d="M1126 590.5H1131" stroke="#4b4b4b" stroke-width="1"/><text x="1120" y="594.2" font-size="11" fill="#f2f2f2" text-anchor="end">0</text><path d="M1126 553.5H1131" stroke="#4b4b4b" stroke-width="1"/><text x="1120" y="557.1" font-size="11" fill="#f2f2f2" text-anchor="end">2000</text><path d="M1126 516.5H1131" stroke="#4b4b4b" stroke-width="1"/><text x="1120" y="520.0" font-size="11" fill="#f2f2f2" text-anchor="end">4000</text><path d="M1126 479.5H1131" stroke="#4b4b4b" stroke-width="1"/><text x="1120" y="482.9" font-size="11" fill="#f2f2f2" text-anchor="end">6000</text><path d="M1129 601.5H1131" stroke="#4b4b4b" stroke-width="1"/><path d="M1129 597.5H1131" stroke="#4b4b4b" stroke-width="1"/><path d="M1129 594.5H1131" stroke="#4b4b4b" stroke-width="1"/><path d="M1129 590.5H1131" stroke="#4b4b4b" stroke-width="1"/><path d="M1129 586.5H1131" stroke="#4b4b4b" stroke-width="1"/><path d="M1129 583.5H1131" stroke="#4b4b4b" stroke-width="1"/><path d="M1129 579.5H1131" stroke="#4b4b4b" stroke-width="1"/><path d="M1129 575.5H1131" stroke="#4b4b4b" stroke-width="1"/><path d="M1129 571.5H1131" stroke="#4b4b4b" stroke-width="1"/><path d="M1129 568.5H1131" stroke="#4b4b4b" stroke-width="1"/><path d="M1129 564.5H1131" stroke="#4b4b4b" stroke-width="1"/><path d="M1129 560.5H1131" stroke="#4b4b4b" stroke-width="1"/><path d="M1129 557.5H1131" stroke="#4b4b4b" stroke-width="1"/><path d="M1129 553.5H1131" stroke="#4b4b4b" stroke-width="1"/><path d="M1129 549.5H1131" stroke="#4b4b4b" stroke-width="1"/><path d="M1129 545.5H1131" stroke="#4b4b4b" stroke-width="1"/><path d="M1129 542.5H1131" stroke="#4b4b4b" stroke-width="1"/><path d="M1129 538.5H1131" stroke="#4b4b4b" stroke-width="1"/><path d="M1129 534.5H1131" stroke="#4b4b4b" stroke-width="1"/><path d="M1129 531.5H1131" stroke="#4b4b4b" stroke-width="1"/><path d="M1129 527.5H1131" stroke="#4b4b4b" stroke-width="1"/><path d="M1129 523.5H1131" stroke="#4b4b4b" stroke-width="1"/><path d="M1129 520.5H1131" stroke="#4b4b4b" stroke-width="1"/><path d="M1129 516.5H1131" stroke="#4b4b4b" stroke-width="1"/><path d="M1129 512.5H1131" stroke="#4b4b4b" stroke-width="1"/><path d="M1129 508.5H1131" stroke="#4b4b4b" stroke-width="1"/><path d="M1129 505.5H1131" stroke="#4b4b4b" stroke-width="1"/><path d="M1129 501.5H1131" stroke="#4b4b4b" stroke-width="1"/><path d="M1129 497.5H1131" stroke="#4b4b4b" stroke-width="1"/><path d="M1129 494.5H1131" stroke="#4b4b4b" stroke-width="1"/><path d="M1129 490.5H1131" stroke="#4b4b4b" stroke-width="1"/><path d="M1129 486.5H1131" stroke="#4b4b4b" stroke-width="1"/><path d="M1129 482.5H1131" stroke="#4b4b4b" stroke-width="1"/><path d="M1129 479.5H1131" stroke="#4b4b4b" stroke-width="1"/><path d="M1129 475.5H1131" stroke="#4b4b4b" stroke-width="1"/><path d="M1129 471.5H1131" stroke="#4b4b4b" stroke-width="1"/><path d="M1129 468.5H1131" stroke="#4b4b4b" stroke-width="1"/><path d="M1129 464.5H1131" stroke="#4b4b4b" stroke-width="1"/><path d="M1129 460.5H1131" stroke="#4b4b4b" stroke-width="1"/><path d="M1131.5 460V607" stroke="#4b4b4b" stroke-width="1"/><text x="1130.7" y="621.5" font-size="11" fill="#f2f2f2" text-anchor="middle">70</text><path d="M1203.5 460V607" stroke="#4b4b4b" stroke-width="1"/><text x="1202.5" y="621.5" font-size="11" fill="#f2f2f2" text-anchor="middle">75</text><path d="M1275.5 460V607" stroke="#4b4b4b" stroke-width="1"/><text x="1274.3" y="621.5" font-size="11" fill="#f2f2f2" text-anchor="middle">80</text><path d="M1346.5 460V607" stroke="#4b4b4b" stroke-width="1"/><text x="1346.1" y="621.5" font-size="11" fill="#f2f2f2" text-anchor="middle">85</text><path d="M1418.5 460V607" stroke="#4b4b4b" stroke-width="1"/><text x="1417.9" y="621.5" font-size="11" fill="#f2f2f2" text-anchor="middle">90</text><path d="M1490.5 460V607" stroke="#4b4b4b" stroke-width="1"/><text x="1488.1" y="621.5" font-size="11" fill="#f2f2f2" text-anchor="middle">95</text><path d="M1131.5 602V604.5" stroke="#4b4b4b" stroke-width="1"/><path d="M1145.5 602V604.5" stroke="#4b4b4b" stroke-width="1"/><path d="M1160.5 602V604.5" stroke="#4b4b4b" stroke-width="1"/><path d="M1174.5 602V604.5" stroke="#4b4b4b" stroke-width="1"/><path d="M1188.5 602V604.5" stroke="#4b4b4b" stroke-width="1"/><path d="M1203.5 602V604.5" stroke="#4b4b4b" stroke-width="1"/><path d="M1217.5 602V604.5" stroke="#4b4b4b" stroke-width="1"/><path d="M1232.5 602V604.5" stroke="#4b4b4b" stroke-width="1"/><path d="M1246.5 602V604.5" stroke="#4b4b4b" stroke-width="1"/><path d="M1260.5 602V604.5" stroke="#4b4b4b" stroke-width="1"/><path d="M1275.5 602V604.5" stroke="#4b4b4b" stroke-width="1"/><path d="M1289.5 602V604.5" stroke="#4b4b4b" stroke-width="1"/><path d="M1303.5 602V604.5" stroke="#4b4b4b" stroke-width="1"/><path d="M1318.5 602V604.5" stroke="#4b4b4b" stroke-width="1"/><path d="M1332.5 602V604.5" stroke="#4b4b4b" stroke-width="1"/><path d="M1346.5 602V604.5" stroke="#4b4b4b" stroke-width="1"/><path d="M1361.5 602V604.5" stroke="#4b4b4b" stroke-width="1"/><path d="M1375.5 602V604.5" stroke="#4b4b4b" stroke-width="1"/><path d="M1389.5 602V604.5" stroke="#4b4b4b" stroke-width="1"/><path d="M1404.5 602V604.5" stroke="#4b4b4b" stroke-width="1"/><path d="M1418.5 602V604.5" stroke="#4b4b4b" stroke-width="1"/><path d="M1433.5 602V604.5" stroke="#4b4b4b" stroke-width="1"/><path d="M1447.5 602V604.5" stroke="#4b4b4b" stroke-width="1"/><path d="M1461.5 602V604.5" stroke="#4b4b4b" stroke-width="1"/><path d="M1476.5 602V604.5" stroke="#4b4b4b" stroke-width="1"/><path d="M1490.5 602V604.5" stroke="#4b4b4b" stroke-width="1"/><path d="M1131 460.5H1491M1131 602.5H1491" stroke="#4b4b4b" stroke-width="1"/><clipPath id="cpTube5"><rect x="1132" y="460" width="359" height="142"/></clipPath><g clip-path="url(#cpTube5)" fill="none" stroke-linejoin="round"><path d="M1321.1,590.4 1321.8,590.1 1322.5,589.3 1323.2,587.4 1323.9,583.8 1324.6,578.2 1325.4,571.5 1326.1,565.8 1326.8,563.6 1327.5,565.8 1328.2,571.5 1329,578.2 1329.7,583.8 1330.4,587.4 1331.1,589.3 1331.8,590.1 1332.5,590.4M1359.1,590.4 1359.8,590.3 1360.5,590.1 1361.3,589.9 1362,589.6 1362.7,589.1 1363.4,588.4 1364.1,587.5 1364.8,586.4 1365.6,584.9 1366.3,583.2 1367,581.1 1367.7,578.8 1368.4,576.3 1369.2,573.8 1369.9,571.4 1370.6,569.2 1371.3,567.4 1372,566.1 1372.7,565.5 1373.5,567.7 1374.2,577.5 1374.9,586 1375.6,589.6 1376.3,590.4" stroke="#d5e6f8" stroke-width="1.6"/><path d="M1200.4,590.6 1201.1,590.7 1201.9,590.8 1202.6,591 1203.3,591.2 1204,591.5 1204.7,591.9 1205.5,592.4 1206.2,593 1206.9,593.7 1207.6,594.5 1208.3,595.3 1209,596.1 1209.8,596.8 1210.5,597.5 1211.2,598 1211.9,598.3 1212.6,598.5 1213.4,598.4 1214.1,598.1 1214.8,597.6 1215.5,596.8 1216.2,595.7 1216.9,594.1 1217.7,591.2 1218.4,585.9 1219.1,576.8 1219.8,562.5 1220.5,542.5 1221.2,518.6 1222,494.9 1222.7,477.2 1223.4,470.6 1224.1,476.3 1224.8,492.1 1225.6,513.8 1226.3,536.6 1227,556.7 1227.7,572 1228.4,582.4 1229.1,588.8 1229.9,592.6 1230.6,594.8 1231.3,596.1 1232,597.1 1232.7,597.8 1233.5,598.2 1234.2,598.4 1234.9,598.5 1235.6,598.2 1236.3,597.8 1237,597.3 1237.8,596.6 1238.5,595.8 1239.2,595 1239.9,594.2 1240.6,593.5 1241.4,592.8 1242.1,592.3 1242.8,591.8 1243.5,591.4 1244.2,591.1 1244.9,590.9 1245.7,590.8 1246.4,590.7 1247.1,590.6M1355.5,590.6 1356.2,590.7 1357,590.8 1357.7,591 1358.4,591.2 1359.1,591.4 1359.8,591.8 1360.5,592.2 1361.3,592.7 1362,593.2 1362.7,593.8 1363.4,594.5 1364.1,595.1 1364.8,595.6 1365.6,596.1 1366.3,596.4 1367,596.6 1367.7,596.6 1368.4,596.4 1369.2,596 1369.9,595.6 1370.6,594.9 1371.3,594.2 1372,593.4 1372.7,592.5 1373.5,591.6 1374.2,590.6 1374.9,589.5 1375.6,588.2 1376.3,586.8 1377.1,585.1 1377.8,583.1 1378.5,580.7 1379.2,577.9 1379.9,574.5 1380.6,570.7 1381.4,566.4 1382.1,561.7 1382.8,556.5 1383.5,551.1 1384.2,545.5 1385,539.9 1385.7,534.5 1386.4,529.5 1387.1,525 1387.8,521.3 1388.5,518.6 1389.3,516.9 1390,516.3 1390.7,517.1 1391.4,519.3 1392.1,522.8 1392.9,527.5 1393.6,533 1394.3,539.1 1395,545.5 1395.7,551.9 1396.4,558.1 1397.2,563.8 1397.9,569 1398.6,573.6 1399.3,577.5 1400,580.8 1400.8,583.6 1401.5,585.9 1402.2,587.7 1402.9,589.3 1403.6,590.6 1404.3,591.7 1405.1,592.7 1405.8,593.6 1406.5,594.4 1407.2,595.1 1407.9,595.7 1408.6,596.2 1409.4,596.5 1410.1,596.6 1410.8,596.5 1411.5,596.3 1412.2,595.9 1413,595.5 1413.7,594.9 1414.4,594.3 1415.1,593.7 1415.8,593.1 1416.5,592.5 1417.3,592.1 1418,591.7 1418.7,591.4 1419.4,591.1 1420.1,590.9 1420.9,590.8 1421.6,590.7 1422.3,590.6" stroke="#e6b84c" stroke-width="2.0"/><path d="M1200.4,590.6 1201.1,590.7 1201.9,590.8 1202.6,591 1203.3,591.2 1204,591.5 1204.7,591.8 1205.5,592.3 1206.2,592.8 1206.9,593.5 1207.6,594.2 1208.3,594.9 1209,595.6 1209.8,596.3 1210.5,597 1211.2,597.4 1211.9,597.8 1212.6,597.9 1213.4,597.8 1214.1,597.5 1214.8,597 1215.5,596.3 1216.2,595.4 1216.9,593.9 1217.7,591.4 1218.4,586.9 1219.1,579.1 1219.8,567 1220.5,550 1221.2,529.7 1222,509.6 1222.7,494.5 1223.4,488.9 1224.1,492 1224.8,500.8 1225.6,513.9 1226.3,529.1 1227,544.5 1227.7,558.3 1228.4,569.7 1229.1,578.4 1229.9,584.7 1230.6,588.9 1231.3,591.8 1232,593.7 1232.7,595 1233.5,596 1234.2,596.8 1234.9,597.4 1235.6,597.7 1236.3,597.9 1237,597.8 1237.8,597.5 1238.5,597.1 1239.2,596.5 1239.9,595.9 1240.6,595.1 1241.4,594.4 1242.1,593.7 1242.8,593 1243.5,592.4 1244.2,592 1244.9,591.6 1245.7,591.3 1246.4,591 1247.1,590.9 1247.8,590.7 1248.5,590.6M1374.2,590.6 1374.9,590.7 1375.6,590.7 1376.3,590.9 1377.1,591 1377.8,591.3 1378.5,591.6 1379.2,591.9 1379.9,592.4 1380.6,592.9 1381.4,593.5 1382.1,594.1 1382.8,594.8 1383.5,595.4 1384.2,596 1385,596.5 1385.7,596.8 1386.4,596.9 1387.1,596.9 1387.8,596.7 1388.5,596.4 1389.3,595.9 1390,595.1 1390.7,594 1391.4,591.9 1392.1,587.7 1392.9,580 1393.6,567.3 1394.3,550 1395,530.9 1395.7,515.6 1396.4,509.6 1397.2,513.4 1397.9,524.1 1398.6,538.8 1399.3,554.2 1400,567.8 1400.8,578.3 1401.5,585.4 1402.2,589.8 1402.9,592.5 1403.6,594.1 1404.3,595.1 1405.1,595.8 1405.8,596.4 1406.5,596.7 1407.2,596.9 1407.9,596.9 1408.6,596.8 1409.4,596.4 1410.1,596 1410.8,595.4 1411.5,594.8 1412.2,594.1 1413,593.5 1413.7,592.9 1414.4,592.4 1415.1,591.9 1415.8,591.5 1416.5,591.3 1417.3,591 1418,590.9 1418.7,590.7 1419.4,590.7 1420.1,590.6" stroke="#e6b84c" stroke-width="2.0"/><path d="M1200.4,590.6 1201.1,590.7 1201.9,590.8 1202.6,591 1203.3,591.2 1204,591.4 1204.7,591.8 1205.5,592.2 1206.2,592.7 1206.9,593.3 1207.6,594 1208.3,594.6 1209,595.3 1209.8,595.9 1210.5,596.4 1211.2,596.8 1211.9,597.1 1212.6,597.1 1213.4,597 1214.1,596.7 1214.8,596.2 1215.5,595.6 1216.2,594.6 1216.9,593.3 1217.7,591 1218.4,587.2 1219.1,581 1219.8,571.5 1220.5,558.5 1221.2,542.8 1222,526.7 1222.7,513.4 1223.4,506.1 1224.1,506.2 1224.8,510.8 1225.6,519 1226.3,529.7 1227,541.4 1227.7,553 1228.4,563.5 1229.1,572.2 1229.9,579.1 1230.6,584.3 1231.3,588 1232,590.6 1232.7,592.5 1233.5,593.9 1234.2,594.9 1234.9,595.7 1235.6,596.3 1236.3,596.8 1237,597 1237.8,597.1 1238.5,597 1239.2,596.7 1239.9,596.3 1240.6,595.8 1241.4,595.1 1242.1,594.5 1242.8,593.8 1243.5,593.2 1244.2,592.6 1244.9,592.1 1245.7,591.7 1246.4,591.4 1247.1,591.1 1247.8,590.9 1248.5,590.8 1249.3,590.7 1250,590.6M1373.5,590.6 1374.2,590.7 1374.9,590.8 1375.6,590.9 1376.3,591.1 1377.1,591.3 1377.8,591.6 1378.5,592 1379.2,592.4 1379.9,593 1380.6,593.5 1381.4,594.2 1382.1,594.8 1382.8,595.3 1383.5,595.9 1384.2,596.3 1385,596.5 1385.7,596.6 1386.4,596.6 1387.1,596.3 1387.8,595.9 1388.5,595.4 1389.3,594.6 1390,593.5 1390.7,591.5 1391.4,588.2 1392.1,582.5 1392.9,573.6 1393.6,561.2 1394.3,546.4 1395,531.7 1395.7,520.8 1396.4,516.6 1397.2,518.9 1397.9,525.3 1398.6,534.8 1399.3,545.9 1400,557.1 1400.8,567.2 1401.5,575.5 1402.2,581.9 1402.9,586.5 1403.6,589.6 1404.3,591.8 1405.1,593.3 1405.8,594.3 1406.5,595.1 1407.2,595.7 1407.9,596.2 1408.6,596.5 1409.4,596.6 1410.1,596.6 1410.8,596.4 1411.5,596 1412.2,595.5 1413,594.9 1413.7,594.3 1414.4,593.7 1415.1,593.1 1415.8,592.6 1416.5,592.1 1417.3,591.7 1418,591.4 1418.7,591.1 1419.4,590.9 1420.1,590.8 1420.9,590.7 1421.6,590.6" stroke="#e6b84c" stroke-width="2.0"/><path d="M1184.6,590.6 1185.3,590.7 1186.1,590.7 1186.8,590.9 1187.5,591 1188.2,591.3 1188.9,591.6 1189.7,591.9 1190.4,592.4 1191.1,592.9 1191.8,593.5 1192.5,594.1 1193.2,594.7 1194,595.3 1194.7,595.8 1195.4,596.2 1196.1,596.5 1196.8,596.6 1197.6,596.5 1198.3,596.3 1199,595.9 1199.7,595.4 1200.4,594.7 1201.1,593.9 1201.9,593 1202.6,592.1 1203.3,591 1204,589.8 1204.7,588.5 1205.5,586.8 1206.2,584.9 1206.9,582.5 1207.6,579.6 1208.3,576.2 1209,572.1 1209.8,567.5 1210.5,562.3 1211.2,556.6 1211.9,550.5 1212.6,544.3 1213.4,538.1 1214.1,532.2 1214.8,526.9 1215.5,522.5 1216.2,519.1 1216.9,517 1217.7,516.3 1218.4,516.9 1219.1,518.6 1219.8,521.3 1220.5,525 1221.2,529.5 1222,534.5 1222.7,539.9 1223.4,545.5 1224.1,551.1 1224.8,556.5 1225.6,561.7 1226.3,566.4 1227,570.7 1227.7,574.5 1228.4,577.9 1229.1,580.7 1229.9,583.1 1230.6,585.1 1231.3,586.8 1232,588.2 1232.7,589.5 1233.5,590.6 1234.2,591.6 1234.9,592.5 1235.6,593.4 1236.3,594.2 1237,594.9 1237.8,595.6 1238.5,596 1239.2,596.4 1239.9,596.6 1240.6,596.6 1241.4,596.4 1242.1,596.1 1242.8,595.6 1243.5,595.1 1244.2,594.5 1244.9,593.8 1245.7,593.2 1246.4,592.7 1247.1,592.2 1247.8,591.8 1248.5,591.4 1249.3,591.2 1250,591 1250.7,590.8 1251.4,590.7 1252.1,590.6M1373.5,590.6 1374.2,590.7 1374.9,590.7 1375.6,590.9 1376.3,591 1377.1,591.2 1377.8,591.5 1378.5,591.9 1379.2,592.3 1379.9,592.8 1380.6,593.3 1381.4,593.9 1382.1,594.5 1382.8,595 1383.5,595.5 1384.2,595.9 1385,596.1 1385.7,596.2 1386.4,596.1 1387.1,595.9 1387.8,595.6 1388.5,595 1389.3,594.3 1390,593.3 1390.7,591.6 1391.4,588.6 1392.1,583.6 1392.9,575.8 1393.6,564.9 1394.3,551.9 1395,539.1 1395.7,529.5 1396.4,525.9 1397.2,527.8 1397.9,533.5 1398.6,541.8 1399.3,551.5 1400,561.3 1400.8,570.2 1401.5,577.5 1402.2,583.1 1402.9,587.1 1403.6,589.9 1404.3,591.8 1405.1,593.1 1405.8,594.1 1406.5,594.8 1407.2,595.4 1407.9,595.8 1408.6,596.1 1409.4,596.2 1410.1,596.2 1410.8,596 1411.5,595.6 1412.2,595.2 1413,594.6 1413.7,594.1 1414.4,593.5 1415.1,593 1415.8,592.4 1416.5,592 1417.3,591.6 1418,591.3 1418.7,591.1 1419.4,590.9 1420.1,590.8 1420.9,590.7 1421.6,590.6" stroke="#e6b84c" stroke-width="2.0"/><path d="M1185.3,590.6 1186.1,590.7 1186.8,590.8 1187.5,591 1188.2,591.2 1188.9,591.5 1189.7,591.8 1190.4,592.2 1191.1,592.7 1191.8,593.2 1192.5,593.7 1193.2,594.3 1194,594.8 1194.7,595.3 1195.4,595.7 1196.1,595.9 1196.8,596 1197.6,596 1198.3,595.7 1199,595.4 1199.7,594.9 1200.4,594.3 1201.1,593.6 1201.9,592.9 1202.6,592 1203.3,591.1 1204,590.1 1204.7,588.9 1205.5,587.5 1206.2,585.9 1206.9,583.9 1207.6,581.5 1208.3,578.7 1209,575.3 1209.8,571.5 1210.5,567.2 1211.2,562.5 1211.9,557.5 1212.6,552.3 1213.4,547.2 1214.1,542.4 1214.8,538 1215.5,534.4 1216.2,531.6 1216.9,529.9 1217.7,529.3 1218.4,529.8 1219.1,531.2 1219.8,533.4 1220.5,536.5 1221.2,540.1 1222,544.3 1222.7,548.8 1223.4,553.4 1224.1,558 1224.8,562.5 1225.6,566.7 1226.3,570.7 1227,574.2 1227.7,577.3 1228.4,580.1 1229.1,582.4 1229.9,584.4 1230.6,586.1 1231.3,587.5 1232,588.7 1232.7,589.8 1233.5,590.7 1234.2,591.6 1234.9,592.4 1235.6,593.2 1236.3,593.9 1237,594.5 1237.8,595.1 1238.5,595.5 1239.2,595.8 1239.9,596 1240.6,596 1241.4,595.8 1242.1,595.5 1242.8,595.1 1243.5,594.6 1244.2,594.1 1244.9,593.5 1245.7,593 1246.4,592.5 1247.1,592 1247.8,591.7 1248.5,591.4 1249.3,591.1 1250,590.9 1250.7,590.8 1251.4,590.7 1252.1,590.6M1355.5,590.6 1356.2,590.7 1357,590.8 1357.7,590.9 1358.4,591.1 1359.1,591.3 1359.8,591.6 1360.5,591.9 1361.3,592.4 1362,592.8 1362.7,593.3 1363.4,593.9 1364.1,594.4 1364.8,594.8 1365.6,595.2 1366.3,595.5 1367,595.7 1367.7,595.7 1368.4,595.5 1369.2,595.2 1369.9,594.8 1370.6,594.3 1371.3,593.7 1372,593 1372.7,592.3 1373.5,591.6 1374.2,590.8 1374.9,589.9 1375.6,589 1376.3,587.9 1377.1,586.6 1377.8,585.2 1378.5,583.4 1379.2,581.3 1379.9,578.9 1380.6,576.2 1381.4,573.1 1382.1,569.6 1382.8,565.9 1383.5,561.9 1384.2,557.9 1385,553.8 1385.7,549.9 1386.4,546.2 1387.1,543 1387.8,540.4 1388.5,538.4 1389.3,537.1 1390,536.7 1390.7,537.3 1391.4,538.9 1392.1,541.4 1392.9,544.8 1393.6,548.8 1394.3,553.2 1395,557.9 1395.7,562.5 1396.4,567 1397.2,571.2 1397.9,574.9 1398.6,578.3 1399.3,581.1 1400,583.5 1400.8,585.6 1401.5,587.2 1402.2,588.6 1402.9,589.8 1403.6,590.8 1404.3,591.7 1405.1,592.5 1405.8,593.2 1406.5,593.9 1407.2,594.5 1407.9,595 1408.6,595.3 1409.4,595.6 1410.1,595.7 1410.8,595.6 1411.5,595.4 1412.2,595.1 1413,594.7 1413.7,594.2 1414.4,593.7 1415.1,593.2 1415.8,592.7 1416.5,592.2 1417.3,591.8 1418,591.5 1418.7,591.2 1419.4,591 1420.1,590.9 1420.9,590.7 1421.6,590.7 1422.3,590.6" stroke="#e6b84c" stroke-width="2.0"/><path d="M1318.2,590.4 1318.9,589.9 1319.6,587.3 1320.3,581.3 1321.1,577.5 1321.8,577.7 1322.5,578.2 1323.2,579 1323.9,580.1 1324.6,581.3 1325.4,582.6 1326.1,583.9 1326.8,585.2 1327.5,586.3 1328.2,587.3 1329,588.1 1329.7,588.7 1330.4,589.3 1331.1,589.6 1331.8,589.9 1332.5,590.1 1333.3,590.3 1334,590.4M1383.5,590.6 1384.2,590.7 1385,590.8 1385.7,590.9 1386.4,591.1 1387.1,591.3 1387.8,591.6 1388.5,591.9 1389.3,592.4 1390,592.8 1390.7,593.3 1391.4,593.8 1392.1,594.3 1392.9,594.7 1393.6,595 1394.3,595.3 1395,595.4 1395.7,595.4 1396.4,595.3 1397.2,595 1397.9,594.7 1398.6,594.2 1399.3,593 1400,588.7 1400.8,576 1401.5,556.1 1402.2,545.3 1402.9,550.8 1403.6,563.9 1404.3,577.4 1405.1,586.7 1405.8,591.4 1406.5,593.3 1407.2,594.2 1407.9,594.7 1408.6,595 1409.4,595.3 1410.1,595.4 1410.8,595.4 1411.5,595.3 1412.2,595 1413,594.7 1413.7,594.3 1414.4,593.8 1415.1,593.3 1415.8,592.8 1416.5,592.3 1417.3,591.9 1418,591.6 1418.7,591.2 1419.4,590.8 1420.1,590.1 1420.9,588.8 1421.6,586.9 1422.3,584.3 1423,581.5 1423.7,579.2 1424.4,578.3 1425.2,578.6 1425.9,579.5 1426.6,580.8 1427.3,582.4 1428,584.1 1428.8,585.7 1429.5,587 1430.2,588.2 1430.9,589 1431.6,589.6 1432.3,590 1433.1,590.2 1433.8,590.3 1434.5,590.4" stroke="#e6b84c" stroke-width="2.0"/><path d="M1321.1,590.4 1321.8,590.1 1322.5,589.3 1323.2,587.4 1323.9,583.8 1324.6,578.2 1325.4,571.5 1326.1,565.8 1326.8,563.6 1327.5,565.8 1328.2,571.5 1329,578.2 1329.7,583.8 1330.4,587.4 1331.1,589.3 1331.8,590.1 1332.5,590.4M1359.1,590.4 1359.8,590.3 1360.5,590.1 1361.3,589.9 1362,589.6 1362.7,589.1 1363.4,588.4 1364.1,587.5 1364.8,586.4 1365.6,584.9 1366.3,583.2 1367,581.1 1367.7,578.8 1368.4,576.3 1369.2,573.8 1369.9,571.4 1370.6,569.2 1371.3,567.4 1372,566.1 1372.7,565.5 1373.5,567.7 1374.2,577.5 1374.9,586 1375.6,589.6 1376.3,590.4" stroke="#d5e6f8" stroke-width="1.1" opacity="0.75"/><path d="M1131 590.5H1490" stroke="#e6b84c" stroke-width="3"/><path d="M1206.2 590.5H1244.9" stroke="#4aa3f5" stroke-width="2"/><path d="M1132 571.5H1491" stroke="#ea3641" stroke-width="1.15"/></g><text x="1310.5" y="644.8" font-size="17.8" font-weight="bold" fill="#f6f6f6" text-anchor="middle">Temperature (°C)</text></svg>
<div class="abs" style="left:4px;top:669px;width:1913px;height:367px;background:#3f3f43"></div>
<div class="cell" style="left:5px;top:670px;width:18px;height:37px;background:#252526;line-height:37px;"></div>
<div class="cell" style="left:24px;top:670px;width:82px;height:37px;background:#252526;line-height:37px;letter-spacing:0.35px;padding-bottom:2px;line-height:35px">Sample</div>
<div class="cell" style="left:107px;top:670px;width:82px;height:37px;background:#252526;line-height:37px;letter-spacing:0.6px;line-height:37px">병리번호</div>
<div class="cell" style="left:190px;top:670px;width:252px;height:18px;background:#252526;line-height:18px;letter-spacing:0.6px;line-height:17px">환자 정보</div>
<div class="cell" style="left:190px;top:689px;width:82px;height:18px;background:#252526;line-height:18px;letter-spacing:0.6px;line-height:17px">이름</div>
<div class="cell" style="left:273px;top:689px;width:82px;height:18px;background:#252526;line-height:18px;letter-spacing:0.6px;line-height:17px">성별</div>
<div class="cell" style="left:356px;top:689px;width:86px;height:18px;background:#252526;line-height:18px;letter-spacing:0.6px;line-height:17px">생년월일</div>
<div class="cell" style="left:443px;top:670px;width:176px;height:18px;background:#252526;line-height:18px;letter-spacing:0.35px;line-height:17px">1Tube</div>
<div class="cell" style="left:620px;top:670px;width:176px;height:18px;background:#252526;line-height:18px;letter-spacing:0.35px;line-height:17px">2Tube</div>
<div class="cell" style="left:797px;top:670px;width:176px;height:18px;background:#252526;line-height:18px;letter-spacing:0.35px;line-height:17px">3Tube</div>
<div class="cell" style="left:974px;top:670px;width:176px;height:18px;background:#252526;line-height:18px;letter-spacing:0.35px;line-height:17px">4Tube</div>
<div class="cell" style="left:1151px;top:670px;width:183px;height:18px;background:#252526;line-height:18px;letter-spacing:0.35px;line-height:17px">5Tube</div>
<div class="cell" style="left:443px;top:689px;width:58px;height:18px;background:#252526;line-height:18px;letter-spacing:0.35px;line-height:17px">UU</div>
<div class="cell" style="left:502px;top:689px;width:58px;height:18px;background:#252526;line-height:18px;letter-spacing:0.35px;line-height:17px">GV</div>
<div class="cell" style="left:561px;top:689px;width:58px;height:18px;background:#252526;line-height:18px;letter-spacing:0.35px;line-height:17px">HSV1</div>
<div class="cell" style="left:620px;top:689px;width:58px;height:18px;background:#252526;line-height:18px;letter-spacing:0.35px;line-height:17px">UP</div>
<div class="cell" style="left:679px;top:689px;width:58px;height:18px;background:#252526;line-height:18px;letter-spacing:0.35px;line-height:17px">STR</div>
<div class="cell" style="left:738px;top:689px;width:58px;height:18px;background:#252526;line-height:18px;letter-spacing:0.35px;line-height:17px">MH</div>
<div class="cell" style="left:797px;top:689px;width:58px;height:18px;background:#252526;line-height:18px;letter-spacing:0.35px;line-height:17px">CT</div>
<div class="cell" style="left:856px;top:689px;width:58px;height:18px;background:#252526;line-height:18px;letter-spacing:0.35px;line-height:17px">NG</div>
<div class="cell" style="left:915px;top:689px;width:58px;height:18px;background:#252526;line-height:18px;letter-spacing:0.35px;line-height:17px">HSV2</div>
<div class="cell" style="left:974px;top:689px;width:58px;height:18px;background:#252526;line-height:18px;letter-spacing:0.35px;line-height:17px">MG</div>
<div class="cell" style="left:1033px;top:689px;width:58px;height:18px;background:#252526;line-height:18px;letter-spacing:0.35px;line-height:17px">CA</div>
<div class="cell" style="left:1092px;top:689px;width:58px;height:18px;background:#252526;line-height:18px;letter-spacing:0.35px;line-height:17px">TV</div>
<div class="cell" style="left:1151px;top:689px;width:58px;height:18px;background:#252526;line-height:18px;letter-spacing:0.35px;line-height:17px">I.C</div>
<div class="cell" style="left:1210px;top:689px;width:58px;height:18px;background:#252526;line-height:18px;letter-spacing:0.35px;line-height:17px">CMV</div>
<div class="cell" style="left:1269px;top:689px;width:65px;height:18px;background:#252526;line-height:18px;letter-spacing:0.35px;line-height:17px">TP</div>
<div class="cell" style="left:1335px;top:670px;width:358px;height:37px;background:#252526;line-height:37px;letter-spacing:0.15px;line-height:35px">Auto interpretation</div>
<div class="cell" style="left:1694px;top:670px;width:203px;height:37px;background:#252526;line-height:37px;letter-spacing:0.35px;line-height:35px">Comment</div>
<div class="cell" style="left:1898px;top:670px;width:17px;height:37px;background:#252526;line-height:37px;"></div>
<div class="cell" style="left:5px;top:708px;width:18px;height:31px;background:#252526;line-height:31px;"></div>
<div class="cell" style="left:24px;top:708px;width:82px;height:30px;background:#203220;line-height:30px;letter-spacing:0.3px;line-height:28px">positive</div>
<div class="cell" style="left:107px;top:708px;width:82px;height:30px;background:#203220;line-height:30px;"></div>
<div class="cell" style="left:190px;top:708px;width:82px;height:30px;background:#203220;line-height:30px;"></div>
<div class="cell" style="left:273px;top:708px;width:82px;height:30px;background:#203220;line-height:30px;"></div>
<div class="cell" style="left:356px;top:708px;width:86px;height:30px;background:#203220;line-height:30px;"></div>
<div class="cell" style="left:443px;top:708px;width:58px;height:30px;background:#203220;line-height:30px;line-height:28px;font-size:11px;letter-spacing:-0.6px;">+++</div>
<div class="cell" style="left:502px;top:708px;width:58px;height:30px;background:#203220;line-height:30px;line-height:28px;font-size:11px;letter-spacing:-0.6px;">+++</div>
<div class="cell" style="left:561px;top:708px;width:58px;height:30px;background:#203220;line-height:30px;line-height:28px;font-size:11px;font-size:10px;">–</div>
<div class="cell" style="left:620px;top:708px;width:58px;height:30px;background:#203220;line-height:30px;line-height:28px;font-size:11px;letter-spacing:-0.6px;">+</div>
<div class="cell" style="left:679px;top:708px;width:58px;height:30px;background:#203220;line-height:30px;line-height:28px;font-size:11px;letter-spacing:-0.6px;">++</div>
<div class="cell" style="left:738px;top:708px;width:58px;height:30px;background:#203220;line-height:30px;line-height:28px;font-size:11px;letter-spacing:-0.6px;">+++</div>
<div class="cell" style="left:797px;top:708px;width:58px;height:30px;background:#203220;line-height:30px;line-height:28px;font-size:11px;letter-spacing:-0.6px;">++</div>
<div class="cell" style="left:856px;top:708px;width:58px;height:30px;background:#203220;line-height:30px;line-height:28px;font-size:11px;letter-spacing:-0.6px;">+++</div>
<div class="cell" style="left:915px;top:708px;width:58px;height:30px;background:#203220;line-height:30px;line-height:28px;font-size:11px;letter-spacing:-0.6px;">+++</div>
<div class="cell" style="left:974px;top:708px;width:58px;height:30px;background:#203220;line-height:30px;line-height:28px;font-size:11px;letter-spacing:-0.6px;">+</div>
<div class="cell" style="left:1033px;top:708px;width:58px;height:30px;background:#203220;line-height:30px;line-height:28px;font-size:11px;letter-spacing:-0.6px;">++</div>
<div class="cell" style="left:1092px;top:708px;width:58px;height:30px;background:#203220;line-height:30px;line-height:28px;font-size:11px;letter-spacing:-0.6px;">+++</div>
<div class="cell" style="left:1151px;top:708px;width:58px;height:30px;background:#203220;line-height:30px;line-height:28px;font-size:11px;letter-spacing:-0.6px;">+++</div>
<div class="cell" style="left:1210px;top:708px;width:58px;height:30px;background:#203220;line-height:30px;line-height:28px;font-size:11px;letter-spacing:-0.6px;">+</div>
<div class="cell" style="left:1269px;top:708px;width:65px;height:30px;background:#203220;line-height:30px;line-height:28px;font-size:11px;letter-spacing:-0.6px;">+</div>
<div class="cell" style="left:1335px;top:708px;width:358px;height:30px;background:#203220;line-height:30px;line-height:12px;padding-top:3px;letter-spacing:-0.14px">MG+++, CA+++, UP+, STR++, HSV1+++, CT++, NG+++,<br>HSV2+++, UU+, CMV++, TV+++, GV+, MH+</div>
<div class="cell" style="left:1694px;top:708px;width:203px;height:30px;background:#203220;line-height:30px;"></div>
<div class="cell" style="left:5px;top:738px;width:18px;height:32px;background:#252526;line-height:32px;"></div>
<div class="cell" style="left:24px;top:739px;width:82px;height:30px;background:#252526;line-height:30px;letter-spacing:0.3px;line-height:28px">negative</div>
<div class="cell" style="left:107px;top:739px;width:82px;height:30px;background:#252526;line-height:30px;"></div>
<div class="cell" style="left:190px;top:739px;width:82px;height:30px;background:#252526;line-height:30px;"></div>
<div class="cell" style="left:273px;top:739px;width:82px;height:30px;background:#252526;line-height:30px;"></div>
<div class="cell" style="left:356px;top:739px;width:86px;height:30px;background:#252526;line-height:30px;"></div>
<div class="cell" style="left:443px;top:739px;width:58px;height:30px;background:#252526;line-height:30px;line-height:28px;font-size:11px;font-size:10px;">–</div>
<div class="cell" style="left:502px;top:739px;width:58px;height:30px;background:#252526;line-height:30px;line-height:28px;font-size:11px;font-size:10px;">–</div>
<div class="cell" style="left:561px;top:739px;width:58px;height:30px;background:#252526;line-height:30px;line-height:28px;font-size:11px;font-size:10px;">–</div>
<div class="cell" style="left:620px;top:739px;width:58px;height:30px;background:#252526;line-height:30px;line-height:28px;font-size:11px;font-size:10px;">–</div>
<div class="cell" style="left:679px;top:739px;width:58px;height:30px;background:#252526;line-height:30px;line-height:28px;font-size:11px;font-size:10px;">–</div>
<div class="cell" style="left:738px;top:739px;width:58px;height:30px;background:#252526;line-height:30px;line-height:28px;font-size:11px;font-size:10px;">–</div>
<div class="cell" style="left:797px;top:739px;width:58px;height:30px;background:#252526;line-height:30px;line-height:28px;font-size:11px;font-size:10px;">–</div>
<div class="cell" style="left:856px;top:739px;width:58px;height:30px;background:#252526;line-height:30px;line-height:28px;font-size:11px;font-size:10px;">–</div>
<div class="cell" style="left:915px;top:739px;width:58px;height:30px;background:#252526;line-height:30px;line-height:28px;font-size:11px;font-size:10px;">–</div>
<div class="cell" style="left:974px;top:739px;width:58px;height:30px;background:#252526;line-height:30px;line-height:28px;font-size:11px;font-size:10px;">–</div>
<div class="cell" style="left:1033px;top:739px;width:58px;height:30px;background:#252526;line-height:30px;line-height:28px;font-size:11px;font-size:10px;">–</div>
<div class="cell" style="left:1092px;top:739px;width:58px;height:30px;background:#252526;line-height:30px;line-height:28px;font-size:11px;font-size:10px;">–</div>
<div class="cell" style="left:1151px;top:739px;width:58px;height:30px;background:#252526;line-height:30px;line-height:28px;font-size:11px;font-size:10px;">–</div>
<div class="cell" style="left:1210px;top:739px;width:58px;height:30px;background:#252526;line-height:30px;line-height:28px;font-size:11px;font-size:10px;">–</div>
<div class="cell" style="left:1269px;top:739px;width:65px;height:30px;background:#252526;line-height:30px;line-height:28px;font-size:11px;font-size:10px;">–</div>
<div class="cell" style="left:1335px;top:739px;width:358px;height:30px;background:#252526;line-height:30px;line-height:28px;letter-spacing:-0.27px">Negative</div>
<div class="cell" style="left:1694px;top:739px;width:203px;height:30px;background:#252526;line-height:30px;"></div>
<div class="cell" style="left:5px;top:769px;width:18px;height:32px;background:#252526;line-height:32px;"></div>
<div class="cell" style="left:24px;top:770px;width:82px;height:30px;background:#203220;line-height:30px;letter-spacing:0.3px;line-height:28px">71</div>
<div class="cell" style="left:107px;top:770px;width:82px;height:30px;background:#203220;line-height:30px;"></div>
<div class="cell" style="left:190px;top:770px;width:82px;height:30px;background:#203220;line-height:30px;"></div>
<div class="cell" style="left:273px;top:770px;width:82px;height:30px;background:#203220;line-height:30px;"></div>
<div class="cell" style="left:356px;top:770px;width:86px;height:30px;background:#203220;line-height:30px;"></div>
<div class="cell" style="left:443px;top:770px;width:58px;height:30px;background:#203220;line-height:30px;line-height:28px;font-size:11px;font-size:10px;">–</div>
<div class="cell" style="left:502px;top:770px;width:58px;height:30px;background:#203220;line-height:30px;line-height:28px;font-size:11px;letter-spacing:-0.6px;">+++</div>
<div class="cell" style="left:561px;top:770px;width:58px;height:30px;background:#203220;line-height:30px;line-height:28px;font-size:11px;font-size:10px;">–</div>
<div class="cell" style="left:620px;top:770px;width:58px;height:30px;background:#203220;line-height:30px;line-height:28px;font-size:11px;font-size:10px;">–</div>
<div class="cell" style="left:679px;top:770px;width:58px;height:30px;background:#203220;line-height:30px;line-height:28px;font-size:11px;font-size:10px;">–</div>
<div class="cell" style="left:738px;top:770px;width:58px;height:30px;background:#203220;line-height:30px;line-height:28px;font-size:11px;font-size:10px;">–</div>
<div class="cell" style="left:797px;top:770px;width:58px;height:30px;background:#203220;line-height:30px;line-height:28px;font-size:11px;letter-spacing:-0.6px;">+++</div>
<div class="cell" style="left:856px;top:770px;width:58px;height:30px;background:#203220;line-height:30px;line-height:28px;font-size:11px;font-size:10px;">–</div>
<div class="cell" style="left:915px;top:770px;width:58px;height:30px;background:#203220;line-height:30px;line-height:28px;font-size:11px;font-size:10px;">–</div>
<div class="cell" style="left:974px;top:770px;width:58px;height:30px;background:#203220;line-height:30px;line-height:28px;font-size:11px;font-size:10px;">–</div>
<div class="cell" style="left:1033px;top:770px;width:58px;height:30px;background:#203220;line-height:30px;line-height:28px;font-size:11px;font-size:10px;">–</div>
<div class="cell" style="left:1092px;top:770px;width:58px;height:30px;background:#203220;line-height:30px;line-height:28px;font-size:11px;font-size:10px;">–</div>
<div class="cell" style="left:1151px;top:770px;width:58px;height:30px;background:#203220;line-height:30px;line-height:28px;font-size:11px;letter-spacing:-0.6px;">+++</div>
<div class="cell" style="left:1210px;top:770px;width:58px;height:30px;background:#203220;line-height:30px;line-height:28px;font-size:11px;font-size:10px;">–</div>
<div class="cell" style="left:1269px;top:770px;width:65px;height:30px;background:#203220;line-height:30px;line-height:28px;font-size:11px;font-size:10px;">–</div>
<div class="cell" style="left:1335px;top:770px;width:358px;height:30px;background:#203220;line-height:30px;line-height:28px;letter-spacing:-0.27px">CA+++, CT+++</div>
<div class="cell" style="left:1694px;top:770px;width:203px;height:30px;background:#203220;line-height:30px;"></div>
<div class="cell" style="left:5px;top:800px;width:18px;height:32px;background:#252526;line-height:32px;"></div>
<div class="cell" style="left:24px;top:801px;width:82px;height:30px;background:#252526;line-height:30px;letter-spacing:0.3px;line-height:28px">76</div>
<div class="cell" style="left:107px;top:801px;width:82px;height:30px;background:#252526;line-height:30px;"></div>
<div class="cell" style="left:190px;top:801px;width:82px;height:30px;background:#252526;line-height:30px;"></div>
<div class="cell" style="left:273px;top:801px;width:82px;height:30px;background:#252526;line-height:30px;"></div>
<div class="cell" style="left:356px;top:801px;width:86px;height:30px;background:#252526;line-height:30px;"></div>
<div class="cell" style="left:443px;top:801px;width:58px;height:30px;background:#252526;line-height:30px;line-height:28px;font-size:11px;font-size:10px;">–</div>
<div class="cell" style="left:502px;top:801px;width:58px;height:30px;background:#252526;line-height:30px;line-height:28px;font-size:11px;letter-spacing:-0.6px;">+++</div>
<div class="cell" style="left:561px;top:801px;width:58px;height:30px;background:#252526;line-height:30px;line-height:28px;font-size:11px;font-size:10px;">–</div>
<div class="cell" style="left:620px;top:801px;width:58px;height:30px;background:#252526;line-height:30px;line-height:28px;font-size:11px;font-size:10px;">–</div>
<div class="cell" style="left:679px;top:801px;width:58px;height:30px;background:#252526;line-height:30px;line-height:28px;font-size:11px;font-size:10px;">–</div>
<div class="cell" style="left:738px;top:801px;width:58px;height:30px;background:#252526;line-height:30px;line-height:28px;font-size:11px;letter-spacing:-0.6px;">+++</div>
<div class="cell" style="left:797px;top:801px;width:58px;height:30px;background:#252526;line-height:30px;line-height:28px;font-size:11px;font-size:10px;">–</div>
<div class="cell" style="left:856px;top:801px;width:58px;height:30px;background:#252526;line-height:30px;line-height:28px;font-size:11px;font-size:10px;">–</div>
<div class="cell" style="left:915px;top:801px;width:58px;height:30px;background:#252526;line-height:30px;line-height:28px;font-size:11px;letter-spacing:-0.6px;">++</div>
<div class="cell" style="left:974px;top:801px;width:58px;height:30px;background:#252526;line-height:30px;line-height:28px;font-size:11px;font-size:10px;">–</div>
<div class="cell" style="left:1033px;top:801px;width:58px;height:30px;background:#252526;line-height:30px;line-height:28px;font-size:11px;font-size:10px;">–</div>
<div class="cell" style="left:1092px;top:801px;width:58px;height:30px;background:#252526;line-height:30px;line-height:28px;font-size:11px;font-size:10px;">–</div>
<div class="cell" style="left:1151px;top:801px;width:58px;height:30px;background:#252526;line-height:30px;line-height:28px;font-size:11px;letter-spacing:-0.6px;">+++</div>
<div class="cell" style="left:1210px;top:801px;width:58px;height:30px;background:#252526;line-height:30px;line-height:28px;font-size:11px;font-size:10px;">–</div>
<div class="cell" style="left:1269px;top:801px;width:65px;height:30px;background:#252526;line-height:30px;line-height:28px;font-size:11px;font-size:10px;">–</div>
<div class="cell" style="left:1335px;top:801px;width:358px;height:30px;background:#252526;line-height:30px;line-height:28px;letter-spacing:-0.27px">CA+++, HSV1+++, HSV2++</div>
<div class="cell" style="left:1694px;top:801px;width:203px;height:30px;background:#252526;line-height:30px;"></div>
<div class="cell" style="left:5px;top:831px;width:18px;height:32px;background:#252526;line-height:32px;"></div>
<div class="cell" style="left:24px;top:832px;width:82px;height:30px;background:#034574;line-height:30px;letter-spacing:0.3px;line-height:28px">79</div>
<div class="cell" style="left:107px;top:832px;width:82px;height:30px;background:#034574;line-height:30px;"></div>
<div class="cell" style="left:190px;top:832px;width:82px;height:30px;background:#034574;line-height:30px;"></div>
<div class="cell" style="left:273px;top:832px;width:82px;height:30px;background:#034574;line-height:30px;"></div>
<div class="cell" style="left:356px;top:832px;width:86px;height:30px;background:#034574;line-height:30px;"></div>
<div class="cell" style="left:443px;top:832px;width:58px;height:30px;background:#034574;line-height:30px;line-height:28px;font-size:11px;font-size:10px;">–</div>
<div class="cell" style="left:502px;top:832px;width:58px;height:30px;background:#034574;line-height:30px;line-height:28px;font-size:11px;font-size:10px;">–</div>
<div class="cell" style="left:561px;top:832px;width:58px;height:30px;background:#034574;line-height:30px;line-height:28px;font-size:11px;font-size:10px;">–</div>
<div class="cell" style="left:620px;top:832px;width:58px;height:30px;background:#034574;line-height:30px;line-height:28px;font-size:11px;font-size:10px;">–</div>
<div class="cell" style="left:679px;top:832px;width:58px;height:30px;background:#034574;line-height:30px;line-height:28px;font-size:11px;font-size:10px;">–</div>
<div class="cell" style="left:738px;top:832px;width:58px;height:30px;background:#034574;line-height:30px;line-height:28px;font-size:11px;font-size:10px;">–</div>
<div class="cell" style="left:797px;top:832px;width:58px;height:30px;background:#034574;line-height:30px;line-height:28px;font-size:11px;letter-spacing:-0.6px;">+++</div>
<div class="cell" style="left:856px;top:832px;width:58px;height:30px;background:#034574;line-height:30px;line-height:28px;font-size:11px;font-size:10px;">–</div>
<div class="cell" style="left:915px;top:832px;width:58px;height:30px;background:#034574;line-height:30px;line-height:28px;font-size:11px;letter-spacing:-0.6px;">+</div>
<div class="cell" style="left:974px;top:832px;width:58px;height:30px;background:#252526;line-height:30px;line-height:28px;font-size:11px;outline:1px dotted #d8d8d8;outline-offset:-1px;font-size:10px;">–</div>
<div class="cell" style="left:1033px;top:832px;width:58px;height:30px;background:#034574;line-height:30px;line-height:28px;font-size:11px;font-size:10px;">–</div>
<div class="cell" style="left:1092px;top:832px;width:58px;height:30px;background:#034574;line-height:30px;line-height:28px;font-size:11px;font-size:10px;">–</div>
<div class="cell" style="left:1151px;top:832px;width:58px;height:30px;background:#034574;line-height:30px;line-height:28px;font-size:11px;letter-spacing:-0.6px;">+++</div>
<div class="cell" style="left:1210px;top:832px;width:58px;height:30px;background:#034574;line-height:30px;line-height:28px;font-size:11px;font-size:10px;">–</div>
<div class="cell" style="left:1269px;top:832px;width:65px;height:30px;background:#034574;line-height:30px;line-height:28px;font-size:11px;font-size:10px;">–</div>
<div class="cell" style="left:1335px;top:832px;width:358px;height:30px;background:#034574;line-height:30px;line-height:28px;letter-spacing:-0.27px">CT+++, HSV2+</div>
<div class="cell" style="left:1694px;top:832px;width:203px;height:30px;background:#034574;line-height:30px;"></div>
<div class="cell" style="left:5px;top:862px;width:18px;height:32px;background:#252526;line-height:32px;"></div>
<div class="cell" style="left:24px;top:863px;width:82px;height:30px;background:#252526;line-height:30px;letter-spacing:0.3px;line-height:28px">96</div>
<div class="cell" style="left:107px;top:863px;width:82px;height:30px;background:#252526;line-height:30px;"></div>
<div class="cell" style="left:190px;top:863px;width:82px;height:30px;background:#252526;line-height:30px;"></div>
<div class="cell" style="left:273px;top:863px;width:82px;height:30px;background:#252526;line-height:30px;"></div>
<div class="cell" style="left:356px;top:863px;width:86px;height:30px;background:#252526;line-height:30px;"></div>
<div class="cell" style="left:443px;top:863px;width:58px;height:30px;background:#252526;line-height:30px;line-height:28px;font-size:11px;font-size:10px;">–</div>
<div class="cell" style="left:502px;top:863px;width:58px;height:30px;background:#252526;line-height:30px;line-height:28px;font-size:11px;font-size:10px;">–</div>
<div class="cell" style="left:561px;top:863px;width:58px;height:30px;background:#252526;line-height:30px;line-height:28px;font-size:11px;font-size:10px;">–</div>
<div class="cell" style="left:620px;top:863px;width:58px;height:30px;background:#252526;line-height:30px;line-height:28px;font-size:11px;letter-spacing:-0.6px;">+++</div>
<div class="cell" style="left:679px;top:863px;width:58px;height:30px;background:#252526;line-height:30px;line-height:28px;font-size:11px;font-size:10px;">–</div>
<div class="cell" style="left:738px;top:863px;width:58px;height:30px;background:#252526;line-height:30px;line-height:28px;font-size:11px;letter-spacing:-0.6px;">+++</div>
<div class="cell" style="left:797px;top:863px;width:58px;height:30px;background:#252526;line-height:30px;line-height:28px;font-size:11px;letter-spacing:-0.6px;">+++</div>
<div class="cell" style="left:856px;top:863px;width:58px;height:30px;background:#252526;line-height:30px;line-height:28px;font-size:11px;font-size:10px;">–</div>
<div class="cell" style="left:915px;top:863px;width:58px;height:30px;background:#252526;line-height:30px;line-height:28px;font-size:11px;font-size:10px;">–</div>
<div class="cell" style="left:974px;top:863px;width:58px;height:30px;background:#252526;line-height:30px;line-height:28px;font-size:11px;font-size:10px;">–</div>
<div class="cell" style="left:1033px;top:863px;width:58px;height:30px;background:#252526;line-height:30px;line-height:28px;font-size:11px;letter-spacing:-0.6px;">+++</div>
<div class="cell" style="left:1092px;top:863px;width:58px;height:30px;background:#252526;line-height:30px;line-height:28px;font-size:11px;font-size:10px;">–</div>
<div class="cell" style="left:1151px;top:863px;width:58px;height:30px;background:#252526;line-height:30px;line-height:28px;font-size:11px;letter-spacing:-0.6px;">+++</div>
<div class="cell" style="left:1210px;top:863px;width:58px;height:30px;background:#252526;line-height:30px;line-height:28px;font-size:11px;font-size:10px;">–</div>
<div class="cell" style="left:1269px;top:863px;width:65px;height:30px;background:#252526;line-height:30px;line-height:28px;font-size:11px;letter-spacing:-0.6px;">+++</div>
<div class="cell" style="left:1335px;top:863px;width:358px;height:30px;background:#252526;line-height:30px;line-height:28px;letter-spacing:-0.27px">UP+++, HSV1+++, CT+++, CMV+++, MH+++</div>
<div class="cell" style="left:1694px;top:863px;width:203px;height:30px;background:#252526;line-height:30px;"></div>
<div class="cell" style="left:5px;top:893px;width:18px;height:32px;background:#252526;line-height:32px;"></div>
<div class="cell" style="left:24px;top:894px;width:82px;height:30px;background:#203220;line-height:30px;letter-spacing:0.3px;line-height:28px">97</div>
<div class="cell" style="left:107px;top:894px;width:82px;height:30px;background:#203220;line-height:30px;"></div>
<div class="cell" style="left:190px;top:894px;width:82px;height:30px;background:#203220;line-height:30px;"></div>
<div class="cell" style="left:273px;top:894px;width:82px;height:30px;background:#203220;line-height:30px;"></div>
<div class="cell" style="left:356px;top:894px;width:86px;height:30px;background:#203220;line-height:30px;"></div>
<div class="cell" style="left:443px;top:894px;width:58px;height:30px;background:#203220;line-height:30px;line-height:28px;font-size:11px;font-size:10px;">–</div>
<div class="cell" style="left:502px;top:894px;width:58px;height:30px;background:#203220;line-height:30px;line-height:28px;font-size:11px;letter-spacing:-0.6px;">+++</div>
<div class="cell" style="left:561px;top:894px;width:58px;height:30px;background:#203220;line-height:30px;line-height:28px;font-size:11px;font-size:10px;">–</div>
<div class="cell" style="left:620px;top:894px;width:58px;height:30px;background:#203220;line-height:30px;line-height:28px;font-size:11px;font-size:10px;">–</div>
<div class="cell" style="left:679px;top:894px;width:58px;height:30px;background:#203220;line-height:30px;line-height:28px;font-size:11px;font-size:10px;">–</div>
<div class="cell" style="left:738px;top:894px;width:58px;height:30px;background:#203220;line-height:30px;line-height:28px;font-size:11px;font-size:10px;">–</div>
<div class="cell" style="left:797px;top:894px;width:58px;height:30px;background:#203220;line-height:30px;line-height:28px;font-size:11px;font-size:10px;">–</div>
<div class="cell" style="left:856px;top:894px;width:58px;height:30px;background:#203220;line-height:30px;line-height:28px;font-size:11px;font-size:10px;">–</div>
<div class="cell" style="left:915px;top:894px;width:58px;height:30px;background:#203220;line-height:30px;line-height:28px;font-size:11px;font-size:10px;">–</div>
<div class="cell" style="left:974px;top:894px;width:58px;height:30px;background:#203220;line-height:30px;line-height:28px;font-size:11px;font-size:10px;">–</div>
<div class="cell" style="left:1033px;top:894px;width:58px;height:30px;background:#203220;line-height:30px;line-height:28px;font-size:11px;letter-spacing:-0.6px;">+++</div>
<div class="cell" style="left:1092px;top:894px;width:58px;height:30px;background:#203220;line-height:30px;line-height:28px;font-size:11px;font-size:10px;">–</div>
<div class="cell" style="left:1151px;top:894px;width:58px;height:30px;background:#203220;line-height:30px;line-height:28px;font-size:11px;letter-spacing:-0.6px;">+++</div>
<div class="cell" style="left:1210px;top:894px;width:58px;height:30px;background:#203220;line-height:30px;line-height:28px;font-size:11px;font-size:10px;">–</div>
<div class="cell" style="left:1269px;top:894px;width:65px;height:30px;background:#203220;line-height:30px;line-height:28px;font-size:11px;font-size:10px;">–</div>
<div class="cell" style="left:1335px;top:894px;width:358px;height:30px;background:#203220;line-height:30px;line-height:28px;letter-spacing:-0.27px">CA+++, CMV+++</div>
<div class="cell" style="left:1694px;top:894px;width:203px;height:30px;background:#203220;line-height:30px;"></div>
<div class="cell" style="left:5px;top:924px;width:18px;height:32px;background:#252526;line-height:32px;"></div>
<div class="cell" style="left:24px;top:925px;width:82px;height:30px;background:#252526;line-height:30px;letter-spacing:0.3px;line-height:28px">99</div>
<div class="cell" style="left:107px;top:925px;width:82px;height:30px;background:#252526;line-height:30px;"></div>
<div class="cell" style="left:190px;top:925px;width:82px;height:30px;background:#252526;line-height:30px;"></div>
<div class="cell" style="left:273px;top:925px;width:82px;height:30px;background:#252526;line-height:30px;"></div>
<div class="cell" style="left:356px;top:925px;width:86px;height:30px;background:#252526;line-height:30px;"></div>
<div class="cell" style="left:443px;top:925px;width:58px;height:30px;background:#252526;line-height:30px;line-height:28px;font-size:11px;letter-spacing:-0.6px;">+++</div>
<div class="cell" style="left:502px;top:925px;width:58px;height:30px;background:#252526;line-height:30px;line-height:28px;font-size:11px;font-size:10px;">–</div>
<div class="cell" style="left:561px;top:925px;width:58px;height:30px;background:#252526;line-height:30px;line-height:28px;font-size:11px;font-size:10px;">–</div>
<div class="cell" style="left:620px;top:925px;width:58px;height:30px;background:#252526;line-height:30px;line-height:28px;font-size:11px;font-size:10px;">–</div>
<div class="cell" style="left:679px;top:925px;width:58px;height:30px;background:#252526;line-height:30px;line-height:28px;font-size:11px;font-size:10px;">–</div>
<div class="cell" style="left:738px;top:925px;width:58px;height:30px;background:#252526;line-height:30px;line-height:28px;font-size:11px;letter-spacing:-0.6px;">+++</div>
<div class="cell" style="left:797px;top:925px;width:58px;height:30px;background:#252526;line-height:30px;line-height:28px;font-size:11px;letter-spacing:-0.6px;">+++</div>
<div class="cell" style="left:856px;top:925px;width:58px;height:30px;background:#252526;line-height:30px;line-height:28px;font-size:11px;font-size:10px;">–</div>
<div class="cell" style="left:915px;top:925px;width:58px;height:30px;background:#252526;line-height:30px;line-height:28px;font-size:11px;letter-spacing:-0.6px;">+++</div>
<div class="cell" style="left:974px;top:925px;width:58px;height:30px;background:#252526;line-height:30px;line-height:28px;font-size:11px;font-size:10px;">–</div>
<div class="cell" style="left:1033px;top:925px;width:58px;height:30px;background:#252526;line-height:30px;line-height:28px;font-size:11px;font-size:10px;">–</div>
<div class="cell" style="left:1092px;top:925px;width:58px;height:30px;background:#252526;line-height:30px;line-height:28px;font-size:11px;font-size:10px;">–</div>
<div class="cell" style="left:1151px;top:925px;width:58px;height:30px;background:#252526;line-height:30px;line-height:28px;font-size:11px;letter-spacing:-0.6px;">+++</div>
<div class="cell" style="left:1210px;top:925px;width:58px;height:30px;background:#252526;line-height:30px;line-height:28px;font-size:11px;font-size:10px;">–</div>
<div class="cell" style="left:1269px;top:925px;width:65px;height:30px;background:#252526;line-height:30px;line-height:28px;font-size:11px;letter-spacing:-0.6px;">++</div>
<div class="cell" style="left:1335px;top:925px;width:358px;height:30px;background:#252526;line-height:30px;line-height:28px;letter-spacing:-0.27px">MG+++, HSV1+++, CT+++, HSV2+++, MH++</div>
<div class="cell" style="left:1694px;top:925px;width:203px;height:30px;background:#252526;line-height:30px;"></div>
<div class="cell" style="left:5px;top:955px;width:18px;height:32px;background:#252526;line-height:32px;"></div>
<div class="cell" style="left:24px;top:956px;width:82px;height:30px;background:#203220;line-height:30px;letter-spacing:0.3px;line-height:28px">101</div>
<div class="cell" style="left:107px;top:956px;width:82px;height:30px;background:#203220;line-height:30px;"></div>
<div class="cell" style="left:190px;top:956px;width:82px;height:30px;background:#203220;line-height:30px;"></div>
<div class="cell" style="left:273px;top:956px;width:82px;height:30px;background:#203220;line-height:30px;"></div>
<div class="cell" style="left:356px;top:956px;width:86px;height:30px;background:#203220;line-height:30px;"></div>
<div class="cell" style="left:443px;top:956px;width:58px;height:30px;background:#203220;line-height:30px;line-height:28px;font-size:11px;font-size:10px;">–</div>
<div class="cell" style="left:502px;top:956px;width:58px;height:30px;background:#203220;line-height:30px;line-height:28px;font-size:11px;font-size:10px;">–</div>
<div class="cell" style="left:561px;top:956px;width:58px;height:30px;background:#203220;line-height:30px;line-height:28px;font-size:11px;font-size:10px;">–</div>
<div class="cell" style="left:620px;top:956px;width:58px;height:30px;background:#203220;line-height:30px;line-height:28px;font-size:11px;font-size:10px;">–</div>
<div class="cell" style="left:679px;top:956px;width:58px;height:30px;background:#203220;line-height:30px;line-height:28px;font-size:11px;font-size:10px;">–</div>
<div class="cell" style="left:738px;top:956px;width:58px;height:30px;background:#203220;line-height:30px;line-height:28px;font-size:11px;font-size:10px;">–</div>
<div class="cell" style="left:797px;top:956px;width:58px;height:30px;background:#203220;line-height:30px;line-height:28px;font-size:11px;font-size:10px;">–</div>
<div class="cell" style="left:856px;top:956px;width:58px;height:30px;background:#203220;line-height:30px;line-height:28px;font-size:11px;font-size:10px;">–</div>
<div class="cell" style="left:915px;top:956px;width:58px;height:30px;background:#203220;line-height:30px;line-height:28px;font-size:11px;font-size:10px;">–</div>
<div class="cell" style="left:974px;top:956px;width:58px;height:30px;background:#203220;line-height:30px;line-height:28px;font-size:11px;font-size:10px;">–</div>
<div class="cell" style="left:1033px;top:956px;width:58px;height:30px;background:#203220;line-height:30px;line-height:28px;font-size:11px;letter-spacing:-0.6px;">+++</div>
<div class="cell" style="left:1092px;top:956px;width:58px;height:30px;background:#203220;line-height:30px;line-height:28px;font-size:11px;font-size:10px;">–</div>
<div class="cell" style="left:1151px;top:956px;width:58px;height:30px;background:#203220;line-height:30px;line-height:28px;font-size:11px;letter-spacing:-0.6px;">+++</div>
<div class="cell" style="left:1210px;top:956px;width:58px;height:30px;background:#203220;line-height:30px;line-height:28px;font-size:11px;font-size:10px;">–</div>
<div class="cell" style="left:1269px;top:956px;width:65px;height:30px;background:#203220;line-height:30px;line-height:28px;font-size:11px;font-size:10px;">–</div>
<div class="cell" style="left:1335px;top:956px;width:358px;height:30px;background:#203220;line-height:30px;line-height:28px;letter-spacing:-0.27px">CMV+++</div>
<div class="cell" style="left:1694px;top:956px;width:203px;height:30px;background:#203220;line-height:30px;"></div>
<div class="cell" style="left:5px;top:986px;width:18px;height:32px;background:#252526;line-height:32px;"></div>
<div class="cell" style="left:24px;top:987px;width:82px;height:30px;background:#252526;line-height:30px;letter-spacing:0.3px;line-height:28px">102</div>
<div class="cell" style="left:107px;top:987px;width:82px;height:30px;background:#252526;line-height:30px;"></div>
<div class="cell" style="left:190px;top:987px;width:82px;height:30px;background:#252526;line-height:30px;"></div>
<div class="cell" style="left:273px;top:987px;width:82px;height:30px;background:#252526;line-height:30px;"></div>
<div class="cell" style="left:356px;top:987px;width:86px;height:30px;background:#252526;line-height:30px;"></div>
<div class="cell" style="left:443px;top:987px;width:58px;height:30px;background:#252526;line-height:30px;line-height:28px;font-size:11px;font-size:10px;">–</div>
<div class="cell" style="left:502px;top:987px;width:58px;height:30px;background:#252526;line-height:30px;line-height:28px;font-size:11px;letter-spacing:-0.6px;">+++</div>
<div class="cell" style="left:561px;top:987px;width:58px;height:30px;background:#252526;line-height:30px;line-height:28px;font-size:11px;font-size:10px;">–</div>
<div class="cell" style="left:620px;top:987px;width:58px;height:30px;background:#252526;line-height:30px;line-height:28px;font-size:11px;letter-spacing:-0.6px;">+++</div>
<div class="cell" style="left:679px;top:987px;width:58px;height:30px;background:#252526;line-height:30px;line-height:28px;font-size:11px;font-size:10px;">–</div>
<div class="cell" style="left:738px;top:987px;width:58px;height:30px;background:#252526;line-height:30px;line-height:28px;font-size:11px;font-size:10px;">–</div>
<div class="cell" style="left:797px;top:987px;width:58px;height:30px;background:#252526;line-height:30px;line-height:28px;font-size:11px;font-size:10px;">–</div>
<div class="cell" style="left:856px;top:987px;width:58px;height:30px;background:#252526;line-height:30px;line-height:28px;font-size:11px;font-size:10px;">–</div>
<div class="cell" style="left:915px;top:987px;width:58px;height:30px;background:#252526;line-height:30px;line-height:28px;font-size:11px;letter-spacing:-0.6px;">++</div>
<div class="cell" style="left:974px;top:987px;width:58px;height:30px;background:#252526;line-height:30px;line-height:28px;font-size:11px;letter-spacing:-0.6px;">+++</div>
<div class="cell" style="left:1033px;top:987px;width:58px;height:30px;background:#252526;line-height:30px;line-height:28px;font-size:11px;font-size:10px;">–</div>
<div class="cell" style="left:1092px;top:987px;width:58px;height:30px;background:#252526;line-height:30px;line-height:28px;font-size:11px;font-size:10px;">–</div>
<div class="cell" style="left:1151px;top:987px;width:58px;height:30px;background:#252526;line-height:30px;line-height:28px;font-size:11px;letter-spacing:-0.6px;">+++</div>
<div class="cell" style="left:1210px;top:987px;width:58px;height:30px;background:#252526;line-height:30px;line-height:28px;font-size:11px;font-size:10px;">–</div>
<div class="cell" style="left:1269px;top:987px;width:65px;height:30px;background:#252526;line-height:30px;line-height:28px;font-size:11px;letter-spacing:-0.6px;">+++</div>
<div class="cell" style="left:1335px;top:987px;width:358px;height:30px;background:#252526;line-height:30px;line-height:28px;letter-spacing:-0.27px">CA+++, UP+++, HSV2++, UU+++, MH+++</div>
<div class="cell" style="left:1694px;top:987px;width:203px;height:30px;background:#252526;line-height:30px;"></div>
<div class="cell" style="left:5px;top:1017px;width:18px;height:19px;background:#252526;line-height:19px;"></div>
<div class="cell" style="left:24px;top:1018px;width:82px;height:18px;background:#203220;line-height:18px;letter-spacing:0.3px;line-height:28px">103</div>
<div class="cell" style="left:107px;top:1018px;width:82px;height:18px;background:#203220;line-height:18px;"></div>
<div class="cell" style="left:190px;top:1018px;width:82px;height:18px;background:#203220;line-height:18px;"></div>
<div class="cell" style="left:273px;top:1018px;width:82px;height:18px;background:#203220;line-height:18px;"></div>
<div class="cell" style="left:356px;top:1018px;width:86px;height:18px;background:#203220;line-height:18px;"></div>
<div class="cell" style="left:443px;top:1018px;width:58px;height:18px;background:#203220;line-height:18px;line-height:28px;font-size:11px;font-size:10px;">–</div>
<div class="cell" style="left:502px;top:1018px;width:58px;height:18px;background:#203220;line-height:18px;line-height:28px;font-size:11px;letter-spacing:-0.6px;">+++</div>
<div class="cell" style="left:561px;top:1018px;width:58px;height:18px;background:#203220;line-height:18px;line-height:28px;font-size:11px;font-size:10px;">–</div>
<div class="cell" style="left:620px;top:1018px;width:58px;height:18px;background:#203220;line-height:18px;line-height:28px;font-size:11px;font-size:10px;">–</div>
<div class="cell" style="left:679px;top:1018px;width:58px;height:18px;background:#203220;line-height:18px;line-height:28px;font-size:11px;font-size:10px;">–</div>
<div class="cell" style="left:738px;top:1018px;width:58px;height:18px;background:#203220;line-height:18px;line-height:28px;font-size:11px;font-size:10px;">–</div>
<div class="cell" style="left:797px;top:1018px;width:58px;height:18px;background:#203220;line-height:18px;line-height:28px;font-size:11px;font-size:10px;">–</div>
<div class="cell" style="left:856px;top:1018px;width:58px;height:18px;background:#203220;line-height:18px;line-height:28px;font-size:11px;font-size:10px;">–</div>
<div class="cell" style="left:915px;top:1018px;width:58px;height:18px;background:#203220;line-height:18px;line-height:28px;font-size:11px;font-size:10px;">–</div>
<div class="cell" style="left:974px;top:1018px;width:58px;height:18px;background:#203220;line-height:18px;line-height:28px;font-size:11px;font-size:10px;">–</div>
<div class="cell" style="left:1033px;top:1018px;width:58px;height:18px;background:#203220;line-height:18px;line-height:28px;font-size:11px;letter-spacing:-0.6px;">+++</div>
<div class="cell" style="left:1092px;top:1018px;width:58px;height:18px;background:#203220;line-height:18px;line-height:28px;font-size:11px;font-size:10px;">–</div>
<div class="cell" style="left:1151px;top:1018px;width:58px;height:18px;background:#203220;line-height:18px;line-height:28px;font-size:11px;letter-spacing:-0.6px;">+++</div>
<div class="cell" style="left:1210px;top:1018px;width:58px;height:18px;background:#203220;line-height:18px;line-height:28px;font-size:11px;font-size:10px;">–</div>
<div class="cell" style="left:1269px;top:1018px;width:65px;height:18px;background:#203220;line-height:18px;line-height:28px;font-size:11px;font-size:10px;">–</div>
<div class="cell" style="left:1335px;top:1018px;width:358px;height:18px;background:#203220;line-height:18px;line-height:28px;letter-spacing:-0.27px">CA+++, CMV+++</div>
<div class="cell" style="left:1694px;top:1018px;width:203px;height:18px;background:#203220;line-height:18px;"></div>
<svg class="abs" style="left:12px;top:843px" width="6" height="9"><path d="M1 0.5L5 4.5L1 8.5z" fill="#f1f1f1"/></svg>
<div class="abs" style="left:1897px;top:707px;width:19px;height:329px;background:#3e3e42"></div>
<div class="abs" style="left:1897px;top:724px;width:19px;height:294px;background:#414144"></div>
<svg class="abs" style="left:1901px;top:713px" width="11" height="6"><path d="M0.5 5.5L5.5 0.5L10.5 5.5z" fill="#b8b8b8"/></svg>
<div class="abs" style="left:1902px;top:725px;width:9px;height:172px;background:#686868"></div>
<svg class="abs" style="left:1901px;top:1025px" width="11" height="6"><path d="M0.5 0.5L5.5 5.5L10.5 0.5z" fill="#b8b8b8"/></svg>
<div class="abs" style="left:1px;top:1036px;width:1918px;height:3px;background:#2d2d30"></div>
<div class="abs" style="left:4px;top:1035px;width:1913px;height:1px;background:#47474a"></div>
<div class="abs" style="left:1916px;top:669px;width:1px;height:367px;background:#47474a"></div>
</body></html>
